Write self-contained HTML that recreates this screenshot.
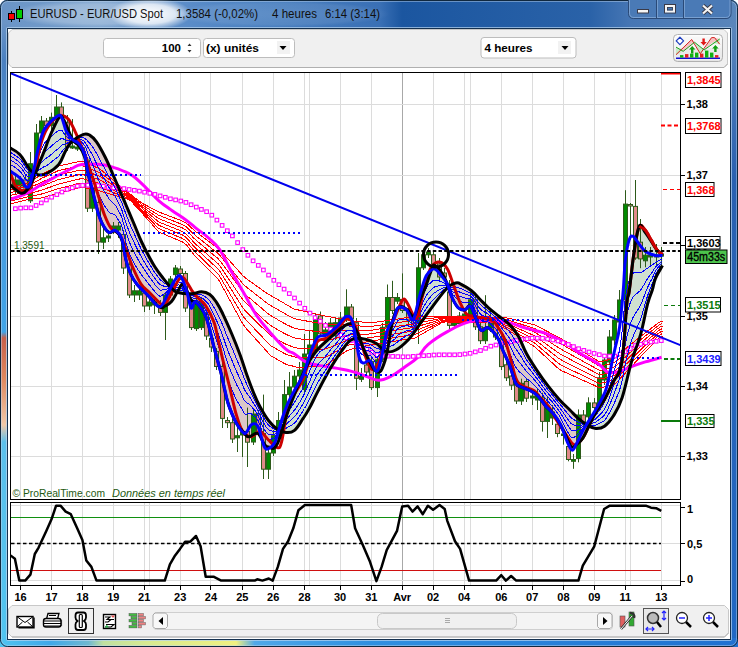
<!DOCTYPE html>
<html><head><meta charset="utf-8">
<style>
html,body{margin:0;padding:0;width:738px;height:647px;overflow:hidden;background:#fff;}
svg{display:block;font-family:"Liberation Sans",sans-serif;}
</style></head><body>
<svg width="738" height="647" viewBox="0 0 738 647">
<defs>
<linearGradient id="tb" x1="0" y1="0" x2="1" y2="0"><stop offset="0.0000" stop-color="#6a94c6"/><stop offset="0.1355" stop-color="#78a0cc"/><stop offset="0.2575" stop-color="#5a8cc8"/><stop offset="0.3523" stop-color="#4a80c0"/><stop offset="0.5149" stop-color="#3a70b5"/><stop offset="0.5447" stop-color="#1b56a0"/><stop offset="0.7995" stop-color="#2a62a8"/><stop offset="0.8537" stop-color="#4676b4"/><stop offset="1.0000" stop-color="#5a86bb"/></linearGradient>
<linearGradient id="lf" x1="0" y1="0" x2="0" y2="1">
<stop offset="0.0000" stop-color="#6a94c6"/><stop offset="0.0578" stop-color="#4a80c0"/><stop offset="0.2825" stop-color="#4a9ade"/><stop offset="0.4944" stop-color="#40a4e8"/><stop offset="0.5040" stop-color="#c8604a"/><stop offset="0.5714" stop-color="#e08a60"/><stop offset="0.6437" stop-color="#f0c8a8"/><stop offset="0.6709" stop-color="#5cc0ec"/><stop offset="1.0000" stop-color="#50c4f0"/>
</linearGradient>
<linearGradient id="rf" x1="0" y1="0" x2="0" y2="1">
<stop offset="0" stop-color="#5a86bb"/><stop offset="0.25" stop-color="#2a60b0"/><stop offset="1" stop-color="#2068c4"/>
</linearGradient>
<linearGradient id="bf" x1="0" y1="0" x2="1" y2="0">
<stop offset="0" stop-color="#50c4f0"/><stop offset="0.068" stop-color="#40a8e8"/><stop offset="0.12" stop-color="#70b8d0"/><stop offset="0.14" stop-color="#c0e0a0"/><stop offset="0.2" stop-color="#d8ea90"/><stop offset="0.32" stop-color="#f0f080"/><stop offset="0.345" stop-color="#50a8e8"/><stop offset="0.5" stop-color="#3090e0"/><stop offset="1" stop-color="#2070d0"/>
</linearGradient>
<radialGradient id="glow" cx="0.5" cy="0.5" r="0.5">
<stop offset="0" stop-color="#ffffff" stop-opacity="0.95"/><stop offset="0.6" stop-color="#ffffff" stop-opacity="0.75"/><stop offset="1" stop-color="#ffffff" stop-opacity="0"/>
</radialGradient>
<radialGradient id="glow2" cx="0.5" cy="0.5" r="0.5">
<stop offset="0" stop-color="#ffffff" stop-opacity="0.35"/><stop offset="0.7" stop-color="#ffffff" stop-opacity="0.25"/><stop offset="1" stop-color="#ffffff" stop-opacity="0"/>
</radialGradient>
<radialGradient id="glow3" cx="0.5" cy="0.5" r="0.5">
<stop offset="0" stop-color="#ffffff" stop-opacity="0.12"/><stop offset="0.8" stop-color="#ffffff" stop-opacity="0.08"/><stop offset="1" stop-color="#ffffff" stop-opacity="0"/>
</radialGradient>
<linearGradient id="btnbg" x1="0" y1="0" x2="0" y2="1">
<stop offset="0" stop-color="#ffffff"/><stop offset="1" stop-color="#e4e4e4"/>
</linearGradient>
<linearGradient id="capbtn" x1="0" y1="0" x2="0" y2="1">
<stop offset="0" stop-color="#5f8ccc"/><stop offset="0.5" stop-color="#3a6db0"/><stop offset="1" stop-color="#2a5fa5"/>
</linearGradient>
<clipPath id="cc"><rect x="11" y="73" width="669" height="426"/></clipPath>
<clipPath id="ci"><rect x="11" y="503" width="669" height="82"/></clipPath>
</defs>
<rect x="0" y="0" width="738" height="647" rx="7" fill="#2c64aa"/>
<rect x="0" y="0" width="738" height="29" rx="7" fill="url(#tb)"/>
<rect x="0" y="24" width="8" height="623" fill="url(#lf)"/>
<rect x="730" y="24" width="8" height="623" fill="url(#rf)"/>
<rect x="0" y="638" width="738" height="9" fill="url(#bf)"/>
<path d="M0,636 V640 Q0,647 7,647 H731 Q738,647 738,640 V636 Z" fill="none"/>
<rect x="0.5" y="0.5" width="737" height="646" rx="7" fill="none" stroke="#10283f"/>
<rect x="1.5" y="1.5" width="735" height="644" rx="6" fill="none" stroke="#c0d8f0" stroke-opacity="0.45"/>
<ellipse cx="100" cy="14" rx="90" ry="14" fill="url(#glow2)"/>
<ellipse cx="150" cy="14" rx="42" ry="16" fill="url(#glow)"/>
<ellipse cx="280" cy="14" rx="110" ry="13" fill="url(#glow3)"/>
<rect x="8.5" y="13.5" width="6" height="6" fill="#f00" stroke="#000"/>
<line x1="11.5" y1="11" x2="11.5" y2="13" stroke="#000"/><line x1="11.5" y1="20" x2="11.5" y2="22" stroke="#000"/>
<rect x="16.5" y="9.5" width="6" height="9" fill="#0c0" stroke="#000"/>
<line x1="19.5" y1="6" x2="19.5" y2="9" stroke="#000"/><line x1="19.5" y1="19" x2="19.5" y2="22" stroke="#000"/>
<text x="30" y="18" font-size="12" fill="#101010" textLength="133" lengthAdjust="spacingAndGlyphs">EURUSD - EUR/USD Spot</text>
<text x="176" y="18" font-size="12" fill="#101010" textLength="82" lengthAdjust="spacingAndGlyphs">1,3584 (-0,02%)</text>
<text x="272" y="18" font-size="12" fill="#101010" textLength="45" lengthAdjust="spacingAndGlyphs">4 heures</text>
<text x="325" y="18" font-size="12" fill="#101010" textLength="55" lengthAdjust="spacingAndGlyphs">6:14 (3:14)</text>
<path d="M628.5,0 V13.5 Q628.5,18.5 633.5,18.5 H726 Q731,18.5 731,13.5 V0" fill="#4a7ab6" stroke="#2a4a78"/>
<path d="M629.5,0 V13 Q629.5,17.5 634,17.5 H725.5 Q730,17.5 730,13 V0" fill="none" stroke="#a0c0e6" stroke-opacity="0.55"/>
<line x1="656.5" y1="0" x2="656.5" y2="18" stroke="#2a4a78"/><line x1="683.5" y1="0" x2="683.5" y2="18" stroke="#2a4a78"/>
<line x1="657.5" y1="0" x2="657.5" y2="17" stroke="#a0c0e6" stroke-opacity="0.5"/><line x1="684.5" y1="0" x2="684.5" y2="17" stroke="#a0c0e6" stroke-opacity="0.5"/>
<rect x="637.5" y="9.5" width="11" height="3.5" fill="#f4f4f4" stroke="#3a3a48" stroke-width="1"/>
<rect x="664.5" y="4.5" width="11" height="8.5" fill="none" stroke="#3a3a48" stroke-width="1"/><rect x="666" y="6" width="8" height="5.5" fill="none" stroke="#f4f4f4" stroke-width="2"/><rect x="667.5" y="7.5" width="5" height="2.5" fill="#4a7ab6" stroke="#3a3a48" stroke-width="0.8"/>
<path d="M703,5.5 L712,13.5 M712,5.5 L703,13.5" stroke="#3a3a48" stroke-width="4"/>
<path d="M703,5.5 L712,13.5 M712,5.5 L703,13.5" stroke="#f4f4f4" stroke-width="2.2"/>
<rect x="6.5" y="27.5" width="725" height="613" rx="1" fill="none" stroke="#b8d4f0" stroke-opacity="0.7"/>
<rect x="7.5" y="28.5" width="723" height="611" fill="#fff" stroke="#14304e"/>
<path d="M8.5,33 L12,29.5 H724 L727.5,33 V64 L724,67.5 H12 L8.5,64 Z" fill="#f0f0f0" stroke="#c8c8c8"/>
<path d="M12,67.5 H724 L727.5,64" fill="none" stroke="#b0b0b0"/>
<rect x="103.5" y="38.5" width="97" height="19" rx="3" fill="#fff" stroke="#bdbdbd"/>
<text x="181" y="52" font-size="11.5" font-weight="bold" text-anchor="end" fill="#000">100</text>
<path d="M187.5,46 L189.5,43.5 L191.5,46 Z M187.5,50 L189.5,52.5 L191.5,50 Z" fill="#333"/>
<rect x="203.5" y="38.5" width="91" height="19" rx="3" fill="#fff" stroke="#bdbdbd"/>
<text x="206" y="52" font-size="11.5" font-weight="bold" fill="#000" textLength="53" lengthAdjust="spacingAndGlyphs">(x) unités</text>
<rect x="277" y="41" width="13" height="13" fill="#f2f2f2"/>
<path d="M279.5,46 L286.5,46 L283,50 Z" fill="#000"/>
<rect x="481" y="37.5" width="95" height="20.5" rx="3" fill="#fff" stroke="#bdbdbd"/>
<text x="484.5" y="52" font-size="11.5" font-weight="bold" fill="#000" textLength="48" lengthAdjust="spacingAndGlyphs">4 heures</text>
<rect x="558" y="41" width="13" height="13" fill="#f2f2f2"/>
<path d="M561.5,46 L568.5,46 L565,50 Z" fill="#000"/>
<rect x="673.5" y="34.5" width="49" height="27" rx="4" fill="url(#btnbg)" stroke="#b0b0b0"/>
<rect x="675.5" y="36.5" width="45" height="23" fill="#f7f7f7"/>
<rect x="675.5" y="48" width="45" height="11" fill="#e4e4e4" opacity="0.7"/>
<path d="M676,54.7 L691.7,39.5 L694.6,42.3 L683.2,51.3 Z" fill="#f5c4c4"/>
<path d="M676,47.1 L683.2,51.3 L676,54.7 Z" fill="#c8ecc8"/>
<path d="M694.6,42.3 L700.3,53.7 L704.1,49.9 Z" fill="#c8ecc8"/>
<path d="M704.1,49.9 L711.6,37.6 L714.5,37.6 L719.7,39 L712,43 Z" fill="#f5c4c4"/>
<path d="M712,43 L719.7,39 L719.7,44.2 Z" fill="#c8ecc8"/>
<path d="M676,54.7 L691.7,39.5 L700.3,53.7 L711.6,37.6 L714.5,37.6 L719.7,44.2" fill="none" stroke="#d42020" stroke-width="1"/>
<path d="M676,47.1 L683.2,51.3 L694.6,42.3 L704.1,49.9 L719.7,39" fill="none" stroke="#20a020" stroke-width="1"/>
<path d="M676,58.3 H720" stroke="#1010d0" stroke-width="1.4"/>
<rect x="680" y="55.1" width="3.4" height="2.5" fill="#10b010"/>
<rect x="685" y="54.1" width="3.4" height="3.5" fill="#e02020"/>
<rect x="690" y="53.6" width="3.4" height="4" fill="#10b010"/>
<rect x="695" y="52.6" width="3.4" height="5" fill="#10b010"/>
<rect x="700" y="53.6" width="3.4" height="4" fill="#e02020"/>
<rect x="705" y="50.6" width="3.4" height="7" fill="#10b010"/>
<rect x="710" y="52.6" width="3.4" height="5" fill="#10b010"/>
<rect x="715" y="55.1" width="3.4" height="2.5" fill="#e02020"/>
<path d="M691,53.5 V49.5 H689 L692.2,46 L695.4,49.5 H693.4 V53.5 Z" fill="#10a010"/>
<path d="M714.2,52 V48.5 H712.2 L715.4,45 L718.6,48.5 H716.6 V52 Z" fill="#10a010"/>
<path d="M702.4,38.5 V42 H700.4 L703.6,45.5 L706.8,42 H704.8 V38.5 Z" fill="#e01818"/>
<path d="M679.9,37.2 L683.6,40.9 L679.9,44.6 L676.2,40.9 Z" fill="#fff" stroke="#2040c0" stroke-width="1.3" stroke-linejoin="round"/>
<path d="M679.9,39 V42.8 M678,40.9 H681.8" stroke="#fff" stroke-width="1.2"/>
<rect x="10.5" y="72.5" width="670" height="427" fill="#fff" stroke="#000"/>
<rect x="10.5" y="502.5" width="670" height="83" fill="#fff" stroke="#000"/>
<line x1="20.5" y1="73" x2="20.5" y2="499" stroke="#dcdcdc"/><line x1="20.5" y1="503" x2="20.5" y2="585" stroke="#dcdcdc"/><line x1="51.5" y1="73" x2="51.5" y2="499" stroke="#dcdcdc"/><line x1="51.5" y1="503" x2="51.5" y2="585" stroke="#dcdcdc"/><line x1="82.5" y1="73" x2="82.5" y2="499" stroke="#dcdcdc"/><line x1="82.5" y1="503" x2="82.5" y2="585" stroke="#dcdcdc"/><line x1="113.5" y1="73" x2="113.5" y2="499" stroke="#dcdcdc"/><line x1="113.5" y1="503" x2="113.5" y2="585" stroke="#dcdcdc"/><line x1="144.5" y1="73" x2="144.5" y2="499" stroke="#dcdcdc"/><line x1="144.5" y1="503" x2="144.5" y2="585" stroke="#dcdcdc"/><line x1="149.5" y1="73" x2="149.5" y2="499" stroke="#dcdcdc"/><line x1="149.5" y1="503" x2="149.5" y2="585" stroke="#dcdcdc"/><line x1="180.5" y1="73" x2="180.5" y2="499" stroke="#dcdcdc"/><line x1="180.5" y1="503" x2="180.5" y2="585" stroke="#dcdcdc"/><line x1="210.5" y1="73" x2="210.5" y2="499" stroke="#dcdcdc"/><line x1="210.5" y1="503" x2="210.5" y2="585" stroke="#dcdcdc"/><line x1="242.5" y1="73" x2="242.5" y2="499" stroke="#dcdcdc"/><line x1="242.5" y1="503" x2="242.5" y2="585" stroke="#dcdcdc"/><line x1="273.5" y1="73" x2="273.5" y2="499" stroke="#dcdcdc"/><line x1="273.5" y1="503" x2="273.5" y2="585" stroke="#dcdcdc"/><line x1="304.5" y1="73" x2="304.5" y2="499" stroke="#dcdcdc"/><line x1="304.5" y1="503" x2="304.5" y2="585" stroke="#dcdcdc"/><line x1="309.5" y1="73" x2="309.5" y2="499" stroke="#dcdcdc"/><line x1="309.5" y1="503" x2="309.5" y2="585" stroke="#dcdcdc"/><line x1="340.5" y1="73" x2="340.5" y2="499" stroke="#dcdcdc"/><line x1="340.5" y1="503" x2="340.5" y2="585" stroke="#dcdcdc"/><line x1="371.5" y1="73" x2="371.5" y2="499" stroke="#dcdcdc"/><line x1="371.5" y1="503" x2="371.5" y2="585" stroke="#dcdcdc"/><line x1="402.5" y1="73" x2="402.5" y2="499" stroke="#a8a8a8"/><line x1="402.5" y1="503" x2="402.5" y2="585" stroke="#a8a8a8"/><line x1="433.5" y1="73" x2="433.5" y2="499" stroke="#dcdcdc"/><line x1="433.5" y1="503" x2="433.5" y2="585" stroke="#dcdcdc"/><line x1="464.5" y1="73" x2="464.5" y2="499" stroke="#dcdcdc"/><line x1="464.5" y1="503" x2="464.5" y2="585" stroke="#dcdcdc"/><line x1="470.5" y1="73" x2="470.5" y2="499" stroke="#dcdcdc"/><line x1="470.5" y1="503" x2="470.5" y2="585" stroke="#dcdcdc"/><line x1="501.5" y1="73" x2="501.5" y2="499" stroke="#dcdcdc"/><line x1="501.5" y1="503" x2="501.5" y2="585" stroke="#dcdcdc"/><line x1="532.5" y1="73" x2="532.5" y2="499" stroke="#dcdcdc"/><line x1="532.5" y1="503" x2="532.5" y2="585" stroke="#dcdcdc"/><line x1="563.5" y1="73" x2="563.5" y2="499" stroke="#dcdcdc"/><line x1="563.5" y1="503" x2="563.5" y2="585" stroke="#dcdcdc"/><line x1="594.5" y1="73" x2="594.5" y2="499" stroke="#dcdcdc"/><line x1="594.5" y1="503" x2="594.5" y2="585" stroke="#dcdcdc"/><line x1="625.5" y1="73" x2="625.5" y2="499" stroke="#dcdcdc"/><line x1="625.5" y1="503" x2="625.5" y2="585" stroke="#dcdcdc"/><line x1="630.5" y1="73" x2="630.5" y2="499" stroke="#dcdcdc"/><line x1="630.5" y1="503" x2="630.5" y2="585" stroke="#dcdcdc"/><line x1="661.5" y1="73" x2="661.5" y2="499" stroke="#dcdcdc"/><line x1="661.5" y1="503" x2="661.5" y2="585" stroke="#dcdcdc"/><line x1="11" y1="104.5" x2="680" y2="104.5" stroke="#dcdcdc"/><line x1="11" y1="175.5" x2="680" y2="175.5" stroke="#dcdcdc"/><line x1="11" y1="245.5" x2="680" y2="245.5" stroke="#dcdcdc"/><line x1="11" y1="316.5" x2="680" y2="316.5" stroke="#dcdcdc"/><line x1="11" y1="386.5" x2="680" y2="386.5" stroke="#dcdcdc"/><line x1="11" y1="456.5" x2="680" y2="456.5" stroke="#dcdcdc"/><line x1="11" y1="505.5" x2="680" y2="505.5" stroke="#dcdcdc"/><line x1="11" y1="543.5" x2="680" y2="543.5" stroke="#dcdcdc"/><line x1="11" y1="580.5" x2="680" y2="580.5" stroke="#dcdcdc"/>
<g clip-path="url(#cc)">
<clipPath id="aboveK2"><path d="M10.0,148.0 C12.0,149.3 15.6,150.0 19.8,154.6 C24.0,159.2 27.2,166.9 31.1,171.0 C35.0,175.1 36.0,174.5 39.3,175.0 C42.6,175.5 43.5,175.4 47.4,173.3 C51.3,171.2 55.2,168.8 58.8,164.4 C62.4,160.0 62.7,156.0 65.3,151.4 C67.9,146.8 68.2,145.0 71.8,141.6 C75.4,138.2 79.9,135.5 83.5,134.3 C87.1,133.1 87.4,133.9 90.0,135.4 C92.6,136.9 93.5,137.6 96.5,141.9 C99.5,146.2 101.6,150.1 105.1,157.0 C108.6,163.9 110.8,169.7 113.8,176.5 C116.8,183.3 117.6,185.3 120.0,191.0 C122.4,196.7 123.1,198.1 126.0,205.0 C128.9,211.9 131.6,218.1 134.7,225.5 C137.8,232.9 138.7,235.8 141.6,242.0 C144.5,248.2 146.3,251.5 149.0,256.5 C151.7,261.5 152.2,262.7 155.0,267.0 C157.8,271.3 159.5,273.6 162.8,277.8 C166.1,282.0 168.5,285.1 171.5,288.0 C174.5,290.9 174.0,291.3 178.0,292.5 C182.0,293.7 187.0,294.0 191.7,293.8 C196.4,293.6 197.9,291.6 201.5,291.7 C205.1,291.8 206.7,292.3 209.8,294.5 C212.9,296.7 214.1,298.8 216.8,302.8 C219.5,306.8 220.1,308.4 223.1,314.6 C226.1,320.8 228.3,325.8 231.8,334.0 C235.3,342.2 237.4,347.5 240.4,355.7 C243.4,363.9 244.3,367.8 246.9,375.1 C249.5,382.4 250.8,386.1 253.4,392.4 C256.0,398.7 256.9,400.9 259.9,406.5 C262.9,412.1 265.0,416.0 268.5,420.5 C272.0,425.0 273.7,426.8 277.2,429.2 C280.7,431.6 282.3,432.2 285.8,432.4 C289.3,432.6 291.0,433.1 294.5,430.3 C298.0,427.5 300.1,422.8 303.1,418.4 C306.1,414.0 306.3,413.9 309.3,408.4 C312.3,402.9 313.7,399.3 318.0,391.1 C322.3,382.9 325.8,376.0 331.0,367.3 C336.2,358.6 339.6,353.4 343.9,347.8 C348.2,342.2 348.3,340.9 352.6,339.2 C356.9,337.5 360.7,338.3 365.5,339.2 C370.3,340.1 372.5,341.1 376.4,343.5 C380.3,345.9 381.1,349.7 385.0,351.0 C388.9,352.3 391.0,352.4 395.8,350.0 C400.6,347.6 404.2,344.0 408.8,339.2 C413.4,334.4 414.4,331.7 418.7,325.8 C423.0,319.9 424.7,317.0 430.3,309.6 C435.9,302.2 441.4,294.0 446.5,288.7 C451.6,283.4 452.6,283.7 455.8,283.0 C459.0,282.3 459.5,283.6 462.6,285.1 C465.7,286.6 467.7,287.7 471.2,290.5 C474.7,293.3 476.4,295.7 479.9,299.2 C483.4,302.7 484.6,304.3 488.5,307.8 C492.4,311.3 495.0,313.0 499.3,316.5 C503.6,320.0 506.3,321.2 510.1,325.1 C513.9,329.0 515.1,330.5 518.4,336.2 C521.7,341.9 522.8,346.8 526.6,353.8 C530.4,360.8 533.1,364.6 537.4,371.1 C541.7,377.6 543.9,380.6 548.2,386.2 C552.5,391.8 554.7,394.4 559.0,399.2 C563.3,404.0 566.0,406.1 569.9,410.0 C573.8,413.9 575.0,415.6 578.5,418.6 C582.0,421.6 583.7,423.1 587.2,425.1 C590.7,427.1 592.3,428.2 595.8,428.4 C599.3,428.6 601.1,428.6 604.5,426.2 C607.9,423.8 609.5,422.1 613.0,416.5 C616.5,410.9 618.3,408.9 622.0,398.0 C625.7,387.1 627.7,374.8 631.4,362.0 C635.1,349.2 637.5,345.7 640.7,334.1 C643.9,322.5 645.3,312.7 647.6,303.9 C649.9,295.1 650.7,295.1 652.3,290.0 C653.9,284.9 653.4,283.5 655.4,278.6 C657.4,273.7 661.1,268.1 662.5,265.5 L662.5,60 L10,60 Z"/></clipPath>
<clipPath id="aboveK1"><path d="M10.0,185.0 C12.2,186.6 17.6,192.3 21.1,193.2 C24.6,194.1 25.1,192.0 27.3,189.5 C29.5,187.0 30.6,184.3 32.3,180.8 C34.0,177.3 34.5,175.9 36.0,172.2 C37.5,168.5 38.0,166.8 39.7,162.3 C41.4,157.8 43.0,154.4 44.7,149.9 C46.4,145.4 46.7,144.2 48.4,140.0 C50.1,135.8 50.9,133.5 53.2,128.9 C55.5,124.3 57.5,118.7 59.7,117.0 C61.9,115.3 61.4,115.8 64.0,120.3 C66.6,124.8 69.7,134.6 72.7,139.7 C75.7,144.8 76.8,142.5 79.2,146.0 C81.6,149.5 82.9,151.8 84.6,157.0 C86.3,162.2 86.3,165.7 87.8,172.2 C89.3,178.7 90.5,182.6 92.2,189.5 C93.9,196.4 94.5,199.9 96.5,206.8 C98.5,213.7 99.8,218.7 102.3,223.8 C104.8,228.9 106.2,231.0 108.8,232.4 C111.4,233.8 112.7,229.5 115.3,231.0 C117.9,232.5 119.6,234.1 121.8,240.0 C124.0,245.9 124.4,253.8 126.1,260.5 C127.8,267.2 128.2,268.7 130.4,273.5 C132.6,278.3 133.4,280.0 136.9,284.3 C140.4,288.6 143.2,290.6 147.7,295.1 C152.2,299.6 156.1,304.8 159.6,307.0 C163.1,309.2 162.6,307.1 165.0,306.0 C167.4,304.9 168.9,304.6 171.5,301.6 C174.1,298.6 175.8,294.3 178.0,290.8 C180.2,287.3 180.6,284.5 182.3,284.3 C184.0,284.1 184.9,286.9 186.6,290.0 C188.3,293.1 189.4,297.6 191.0,300.0 C192.6,302.4 193.0,301.0 194.5,302.0 C196.0,303.0 196.8,302.9 198.7,305.0 C200.6,307.1 202.1,309.0 204.0,312.6 C205.9,316.2 205.9,315.9 208.0,323.2 C210.1,330.5 211.9,339.2 214.5,349.2 C217.1,359.2 218.4,362.6 221.0,373.0 C223.6,383.4 224.4,391.1 227.4,401.0 C230.4,410.9 232.6,416.2 236.1,422.7 C239.6,429.2 242.1,430.7 244.7,433.5 C247.3,436.3 246.4,436.8 249.0,436.8 C251.6,436.8 254.7,432.1 257.7,433.5 C260.7,434.9 262.0,441.3 264.2,444.0 C266.4,446.7 265.9,447.0 268.5,447.0 C271.1,447.0 272.9,452.2 277.2,444.0 C281.5,435.8 283.4,422.8 290.0,406.0 C296.6,389.2 302.0,373.6 310.0,360.0 C318.0,346.4 322.4,345.2 330.0,338.0 C337.6,330.8 343.0,325.6 348.2,324.0 C353.4,322.4 352.6,324.4 356.0,330.0 C359.4,335.6 360.9,343.7 365.0,352.0 C369.1,360.3 372.4,369.8 376.4,371.6 C380.4,373.4 381.6,371.3 385.0,360.8 C388.4,350.3 390.2,329.7 393.2,318.9 C396.2,308.1 397.2,308.9 400.0,307.0 C402.8,305.1 404.2,307.8 407.0,309.6 C409.8,311.4 411.4,317.9 414.0,316.0 C416.6,314.1 417.7,305.9 420.0,300.0 C422.3,294.1 423.4,292.4 425.7,286.4 C428.0,280.4 429.6,274.2 431.5,270.0 C433.4,265.8 432.5,264.1 435.0,265.5 C437.5,266.9 440.8,270.7 444.2,277.0 C447.6,283.3 449.0,290.8 451.8,297.0 C454.6,303.2 455.6,305.2 458.2,307.8 C460.8,310.4 462.1,310.2 464.7,310.0 C467.3,309.8 468.1,303.1 471.2,307.0 C474.3,310.9 477.1,325.4 480.4,329.5 C483.7,333.6 484.5,326.2 487.8,327.7 C491.1,329.2 494.1,332.5 497.1,337.0 C500.1,341.5 500.1,344.1 502.7,350.0 C505.3,355.9 507.5,359.9 510.1,366.6 C512.7,373.3 513.5,379.2 515.7,383.3 C517.9,387.4 518.2,385.5 521.2,387.0 C524.2,388.5 527.2,389.0 530.5,390.8 C533.8,392.6 534.9,393.0 537.9,396.0 C540.9,399.0 542.4,402.3 545.4,405.7 C548.4,409.1 549.8,409.4 552.8,413.1 C555.8,416.8 557.3,418.8 560.3,424.2 C563.3,429.6 565.4,435.4 567.7,440.0 C570.0,444.6 570.3,446.1 572.0,447.0 C573.7,447.9 574.2,446.4 576.4,444.6 C578.6,442.8 580.2,442.0 582.8,438.1 C585.4,434.2 586.7,430.3 589.3,425.1 C591.9,419.9 592.8,417.4 595.8,412.2 C598.8,407.0 601.0,405.3 604.5,399.2 C608.0,393.1 609.6,389.3 613.1,381.9 C616.6,374.5 619.1,378.0 621.8,362.4 C624.5,346.8 625.3,318.2 626.8,303.9 C628.3,289.6 627.8,301.4 629.3,290.7 C630.8,280.0 632.3,263.3 634.3,250.4 C636.3,237.5 637.2,230.0 639.3,226.3 C641.4,222.6 642.7,229.1 645.0,232.0 C647.3,234.9 648.6,237.4 651.0,241.0 C653.4,244.6 654.7,247.3 657.0,250.0 C659.3,252.7 661.4,253.6 662.5,254.5 L662.5,60 L10,60 Z"/></clipPath>
<path d="M10.0,185.0 C12.2,186.6 17.6,192.3 21.1,193.2 C24.6,194.1 25.1,192.0 27.3,189.5 C29.5,187.0 30.6,184.3 32.3,180.8 C34.0,177.3 34.5,175.9 36.0,172.2 C37.5,168.5 38.0,166.8 39.7,162.3 C41.4,157.8 43.0,154.4 44.7,149.9 C46.4,145.4 46.7,144.2 48.4,140.0 C50.1,135.8 50.9,133.5 53.2,128.9 C55.5,124.3 57.5,118.7 59.7,117.0 C61.9,115.3 61.4,115.8 64.0,120.3 C66.6,124.8 69.7,134.6 72.7,139.7 C75.7,144.8 76.8,142.5 79.2,146.0 C81.6,149.5 82.9,151.8 84.6,157.0 C86.3,162.2 86.3,165.7 87.8,172.2 C89.3,178.7 90.5,182.6 92.2,189.5 C93.9,196.4 94.5,199.9 96.5,206.8 C98.5,213.7 99.8,218.7 102.3,223.8 C104.8,228.9 106.2,231.0 108.8,232.4 C111.4,233.8 112.7,229.5 115.3,231.0 C117.9,232.5 119.6,234.1 121.8,240.0 C124.0,245.9 124.4,253.8 126.1,260.5 C127.8,267.2 128.2,268.7 130.4,273.5 C132.6,278.3 133.4,280.0 136.9,284.3 C140.4,288.6 143.2,290.6 147.7,295.1 C152.2,299.6 156.1,304.8 159.6,307.0 C163.1,309.2 162.6,307.1 165.0,306.0 C167.4,304.9 168.9,304.6 171.5,301.6 C174.1,298.6 175.8,294.3 178.0,290.8 C180.2,287.3 180.6,284.5 182.3,284.3 C184.0,284.1 184.9,286.9 186.6,290.0 C188.3,293.1 189.4,297.6 191.0,300.0 C192.6,302.4 193.0,301.0 194.5,302.0 C196.0,303.0 196.8,302.9 198.7,305.0 C200.6,307.1 202.1,309.0 204.0,312.6 C205.9,316.2 205.9,315.9 208.0,323.2 C210.1,330.5 211.9,339.2 214.5,349.2 C217.1,359.2 218.4,362.6 221.0,373.0 C223.6,383.4 224.4,391.1 227.4,401.0 C230.4,410.9 232.6,416.2 236.1,422.7 C239.6,429.2 242.1,430.7 244.7,433.5 C247.3,436.3 246.4,436.8 249.0,436.8 C251.6,436.8 254.7,432.1 257.7,433.5 C260.7,434.9 262.0,441.3 264.2,444.0 C266.4,446.7 265.9,447.0 268.5,447.0 C271.1,447.0 272.9,452.2 277.2,444.0 C281.5,435.8 283.4,422.8 290.0,406.0 C296.6,389.2 302.0,373.6 310.0,360.0 C318.0,346.4 322.4,345.2 330.0,338.0 C337.6,330.8 343.0,325.6 348.2,324.0 C353.4,322.4 352.6,324.4 356.0,330.0 C359.4,335.6 360.9,343.7 365.0,352.0 C369.1,360.3 372.4,369.8 376.4,371.6 C380.4,373.4 381.6,371.3 385.0,360.8 C388.4,350.3 390.2,329.7 393.2,318.9 C396.2,308.1 397.2,308.9 400.0,307.0 C402.8,305.1 404.2,307.8 407.0,309.6 C409.8,311.4 411.4,317.9 414.0,316.0 C416.6,314.1 417.7,305.9 420.0,300.0 C422.3,294.1 423.4,292.4 425.7,286.4 C428.0,280.4 429.6,274.2 431.5,270.0 C433.4,265.8 432.5,264.1 435.0,265.5 C437.5,266.9 440.8,270.7 444.2,277.0 C447.6,283.3 449.0,290.8 451.8,297.0 C454.6,303.2 455.6,305.2 458.2,307.8 C460.8,310.4 462.1,310.2 464.7,310.0 C467.3,309.8 468.1,303.1 471.2,307.0 C474.3,310.9 477.1,325.4 480.4,329.5 C483.7,333.6 484.5,326.2 487.8,327.7 C491.1,329.2 494.1,332.5 497.1,337.0 C500.1,341.5 500.1,344.1 502.7,350.0 C505.3,355.9 507.5,359.9 510.1,366.6 C512.7,373.3 513.5,379.2 515.7,383.3 C517.9,387.4 518.2,385.5 521.2,387.0 C524.2,388.5 527.2,389.0 530.5,390.8 C533.8,392.6 534.9,393.0 537.9,396.0 C540.9,399.0 542.4,402.3 545.4,405.7 C548.4,409.1 549.8,409.4 552.8,413.1 C555.8,416.8 557.3,418.8 560.3,424.2 C563.3,429.6 565.4,435.4 567.7,440.0 C570.0,444.6 570.3,446.1 572.0,447.0 C573.7,447.9 574.2,446.4 576.4,444.6 C578.6,442.8 580.2,442.0 582.8,438.1 C585.4,434.2 586.7,430.3 589.3,425.1 C591.9,419.9 592.8,417.4 595.8,412.2 C598.8,407.0 601.0,405.3 604.5,399.2 C608.0,393.1 609.6,389.3 613.1,381.9 C616.6,374.5 619.1,378.0 621.8,362.4 C624.5,346.8 625.3,318.2 626.8,303.9 C628.3,289.6 627.8,301.4 629.3,290.7 C630.8,280.0 632.3,263.3 634.3,250.4 C636.3,237.5 637.2,230.0 639.3,226.3 C641.4,222.6 642.7,229.1 645.0,232.0 C647.3,234.9 648.6,237.4 651.0,241.0 C653.4,244.6 654.7,247.3 657.0,250.0 C659.3,252.7 661.4,253.6 662.5,254.5 L662.5,520 L10,520 Z" fill="#d0e0d0" clip-path="url(#aboveK2)"/>
<path d="M10.0,148.0 C12.0,149.3 15.6,150.0 19.8,154.6 C24.0,159.2 27.2,166.9 31.1,171.0 C35.0,175.1 36.0,174.5 39.3,175.0 C42.6,175.5 43.5,175.4 47.4,173.3 C51.3,171.2 55.2,168.8 58.8,164.4 C62.4,160.0 62.7,156.0 65.3,151.4 C67.9,146.8 68.2,145.0 71.8,141.6 C75.4,138.2 79.9,135.5 83.5,134.3 C87.1,133.1 87.4,133.9 90.0,135.4 C92.6,136.9 93.5,137.6 96.5,141.9 C99.5,146.2 101.6,150.1 105.1,157.0 C108.6,163.9 110.8,169.7 113.8,176.5 C116.8,183.3 117.6,185.3 120.0,191.0 C122.4,196.7 123.1,198.1 126.0,205.0 C128.9,211.9 131.6,218.1 134.7,225.5 C137.8,232.9 138.7,235.8 141.6,242.0 C144.5,248.2 146.3,251.5 149.0,256.5 C151.7,261.5 152.2,262.7 155.0,267.0 C157.8,271.3 159.5,273.6 162.8,277.8 C166.1,282.0 168.5,285.1 171.5,288.0 C174.5,290.9 174.0,291.3 178.0,292.5 C182.0,293.7 187.0,294.0 191.7,293.8 C196.4,293.6 197.9,291.6 201.5,291.7 C205.1,291.8 206.7,292.3 209.8,294.5 C212.9,296.7 214.1,298.8 216.8,302.8 C219.5,306.8 220.1,308.4 223.1,314.6 C226.1,320.8 228.3,325.8 231.8,334.0 C235.3,342.2 237.4,347.5 240.4,355.7 C243.4,363.9 244.3,367.8 246.9,375.1 C249.5,382.4 250.8,386.1 253.4,392.4 C256.0,398.7 256.9,400.9 259.9,406.5 C262.9,412.1 265.0,416.0 268.5,420.5 C272.0,425.0 273.7,426.8 277.2,429.2 C280.7,431.6 282.3,432.2 285.8,432.4 C289.3,432.6 291.0,433.1 294.5,430.3 C298.0,427.5 300.1,422.8 303.1,418.4 C306.1,414.0 306.3,413.9 309.3,408.4 C312.3,402.9 313.7,399.3 318.0,391.1 C322.3,382.9 325.8,376.0 331.0,367.3 C336.2,358.6 339.6,353.4 343.9,347.8 C348.2,342.2 348.3,340.9 352.6,339.2 C356.9,337.5 360.7,338.3 365.5,339.2 C370.3,340.1 372.5,341.1 376.4,343.5 C380.3,345.9 381.1,349.7 385.0,351.0 C388.9,352.3 391.0,352.4 395.8,350.0 C400.6,347.6 404.2,344.0 408.8,339.2 C413.4,334.4 414.4,331.7 418.7,325.8 C423.0,319.9 424.7,317.0 430.3,309.6 C435.9,302.2 441.4,294.0 446.5,288.7 C451.6,283.4 452.6,283.7 455.8,283.0 C459.0,282.3 459.5,283.6 462.6,285.1 C465.7,286.6 467.7,287.7 471.2,290.5 C474.7,293.3 476.4,295.7 479.9,299.2 C483.4,302.7 484.6,304.3 488.5,307.8 C492.4,311.3 495.0,313.0 499.3,316.5 C503.6,320.0 506.3,321.2 510.1,325.1 C513.9,329.0 515.1,330.5 518.4,336.2 C521.7,341.9 522.8,346.8 526.6,353.8 C530.4,360.8 533.1,364.6 537.4,371.1 C541.7,377.6 543.9,380.6 548.2,386.2 C552.5,391.8 554.7,394.4 559.0,399.2 C563.3,404.0 566.0,406.1 569.9,410.0 C573.8,413.9 575.0,415.6 578.5,418.6 C582.0,421.6 583.7,423.1 587.2,425.1 C590.7,427.1 592.3,428.2 595.8,428.4 C599.3,428.6 601.1,428.6 604.5,426.2 C607.9,423.8 609.5,422.1 613.0,416.5 C616.5,410.9 618.3,408.9 622.0,398.0 C625.7,387.1 627.7,374.8 631.4,362.0 C635.1,349.2 637.5,345.7 640.7,334.1 C643.9,322.5 645.3,312.7 647.6,303.9 C649.9,295.1 650.7,295.1 652.3,290.0 C653.9,284.9 653.4,283.5 655.4,278.6 C657.4,273.7 661.1,268.1 662.5,265.5 L662.5,520 L10,520 Z" fill="#dcc8c8" clip-path="url(#aboveK1)"/>
<line x1="10.5" y1="172.0" x2="10.5" y2="190.0" stroke="#2d5a1a"/><rect x="8.5" y="176.0" width="4" height="10.0" fill="#e08a8a" stroke="#2d5a1a" stroke-width="1"/><line x1="15.5" y1="176.0" x2="15.5" y2="194.0" stroke="#2d5a1a"/><rect x="13.5" y="180.0" width="4" height="10.0" fill="#008a00" stroke="#2d5a1a" stroke-width="1"/><line x1="20.5" y1="176.0" x2="20.5" y2="190.0" stroke="#2d5a1a"/><rect x="18.5" y="180.0" width="4" height="6.0" fill="#008a00" stroke="#2d5a1a" stroke-width="1"/><line x1="25.5" y1="176.0" x2="25.5" y2="192.0" stroke="#2d5a1a"/><rect x="23.5" y="180.0" width="4" height="8.0" fill="#e08a8a" stroke="#2d5a1a" stroke-width="1"/><line x1="30.5" y1="152.0" x2="30.5" y2="203.0" stroke="#2d5a1a"/><rect x="28.5" y="163.7" width="4" height="37.1" fill="#008a00" stroke="#2d5a1a" stroke-width="1"/><line x1="36.5" y1="124.0" x2="36.5" y2="167.0" stroke="#2d5a1a"/><rect x="34.5" y="133.0" width="4" height="30.7" fill="#008a00" stroke="#2d5a1a" stroke-width="1"/><line x1="41.5" y1="116.0" x2="41.5" y2="135.0" stroke="#2d5a1a"/><rect x="39.5" y="121.0" width="4" height="12.0" fill="#008a00" stroke="#2d5a1a" stroke-width="1"/><line x1="46.5" y1="118.0" x2="46.5" y2="127.0" stroke="#2d5a1a"/><rect x="44.5" y="121.0" width="4" height="4.6" fill="#e08a8a" stroke="#2d5a1a" stroke-width="1"/><line x1="51.5" y1="112.6" x2="51.5" y2="132.0" stroke="#2d5a1a"/><rect x="49.5" y="117.3" width="4" height="8.3" fill="#008a00" stroke="#2d5a1a" stroke-width="1"/><line x1="56.5" y1="95.0" x2="56.5" y2="118.0" stroke="#2d5a1a"/><rect x="54.5" y="107.0" width="4" height="9.3" fill="#008a00" stroke="#2d5a1a" stroke-width="1"/><line x1="61.5" y1="102.4" x2="61.5" y2="119.0" stroke="#2d5a1a"/><rect x="59.5" y="107.0" width="4" height="8.4" fill="#e08a8a" stroke="#2d5a1a" stroke-width="1"/><line x1="67.5" y1="115.0" x2="67.5" y2="151.0" stroke="#2d5a1a"/><rect x="65.5" y="122.8" width="4" height="24.2" fill="#e08a8a" stroke="#2d5a1a" stroke-width="1"/><line x1="72.5" y1="119.0" x2="72.5" y2="149.0" stroke="#2d5a1a"/><rect x="70.5" y="146.0" width="4" height="2.0" fill="#008a00" stroke="#2d5a1a" stroke-width="1"/><line x1="77.5" y1="144.0" x2="77.5" y2="151.0" stroke="#2d5a1a"/><rect x="75.5" y="147.0" width="4" height="2.0" fill="#008a00" stroke="#2d5a1a" stroke-width="1"/><line x1="82.5" y1="145.0" x2="82.5" y2="153.0" stroke="#2d5a1a"/><rect x="80.5" y="148.0" width="4" height="2.0" fill="#008a00" stroke="#2d5a1a" stroke-width="1"/><line x1="87.5" y1="158.0" x2="87.5" y2="212.0" stroke="#2d5a1a"/><rect x="85.5" y="160.0" width="4" height="48.2" fill="#e08a8a" stroke="#2d5a1a" stroke-width="1"/><line x1="92.5" y1="185.0" x2="92.5" y2="212.0" stroke="#2d5a1a"/><rect x="90.5" y="187.8" width="4" height="20.4" fill="#008a00" stroke="#2d5a1a" stroke-width="1"/><line x1="98.5" y1="200.0" x2="98.5" y2="254.0" stroke="#2d5a1a"/><rect x="96.5" y="202.6" width="4" height="39.4" fill="#e08a8a" stroke="#2d5a1a" stroke-width="1"/><line x1="103.5" y1="226.0" x2="103.5" y2="249.0" stroke="#2d5a1a"/><rect x="101.5" y="237.8" width="4" height="4.4" fill="#008a00" stroke="#2d5a1a" stroke-width="1"/><line x1="108.5" y1="230.0" x2="108.5" y2="242.0" stroke="#2d5a1a"/><rect x="106.5" y="236.0" width="4" height="2.0" fill="#008a00" stroke="#2d5a1a" stroke-width="1"/><line x1="113.5" y1="222.0" x2="113.5" y2="234.0" stroke="#2d5a1a"/><rect x="111.5" y="226.0" width="4" height="4.0" fill="#008a00" stroke="#2d5a1a" stroke-width="1"/><line x1="118.5" y1="222.0" x2="118.5" y2="238.0" stroke="#2d5a1a"/><rect x="116.5" y="226.0" width="4" height="4.0" fill="#008a00" stroke="#2d5a1a" stroke-width="1"/><line x1="123.5" y1="230.0" x2="123.5" y2="274.0" stroke="#2d5a1a"/><rect x="121.5" y="234.6" width="4" height="33.4" fill="#e08a8a" stroke="#2d5a1a" stroke-width="1"/><line x1="129.5" y1="262.0" x2="129.5" y2="298.0" stroke="#2d5a1a"/><rect x="127.5" y="264.9" width="4" height="30.1" fill="#e08a8a" stroke="#2d5a1a" stroke-width="1"/><line x1="134.5" y1="285.0" x2="134.5" y2="302.0" stroke="#2d5a1a"/><rect x="132.5" y="290.8" width="4" height="4.2" fill="#008a00" stroke="#2d5a1a" stroke-width="1"/><line x1="139.5" y1="286.0" x2="139.5" y2="300.0" stroke="#2d5a1a"/><rect x="137.5" y="290.8" width="4" height="4.2" fill="#008a00" stroke="#2d5a1a" stroke-width="1"/><line x1="144.5" y1="290.0" x2="144.5" y2="312.0" stroke="#2d5a1a"/><rect x="142.5" y="293.0" width="4" height="13.0" fill="#e08a8a" stroke="#2d5a1a" stroke-width="1"/><line x1="149.5" y1="296.0" x2="149.5" y2="310.0" stroke="#2d5a1a"/><rect x="147.5" y="302.0" width="4" height="4.0" fill="#008a00" stroke="#2d5a1a" stroke-width="1"/><line x1="154.5" y1="298.0" x2="154.5" y2="314.0" stroke="#2d5a1a"/><rect x="152.5" y="302.0" width="4" height="3.0" fill="#008a00" stroke="#2d5a1a" stroke-width="1"/><line x1="160.5" y1="300.0" x2="160.5" y2="316.0" stroke="#2d5a1a"/><rect x="158.5" y="306.0" width="4" height="6.4" fill="#e08a8a" stroke="#2d5a1a" stroke-width="1"/><line x1="165.5" y1="292.0" x2="165.5" y2="340.0" stroke="#2d5a1a"/><rect x="163.5" y="295.0" width="4" height="17.4" fill="#008a00" stroke="#2d5a1a" stroke-width="1"/><line x1="170.5" y1="276.0" x2="170.5" y2="298.0" stroke="#2d5a1a"/><rect x="168.5" y="279.0" width="4" height="16.0" fill="#008a00" stroke="#2d5a1a" stroke-width="1"/><line x1="175.5" y1="265.0" x2="175.5" y2="280.0" stroke="#2d5a1a"/><rect x="173.5" y="268.0" width="4" height="6.6" fill="#008a00" stroke="#2d5a1a" stroke-width="1"/><line x1="180.5" y1="266.0" x2="180.5" y2="280.0" stroke="#2d5a1a"/><rect x="178.5" y="269.0" width="4" height="4.5" fill="#e08a8a" stroke="#2d5a1a" stroke-width="1"/><line x1="185.5" y1="271.0" x2="185.5" y2="312.0" stroke="#2d5a1a"/><rect x="183.5" y="273.5" width="4" height="34.5" fill="#e08a8a" stroke="#2d5a1a" stroke-width="1"/><line x1="191.5" y1="300.0" x2="191.5" y2="330.0" stroke="#2d5a1a"/><rect x="189.5" y="306.0" width="4" height="21.6" fill="#e08a8a" stroke="#2d5a1a" stroke-width="1"/><line x1="196.5" y1="292.0" x2="196.5" y2="331.0" stroke="#2d5a1a"/><rect x="194.5" y="301.6" width="4" height="27.0" fill="#008a00" stroke="#2d5a1a" stroke-width="1"/><line x1="201.5" y1="297.0" x2="201.5" y2="330.0" stroke="#2d5a1a"/><rect x="199.5" y="301.6" width="4" height="26.0" fill="#008a00" stroke="#2d5a1a" stroke-width="1"/><line x1="206.5" y1="310.0" x2="206.5" y2="340.0" stroke="#2d5a1a"/><rect x="204.5" y="314.6" width="4" height="21.4" fill="#e08a8a" stroke="#2d5a1a" stroke-width="1"/><line x1="211.5" y1="335.0" x2="211.5" y2="352.0" stroke="#2d5a1a"/><rect x="209.5" y="338.4" width="4" height="8.6" fill="#e08a8a" stroke="#2d5a1a" stroke-width="1"/><line x1="216.5" y1="348.0" x2="216.5" y2="370.0" stroke="#2d5a1a"/><rect x="214.5" y="351.4" width="4" height="15.1" fill="#e08a8a" stroke="#2d5a1a" stroke-width="1"/><line x1="222.5" y1="360.0" x2="222.5" y2="428.0" stroke="#2d5a1a"/><rect x="220.5" y="366.5" width="4" height="51.9" fill="#e08a8a" stroke="#2d5a1a" stroke-width="1"/><line x1="227.5" y1="417.0" x2="227.5" y2="428.0" stroke="#2d5a1a"/><rect x="225.5" y="420.5" width="4" height="2.2" fill="#e08a8a" stroke="#2d5a1a" stroke-width="1"/><line x1="232.5" y1="419.0" x2="232.5" y2="443.0" stroke="#2d5a1a"/><rect x="230.5" y="422.7" width="4" height="16.3" fill="#e08a8a" stroke="#2d5a1a" stroke-width="1"/><line x1="237.5" y1="425.0" x2="237.5" y2="452.0" stroke="#2d5a1a"/><rect x="235.5" y="435.7" width="4" height="2.1" fill="#008a00" stroke="#2d5a1a" stroke-width="1"/><line x1="242.5" y1="428.0" x2="242.5" y2="457.0" stroke="#2d5a1a"/><rect x="240.5" y="432.0" width="4" height="3.0" fill="#008a00" stroke="#2d5a1a" stroke-width="1"/><line x1="247.5" y1="407.6" x2="247.5" y2="467.0" stroke="#2d5a1a"/><rect x="245.5" y="431.4" width="4" height="10.8" fill="#e08a8a" stroke="#2d5a1a" stroke-width="1"/><line x1="253.5" y1="410.0" x2="253.5" y2="445.0" stroke="#2d5a1a"/><rect x="251.5" y="414.0" width="4" height="28.0" fill="#008a00" stroke="#2d5a1a" stroke-width="1"/><line x1="258.5" y1="410.0" x2="258.5" y2="436.0" stroke="#2d5a1a"/><rect x="256.5" y="414.0" width="4" height="17.4" fill="#e08a8a" stroke="#2d5a1a" stroke-width="1"/><line x1="263.5" y1="394.6" x2="263.5" y2="479.0" stroke="#2d5a1a"/><rect x="261.5" y="433.5" width="4" height="35.7" fill="#e08a8a" stroke="#2d5a1a" stroke-width="1"/><line x1="268.5" y1="449.0" x2="268.5" y2="479.0" stroke="#2d5a1a"/><rect x="266.5" y="453.0" width="4" height="16.2" fill="#008a00" stroke="#2d5a1a" stroke-width="1"/><line x1="273.5" y1="430.0" x2="273.5" y2="456.0" stroke="#2d5a1a"/><rect x="271.5" y="435.7" width="4" height="17.3" fill="#008a00" stroke="#2d5a1a" stroke-width="1"/><line x1="278.5" y1="412.0" x2="278.5" y2="440.0" stroke="#2d5a1a"/><rect x="276.5" y="420.5" width="4" height="15.2" fill="#008a00" stroke="#2d5a1a" stroke-width="1"/><line x1="284.5" y1="380.0" x2="284.5" y2="424.0" stroke="#2d5a1a"/><rect x="282.5" y="394.6" width="4" height="25.9" fill="#008a00" stroke="#2d5a1a" stroke-width="1"/><line x1="289.5" y1="372.0" x2="289.5" y2="398.0" stroke="#2d5a1a"/><rect x="287.5" y="387.0" width="4" height="7.6" fill="#008a00" stroke="#2d5a1a" stroke-width="1"/><line x1="294.5" y1="370.0" x2="294.5" y2="390.0" stroke="#2d5a1a"/><rect x="292.5" y="376.2" width="4" height="10.8" fill="#008a00" stroke="#2d5a1a" stroke-width="1"/><line x1="299.5" y1="362.0" x2="299.5" y2="380.0" stroke="#2d5a1a"/><rect x="297.5" y="370.0" width="4" height="6.0" fill="#008a00" stroke="#2d5a1a" stroke-width="1"/><line x1="304.5" y1="334.0" x2="304.5" y2="393.0" stroke="#2d5a1a"/><rect x="302.5" y="354.0" width="4" height="35.5" fill="#008a00" stroke="#2d5a1a" stroke-width="1"/><line x1="309.5" y1="330.0" x2="309.5" y2="358.0" stroke="#2d5a1a"/><rect x="307.5" y="345.0" width="4" height="9.0" fill="#008a00" stroke="#2d5a1a" stroke-width="1"/><line x1="315.5" y1="314.0" x2="315.5" y2="354.0" stroke="#2d5a1a"/><rect x="313.5" y="318.0" width="4" height="32.5" fill="#008a00" stroke="#2d5a1a" stroke-width="1"/><line x1="320.5" y1="311.5" x2="320.5" y2="336.0" stroke="#2d5a1a"/><rect x="318.5" y="316.0" width="4" height="17.8" fill="#e08a8a" stroke="#2d5a1a" stroke-width="1"/><line x1="325.5" y1="322.0" x2="325.5" y2="340.0" stroke="#2d5a1a"/><rect x="323.5" y="330.0" width="4" height="5.0" fill="#008a00" stroke="#2d5a1a" stroke-width="1"/><line x1="330.5" y1="318.0" x2="330.5" y2="336.0" stroke="#2d5a1a"/><rect x="328.5" y="323.0" width="4" height="9.0" fill="#008a00" stroke="#2d5a1a" stroke-width="1"/><line x1="335.5" y1="318.0" x2="335.5" y2="340.0" stroke="#2d5a1a"/><rect x="333.5" y="322.7" width="4" height="13.0" fill="#008a00" stroke="#2d5a1a" stroke-width="1"/><line x1="340.5" y1="312.0" x2="340.5" y2="330.0" stroke="#2d5a1a"/><rect x="338.5" y="318.0" width="4" height="5.0" fill="#008a00" stroke="#2d5a1a" stroke-width="1"/><line x1="346.5" y1="289.3" x2="346.5" y2="322.0" stroke="#2d5a1a"/><rect x="344.5" y="307.0" width="4" height="13.0" fill="#008a00" stroke="#2d5a1a" stroke-width="1"/><line x1="351.5" y1="304.0" x2="351.5" y2="322.0" stroke="#2d5a1a"/><rect x="349.5" y="307.0" width="4" height="12.0" fill="#e08a8a" stroke="#2d5a1a" stroke-width="1"/><line x1="356.5" y1="318.0" x2="356.5" y2="390.0" stroke="#2d5a1a"/><rect x="354.5" y="322.7" width="4" height="55.6" fill="#e08a8a" stroke="#2d5a1a" stroke-width="1"/><line x1="361.5" y1="368.0" x2="361.5" y2="382.0" stroke="#2d5a1a"/><rect x="359.5" y="376.5" width="4" height="2.8" fill="#008a00" stroke="#2d5a1a" stroke-width="1"/><line x1="366.5" y1="360.0" x2="366.5" y2="376.0" stroke="#2d5a1a"/><rect x="364.5" y="365.0" width="4" height="7.0" fill="#e08a8a" stroke="#2d5a1a" stroke-width="1"/><line x1="371.5" y1="357.0" x2="371.5" y2="390.0" stroke="#2d5a1a"/><rect x="369.5" y="361.6" width="4" height="26.0" fill="#e08a8a" stroke="#2d5a1a" stroke-width="1"/><line x1="377.5" y1="355.0" x2="377.5" y2="397.0" stroke="#2d5a1a"/><rect x="375.5" y="359.8" width="4" height="27.8" fill="#008a00" stroke="#2d5a1a" stroke-width="1"/><line x1="382.5" y1="323.0" x2="382.5" y2="362.0" stroke="#2d5a1a"/><rect x="380.5" y="327.3" width="4" height="32.5" fill="#008a00" stroke="#2d5a1a" stroke-width="1"/><line x1="387.5" y1="284.5" x2="387.5" y2="330.0" stroke="#2d5a1a"/><rect x="385.5" y="297.5" width="4" height="29.7" fill="#008a00" stroke="#2d5a1a" stroke-width="1"/><line x1="392.5" y1="280.8" x2="392.5" y2="314.0" stroke="#2d5a1a"/><rect x="390.5" y="297.5" width="4" height="13.0" fill="#e08a8a" stroke="#2d5a1a" stroke-width="1"/><line x1="397.5" y1="293.0" x2="397.5" y2="304.0" stroke="#2d5a1a"/><rect x="395.5" y="297.5" width="4" height="3.7" fill="#008a00" stroke="#2d5a1a" stroke-width="1"/><line x1="402.5" y1="273.4" x2="402.5" y2="313.0" stroke="#2d5a1a"/><rect x="400.5" y="299.4" width="4" height="11.1" fill="#e08a8a" stroke="#2d5a1a" stroke-width="1"/><line x1="408.5" y1="305.0" x2="408.5" y2="324.0" stroke="#2d5a1a"/><rect x="406.5" y="310.0" width="4" height="10.0" fill="#e08a8a" stroke="#2d5a1a" stroke-width="1"/><line x1="413.5" y1="314.0" x2="413.5" y2="330.0" stroke="#2d5a1a"/><rect x="411.5" y="319.8" width="4" height="7.4" fill="#e08a8a" stroke="#2d5a1a" stroke-width="1"/><line x1="418.5" y1="253.0" x2="418.5" y2="344.0" stroke="#2d5a1a"/><rect x="416.5" y="267.8" width="4" height="55.7" fill="#008a00" stroke="#2d5a1a" stroke-width="1"/><line x1="423.5" y1="250.0" x2="423.5" y2="270.0" stroke="#2d5a1a"/><rect x="421.5" y="254.8" width="4" height="13.0" fill="#008a00" stroke="#2d5a1a" stroke-width="1"/><line x1="428.5" y1="248.0" x2="428.5" y2="258.0" stroke="#2d5a1a"/><rect x="426.5" y="252.0" width="4" height="2.8" fill="#008a00" stroke="#2d5a1a" stroke-width="1"/><line x1="433.5" y1="250.0" x2="433.5" y2="266.0" stroke="#2d5a1a"/><rect x="431.5" y="254.8" width="4" height="9.3" fill="#e08a8a" stroke="#2d5a1a" stroke-width="1"/><line x1="439.5" y1="258.0" x2="439.5" y2="281.0" stroke="#2d5a1a"/><rect x="437.5" y="264.0" width="4" height="13.0" fill="#e08a8a" stroke="#2d5a1a" stroke-width="1"/><line x1="444.5" y1="268.0" x2="444.5" y2="281.0" stroke="#2d5a1a"/><rect x="442.5" y="273.0" width="4" height="4.0" fill="#e08a8a" stroke="#2d5a1a" stroke-width="1"/><line x1="449.5" y1="280.0" x2="449.5" y2="330.0" stroke="#2d5a1a"/><rect x="447.5" y="292.0" width="4" height="33.4" fill="#e08a8a" stroke="#2d5a1a" stroke-width="1"/><line x1="454.5" y1="316.0" x2="454.5" y2="328.0" stroke="#2d5a1a"/><rect x="452.5" y="321.6" width="4" height="3.8" fill="#008a00" stroke="#2d5a1a" stroke-width="1"/><line x1="459.5" y1="312.0" x2="459.5" y2="326.0" stroke="#2d5a1a"/><rect x="457.5" y="316.0" width="4" height="7.5" fill="#008a00" stroke="#2d5a1a" stroke-width="1"/><line x1="464.5" y1="308.0" x2="464.5" y2="322.0" stroke="#2d5a1a"/><rect x="462.5" y="314.0" width="4" height="4.0" fill="#008a00" stroke="#2d5a1a" stroke-width="1"/><line x1="470.5" y1="292.0" x2="470.5" y2="318.0" stroke="#2d5a1a"/><rect x="468.5" y="299.8" width="4" height="14.9" fill="#008a00" stroke="#2d5a1a" stroke-width="1"/><line x1="475.5" y1="296.0" x2="475.5" y2="330.0" stroke="#2d5a1a"/><rect x="473.5" y="299.8" width="4" height="27.0" fill="#e08a8a" stroke="#2d5a1a" stroke-width="1"/><line x1="480.5" y1="322.0" x2="480.5" y2="344.0" stroke="#2d5a1a"/><rect x="478.5" y="326.8" width="4" height="13.9" fill="#e08a8a" stroke="#2d5a1a" stroke-width="1"/><line x1="485.5" y1="295.2" x2="485.5" y2="344.0" stroke="#2d5a1a"/><rect x="483.5" y="327.7" width="4" height="13.0" fill="#008a00" stroke="#2d5a1a" stroke-width="1"/><line x1="490.5" y1="310.0" x2="490.5" y2="332.0" stroke="#2d5a1a"/><rect x="488.5" y="320.0" width="4" height="8.0" fill="#008a00" stroke="#2d5a1a" stroke-width="1"/><line x1="495.5" y1="318.0" x2="495.5" y2="340.0" stroke="#2d5a1a"/><rect x="493.5" y="322.0" width="4" height="15.0" fill="#e08a8a" stroke="#2d5a1a" stroke-width="1"/><line x1="501.5" y1="334.0" x2="501.5" y2="370.0" stroke="#2d5a1a"/><rect x="499.5" y="338.8" width="4" height="27.8" fill="#e08a8a" stroke="#2d5a1a" stroke-width="1"/><line x1="506.5" y1="360.0" x2="506.5" y2="381.0" stroke="#2d5a1a"/><rect x="504.5" y="364.8" width="4" height="13.0" fill="#e08a8a" stroke="#2d5a1a" stroke-width="1"/><line x1="511.5" y1="372.0" x2="511.5" y2="390.0" stroke="#2d5a1a"/><rect x="509.5" y="376.0" width="4" height="9.2" fill="#e08a8a" stroke="#2d5a1a" stroke-width="1"/><line x1="516.5" y1="378.0" x2="516.5" y2="404.0" stroke="#2d5a1a"/><rect x="514.5" y="383.3" width="4" height="17.7" fill="#e08a8a" stroke="#2d5a1a" stroke-width="1"/><line x1="521.5" y1="378.7" x2="521.5" y2="405.0" stroke="#2d5a1a"/><rect x="519.5" y="383.3" width="4" height="17.7" fill="#008a00" stroke="#2d5a1a" stroke-width="1"/><line x1="526.5" y1="378.0" x2="526.5" y2="402.0" stroke="#2d5a1a"/><rect x="524.5" y="381.5" width="4" height="16.7" fill="#e08a8a" stroke="#2d5a1a" stroke-width="1"/><line x1="532.5" y1="390.0" x2="532.5" y2="405.0" stroke="#2d5a1a"/><rect x="530.5" y="396.0" width="4" height="2.0" fill="#008a00" stroke="#2d5a1a" stroke-width="1"/><line x1="537.5" y1="388.0" x2="537.5" y2="410.0" stroke="#2d5a1a"/><rect x="535.5" y="395.0" width="4" height="5.0" fill="#008a00" stroke="#2d5a1a" stroke-width="1"/><line x1="542.5" y1="392.7" x2="542.5" y2="431.6" stroke="#2d5a1a"/><rect x="540.5" y="397.3" width="4" height="24.1" fill="#e08a8a" stroke="#2d5a1a" stroke-width="1"/><line x1="547.5" y1="396.4" x2="547.5" y2="438.0" stroke="#2d5a1a"/><rect x="545.5" y="407.5" width="4" height="13.9" fill="#008a00" stroke="#2d5a1a" stroke-width="1"/><line x1="552.5" y1="405.0" x2="552.5" y2="425.0" stroke="#2d5a1a"/><rect x="550.5" y="412.0" width="4" height="6.0" fill="#008a00" stroke="#2d5a1a" stroke-width="1"/><line x1="557.5" y1="420.0" x2="557.5" y2="437.2" stroke="#2d5a1a"/><rect x="555.5" y="424.2" width="4" height="9.3" fill="#e08a8a" stroke="#2d5a1a" stroke-width="1"/><line x1="563.5" y1="430.0" x2="563.5" y2="444.6" stroke="#2d5a1a"/><rect x="561.5" y="434.0" width="4" height="1.5" fill="#008a00" stroke="#2d5a1a" stroke-width="1"/><line x1="568.5" y1="440.0" x2="568.5" y2="461.3" stroke="#2d5a1a"/><rect x="566.5" y="446.5" width="4" height="13.0" fill="#e08a8a" stroke="#2d5a1a" stroke-width="1"/><line x1="573.5" y1="454.0" x2="573.5" y2="468.8" stroke="#2d5a1a"/><rect x="571.5" y="459.5" width="4" height="1.8" fill="#008a00" stroke="#2d5a1a" stroke-width="1"/><line x1="578.5" y1="409.4" x2="578.5" y2="462.3" stroke="#2d5a1a"/><rect x="576.5" y="415.0" width="4" height="43.6" fill="#008a00" stroke="#2d5a1a" stroke-width="1"/><line x1="583.5" y1="410.0" x2="583.5" y2="428.0" stroke="#2d5a1a"/><rect x="581.5" y="415.0" width="4" height="7.0" fill="#e08a8a" stroke="#2d5a1a" stroke-width="1"/><line x1="588.5" y1="397.3" x2="588.5" y2="420.0" stroke="#2d5a1a"/><rect x="586.5" y="402.9" width="4" height="13.9" fill="#008a00" stroke="#2d5a1a" stroke-width="1"/><line x1="594.5" y1="398.0" x2="594.5" y2="412.0" stroke="#2d5a1a"/><rect x="592.5" y="402.9" width="4" height="4.6" fill="#e08a8a" stroke="#2d5a1a" stroke-width="1"/><line x1="599.5" y1="372.0" x2="599.5" y2="408.0" stroke="#2d5a1a"/><rect x="597.5" y="377.8" width="4" height="27.9" fill="#008a00" stroke="#2d5a1a" stroke-width="1"/><line x1="604.5" y1="355.0" x2="604.5" y2="385.0" stroke="#2d5a1a"/><rect x="602.5" y="360.0" width="4" height="20.0" fill="#008a00" stroke="#2d5a1a" stroke-width="1"/><line x1="609.5" y1="330.0" x2="609.5" y2="365.0" stroke="#2d5a1a"/><rect x="607.5" y="337.0" width="4" height="25.0" fill="#008a00" stroke="#2d5a1a" stroke-width="1"/><line x1="614.5" y1="315.0" x2="614.5" y2="345.0" stroke="#2d5a1a"/><rect x="612.5" y="320.0" width="4" height="20.0" fill="#008a00" stroke="#2d5a1a" stroke-width="1"/><line x1="619.5" y1="290.0" x2="619.5" y2="325.0" stroke="#2d5a1a"/><rect x="617.5" y="300.0" width="4" height="22.0" fill="#008a00" stroke="#2d5a1a" stroke-width="1"/><line x1="625.5" y1="190.2" x2="625.5" y2="305.0" stroke="#2d5a1a"/><rect x="623.5" y="204.1" width="4" height="95.9" fill="#008a00" stroke="#2d5a1a" stroke-width="1"/><line x1="630.5" y1="203.0" x2="630.5" y2="240.0" stroke="#2d5a1a"/><rect x="628.5" y="204.5" width="4" height="1.5" fill="#e08a8a" stroke="#2d5a1a" stroke-width="1"/><line x1="635.5" y1="180.0" x2="635.5" y2="259.8" stroke="#2d5a1a"/><rect x="633.5" y="206.4" width="4" height="51.6" fill="#e08a8a" stroke="#2d5a1a" stroke-width="1"/><line x1="640.5" y1="219.0" x2="640.5" y2="268.2" stroke="#2d5a1a"/><rect x="638.5" y="242.2" width="4" height="16.7" fill="#e08a8a" stroke="#2d5a1a" stroke-width="1"/><line x1="645.5" y1="247.0" x2="645.5" y2="267.3" stroke="#2d5a1a"/><rect x="643.5" y="255.2" width="4" height="5.6" fill="#008a00" stroke="#2d5a1a" stroke-width="1"/><line x1="650.5" y1="247.0" x2="650.5" y2="265.0" stroke="#2d5a1a"/><rect x="648.5" y="255.0" width="4" height="2.0" fill="#008a00" stroke="#2d5a1a" stroke-width="1"/><line x1="656.5" y1="244.0" x2="656.5" y2="265.0" stroke="#2d5a1a"/><rect x="654.5" y="255.0" width="4" height="2.0" fill="#008a00" stroke="#2d5a1a" stroke-width="1"/><line x1="661.5" y1="247.0" x2="661.5" y2="266.0" stroke="#2d5a1a"/><rect x="659.5" y="254.3" width="4" height="1.8" fill="#008a00" stroke="#2d5a1a" stroke-width="1"/>
<path d="M10.5,186.9 C11.2,186.8 13.2,186.4 14.5,186.2 C15.8,185.9 17.2,185.7 18.5,185.4 C19.8,185.2 21.2,184.9 22.5,184.7 C23.8,184.4 25.2,184.3 26.5,183.7 C27.8,183.1 29.2,182.1 30.5,181.3 C31.8,180.5 33.2,179.7 34.5,178.8 C35.8,178.0 37.2,177.2 38.5,176.4 C39.8,175.6 41.2,174.7 42.5,174.0 C43.8,173.3 45.2,172.7 46.5,172.0 C47.8,171.4 49.2,170.7 50.5,170.1 C51.8,169.4 53.2,168.8 54.5,168.1 C55.8,167.5 57.2,166.6 58.5,166.1 C59.8,165.7 61.2,165.5 62.5,165.2 C63.8,164.9 65.2,164.6 66.5,164.3 C67.8,164.0 69.2,163.7 70.5,163.4 C71.8,163.1 73.2,162.8 74.5,162.5 C75.8,162.2 77.2,161.8 78.5,161.7 C79.8,161.5 81.2,161.2 82.5,161.4 C83.8,161.7 85.2,162.6 86.5,163.2 C87.8,163.7 89.2,164.3 90.5,164.9 C91.8,165.5 93.2,166.0 94.5,166.6 C95.8,167.2 97.2,167.6 98.5,168.4 C99.8,169.1 101.2,170.1 102.5,171.1 C103.8,172.2 105.2,173.4 106.5,174.5 C107.8,175.7 109.2,176.8 110.5,177.9 C111.8,179.1 113.2,180.2 114.5,181.3 C115.8,182.5 117.2,183.6 118.5,184.7 C119.8,185.8 121.2,186.9 122.5,188.0 C123.8,189.0 125.2,190.1 126.5,191.1 C127.8,192.2 129.2,193.2 130.5,194.3 C131.8,195.3 133.2,196.4 134.5,197.4 C135.8,198.5 137.2,199.6 138.5,200.6 C139.8,201.6 141.2,202.6 142.5,203.5 C143.8,204.3 145.2,204.9 146.5,205.5 C147.8,206.2 149.2,206.9 150.5,207.6 C151.8,208.3 153.2,209.0 154.5,209.7 C155.8,210.4 157.2,211.2 158.5,211.8 C159.8,212.4 161.2,212.9 162.5,213.4 C163.8,213.9 165.2,214.4 166.5,214.9 C167.8,215.4 169.2,215.9 170.5,216.5 C171.8,217.0 173.2,217.5 174.5,218.0 C175.8,218.5 177.2,219.0 178.5,219.5 C179.8,220.1 181.2,220.4 182.5,221.1 C183.8,221.7 185.2,222.4 186.5,223.4 C187.8,224.4 189.2,225.8 190.5,227.0 C191.8,228.2 193.2,229.4 194.5,230.6 C195.8,231.7 197.2,232.6 198.5,233.6 C199.8,234.7 201.2,235.7 202.5,236.7 C203.8,237.7 205.2,238.7 206.5,239.7 C207.8,240.7 209.2,241.7 210.5,242.7 C211.8,243.7 213.2,244.7 214.5,245.7 C215.8,246.7 217.2,247.6 218.5,248.7 C219.8,249.9 221.2,251.4 222.5,252.9 C223.8,254.3 225.2,255.9 226.5,257.4 C227.8,258.9 229.2,260.4 230.5,261.8 C231.8,263.3 233.2,264.8 234.5,266.3 C235.8,267.8 237.2,269.3 238.5,270.8 C239.8,272.3 241.2,274.0 242.5,275.3 C243.8,276.6 245.2,277.7 246.5,278.8 C247.8,279.8 249.2,280.7 250.5,281.6 C251.8,282.6 253.2,283.5 254.5,284.5 C255.8,285.5 257.2,286.4 258.5,287.4 C259.8,288.3 261.2,289.3 262.5,290.2 C263.8,291.2 265.2,292.2 266.5,293.1 C267.8,293.9 269.2,294.6 270.5,295.4 C271.8,296.1 273.2,296.9 274.5,297.7 C275.8,298.5 277.2,299.2 278.5,300.0 C279.8,300.8 281.2,301.6 282.5,302.3 C283.8,303.1 285.2,303.9 286.5,304.7 C287.8,305.4 289.2,306.2 290.5,307.0 C291.8,307.7 293.2,308.6 294.5,309.1 C295.8,309.6 297.2,309.7 298.5,310.0 C299.8,310.3 301.2,310.6 302.5,310.9 C303.8,311.2 305.2,311.5 306.5,311.8 C307.8,312.1 309.2,312.4 310.5,312.7 C311.8,313.0 313.2,313.3 314.5,313.6 C315.8,313.9 317.2,314.2 318.5,314.5 C319.8,314.8 321.2,315.1 322.5,315.4 C323.8,315.7 325.2,316.0 326.5,316.3 C327.8,316.5 329.2,316.7 330.5,317.0 C331.8,317.2 333.2,317.5 334.5,317.7 C335.8,317.9 337.2,318.2 338.5,318.4 C339.8,318.6 341.2,318.9 342.5,319.1 C343.8,319.3 345.2,319.6 346.5,319.8 C347.8,320.1 349.2,320.3 350.5,320.5 C351.8,320.7 353.2,320.9 354.5,321.1 C355.8,321.3 357.2,321.4 358.5,321.6 C359.8,321.8 361.2,321.9 362.5,322.1 C363.8,322.2 365.2,322.4 366.5,322.6 C367.8,322.7 369.2,323.0 370.5,322.9 C371.8,322.9 373.2,322.5 374.5,322.4 C375.8,322.2 377.2,322.0 378.5,321.8 C379.8,321.6 381.2,321.4 382.5,321.2 C383.8,321.0 385.2,320.8 386.5,320.6 C387.8,320.4 389.2,320.2 390.5,320.0 C391.8,319.8 393.2,319.7 394.5,319.5 C395.8,319.3 397.2,319.1 398.5,318.9 C399.8,318.7 401.2,318.5 402.5,318.3 C403.8,318.1 405.2,317.9 406.5,317.7 C407.8,317.5 409.2,317.3 410.5,317.1 C411.8,317.0 413.2,316.7 414.5,316.6 C415.8,316.5 417.2,316.5 418.5,316.4 C419.8,316.4 421.2,316.4 422.5,316.4 C423.8,316.3 425.2,316.3 426.5,316.3 C427.8,316.3 429.2,316.2 430.5,316.2 C431.8,316.2 433.2,316.2 434.5,316.2 C435.8,316.1 437.2,316.1 438.5,316.1 C439.8,316.1 441.2,316.0 442.5,316.0 C443.8,316.0 445.2,316.0 446.5,316.1 C447.8,316.1 449.2,316.1 450.5,316.2 C451.8,316.2 453.2,316.2 454.5,316.2 C455.8,316.3 457.2,316.3 458.5,316.3 C459.8,316.3 461.2,316.4 462.5,316.4 C463.8,316.4 465.2,316.5 466.5,316.5 C467.8,316.5 469.2,316.5 470.5,316.6 C471.8,316.6 473.2,316.6 474.5,316.6 C475.8,316.7 477.2,316.7 478.5,316.7 C479.8,316.8 481.2,316.8 482.5,316.8 C483.8,316.8 485.2,316.9 486.5,316.9 C487.8,316.9 489.2,316.9 490.5,317.0 C491.8,317.0 493.2,317.1 494.5,317.2 C495.8,317.2 497.2,317.3 498.5,317.4 C499.8,317.5 501.2,317.6 502.5,317.7 C503.8,317.7 505.2,317.7 506.5,317.9 C507.8,318.1 509.2,318.4 510.5,318.6 C511.8,318.9 513.2,319.3 514.5,319.7 C515.8,320.0 517.2,320.4 518.5,320.7 C519.8,321.1 521.2,321.4 522.5,321.8 C523.8,322.1 525.2,322.5 526.5,322.8 C527.8,323.1 529.2,323.5 530.5,323.8 C531.8,324.2 533.2,324.4 534.5,324.9 C535.8,325.4 537.2,326.1 538.5,326.8 C539.8,327.5 541.2,328.2 542.5,328.9 C543.8,329.6 545.2,330.3 546.5,331.0 C547.8,331.7 549.2,332.4 550.5,333.1 C551.8,333.8 553.2,334.4 554.5,335.1 C555.8,335.8 557.2,336.5 558.5,337.2 C559.8,337.9 561.2,338.7 562.5,339.5 C563.8,340.3 565.2,341.1 566.5,341.9 C567.8,342.7 569.2,343.5 570.5,344.3 C571.8,345.1 573.2,345.9 574.5,346.7 C575.8,347.5 577.2,348.3 578.5,349.1 C579.8,349.9 581.2,350.7 582.5,351.5 C583.8,352.3 585.2,353.1 586.5,353.9 C587.8,354.7 589.2,355.5 590.5,356.3 C591.8,357.1 593.2,357.9 594.5,358.7 C595.8,359.5 597.2,360.7 598.5,361.1 C599.8,361.5 601.2,361.5 602.5,361.3 C603.8,361.2 605.2,360.6 606.5,360.3 C607.8,359.9 609.2,359.6 610.5,359.2 C611.8,358.8 613.2,358.8 614.5,358.1 C615.8,357.4 617.2,356.1 618.5,355.0 C619.8,353.9 621.2,352.7 622.5,351.5 C623.8,350.3 625.2,349.2 626.5,348.0 C627.8,346.9 629.2,345.7 630.5,344.6 C631.8,343.5 633.2,342.5 634.5,341.4 C635.8,340.3 637.2,339.3 638.5,338.2 C639.8,337.1 641.2,336.1 642.5,335.0 C643.8,333.9 645.2,332.9 646.5,331.9 C647.8,330.9 649.2,329.9 650.5,328.9 C651.8,327.9 653.2,326.9 654.5,325.9 C655.8,324.9 657.2,323.7 658.5,322.9 C659.8,322.1 661.8,321.3 662.5,321.0" fill="none" stroke="#ff0000" stroke-width="1" shape-rendering="crispEdges"/><path d="M10.5,189.7 C11.2,189.6 13.2,189.2 14.5,188.9 C15.8,188.7 17.2,188.4 18.5,188.2 C19.8,187.9 21.2,187.7 22.5,187.4 C23.8,187.1 25.2,186.9 26.5,186.4 C27.8,185.9 29.2,185.0 30.5,184.3 C31.8,183.6 33.2,182.9 34.5,182.2 C35.8,181.5 37.2,180.8 38.5,180.1 C39.8,179.4 41.2,178.6 42.5,177.9 C43.8,177.3 45.2,176.7 46.5,176.1 C47.8,175.5 49.2,174.9 50.5,174.3 C51.8,173.7 53.2,173.1 54.5,172.5 C55.8,171.9 57.2,171.1 58.5,170.6 C59.8,170.2 61.2,170.0 62.5,169.7 C63.8,169.4 65.2,169.1 66.5,168.8 C67.8,168.5 69.2,168.2 70.5,167.9 C71.8,167.6 73.2,167.3 74.5,166.9 C75.8,166.6 77.2,166.2 78.5,166.0 C79.8,165.8 81.2,165.5 82.5,165.8 C83.8,166.0 85.2,166.8 86.5,167.3 C87.8,167.9 89.2,168.4 90.5,168.9 C91.8,169.4 93.2,170.0 94.5,170.5 C95.8,171.0 97.2,171.4 98.5,172.1 C99.8,172.8 101.2,173.6 102.5,174.6 C103.8,175.5 105.2,176.6 106.5,177.6 C107.8,178.6 109.2,179.6 110.5,180.6 C111.8,181.6 113.2,182.7 114.5,183.7 C115.8,184.7 117.2,185.7 118.5,186.7 C119.8,187.7 121.2,188.6 122.5,189.6 C123.8,190.6 125.2,191.5 126.5,192.4 C127.8,193.4 129.2,194.3 130.5,195.3 C131.8,196.4 133.2,197.5 134.5,198.7 C135.8,199.8 137.2,200.9 138.5,202.0 C139.8,203.1 141.2,204.2 142.5,205.2 C143.8,206.1 145.2,206.8 146.5,207.7 C147.8,208.5 149.2,209.3 150.5,210.1 C151.8,211.0 153.2,211.8 154.5,212.6 C155.8,213.4 157.2,214.4 158.5,215.1 C159.8,215.8 161.2,216.2 162.5,216.7 C163.8,217.3 165.2,217.8 166.5,218.3 C167.8,218.8 169.2,219.3 170.5,219.9 C171.8,220.4 173.2,220.9 174.5,221.4 C175.8,222.0 177.2,222.5 178.5,223.0 C179.8,223.5 181.2,223.9 182.5,224.6 C183.8,225.2 185.2,226.0 186.5,227.0 C187.8,228.1 189.2,229.6 190.5,230.9 C191.8,232.1 193.2,233.5 194.5,234.7 C195.8,235.9 197.2,236.9 198.5,238.0 C199.8,239.0 201.2,240.1 202.5,241.1 C203.8,242.2 205.2,243.3 206.5,244.3 C207.8,245.4 209.2,246.5 210.5,247.5 C211.8,248.6 213.2,249.7 214.5,250.7 C215.8,251.8 217.2,252.6 218.5,253.9 C219.8,255.2 221.2,256.9 222.5,258.5 C223.8,260.1 225.2,261.8 226.5,263.5 C227.8,265.1 229.2,266.8 230.5,268.4 C231.8,270.1 233.2,271.7 234.5,273.4 C235.8,275.0 237.2,276.7 238.5,278.3 C239.8,280.0 241.2,281.8 242.5,283.3 C243.8,284.8 245.2,286.0 246.5,287.1 C247.8,288.3 249.2,289.2 250.5,290.2 C251.8,291.3 253.2,292.3 254.5,293.4 C255.8,294.4 257.2,295.4 258.5,296.5 C259.8,297.5 261.2,298.6 262.5,299.6 C263.8,300.6 265.2,301.8 266.5,302.7 C267.8,303.7 269.2,304.6 270.5,305.4 C271.8,306.2 273.2,307.0 274.5,307.7 C275.8,308.5 277.2,309.3 278.5,310.0 C279.8,310.8 281.2,311.6 282.5,312.3 C283.8,313.1 285.2,313.9 286.5,314.6 C287.8,315.4 289.2,316.0 290.5,316.7 C291.8,317.4 293.2,318.2 294.5,318.7 C295.8,319.2 297.2,319.3 298.5,319.6 C299.8,319.9 301.2,320.1 302.5,320.3 C303.8,320.6 305.2,320.8 306.5,321.0 C307.8,321.3 309.2,321.5 310.5,321.7 C311.8,322.0 313.2,322.2 314.5,322.4 C315.8,322.7 317.2,322.9 318.5,323.2 C319.8,323.4 321.2,323.7 322.5,323.9 C323.8,324.1 325.2,324.3 326.5,324.4 C327.8,324.5 329.2,324.5 330.5,324.5 C331.8,324.6 333.2,324.6 334.5,324.6 C335.8,324.7 337.2,324.7 338.5,324.8 C339.8,324.8 341.2,324.9 342.5,324.9 C343.8,324.9 345.2,325.0 346.5,325.0 C347.8,325.1 349.2,325.2 350.5,325.3 C351.8,325.5 353.2,325.6 354.5,325.7 C355.8,325.8 357.2,325.8 358.5,325.9 C359.8,326.0 361.2,326.1 362.5,326.2 C363.8,326.3 365.2,326.4 366.5,326.4 C367.8,326.5 369.2,326.7 370.5,326.6 C371.8,326.5 373.2,326.2 374.5,326.0 C375.8,325.8 377.2,325.6 378.5,325.4 C379.8,325.2 381.2,325.0 382.5,324.8 C383.8,324.6 385.2,324.4 386.5,324.3 C387.8,324.1 389.2,323.9 390.5,323.7 C391.8,323.5 393.2,323.3 394.5,323.1 C395.8,322.9 397.2,322.7 398.5,322.5 C399.8,322.3 401.2,322.1 402.5,321.9 C403.8,321.7 405.2,321.5 406.5,321.3 C407.8,321.1 409.2,320.9 410.5,320.7 C411.8,320.5 413.2,320.3 414.5,320.2 C415.8,320.0 417.2,319.8 418.5,319.7 C419.8,319.5 421.2,319.4 422.5,319.3 C423.8,319.1 425.2,319.0 426.5,318.8 C427.8,318.7 429.2,318.5 430.5,318.4 C431.8,318.2 433.2,318.1 434.5,317.9 C435.8,317.8 437.2,317.6 438.5,317.5 C439.8,317.3 441.2,317.1 442.5,317.1 C443.8,317.0 445.2,317.0 446.5,317.1 C447.8,317.1 449.2,317.1 450.5,317.1 C451.8,317.2 453.2,317.2 454.5,317.2 C455.8,317.2 457.2,317.2 458.5,317.3 C459.8,317.3 461.2,317.3 462.5,317.3 C463.8,317.4 465.2,317.4 466.5,317.4 C467.8,317.4 469.2,317.4 470.5,317.5 C471.8,317.5 473.2,317.5 474.5,317.5 C475.8,317.6 477.2,317.6 478.5,317.6 C479.8,317.6 481.2,317.6 482.5,317.7 C483.8,317.7 485.2,317.7 486.5,317.7 C487.8,317.8 489.2,317.7 490.5,317.8 C491.8,317.9 493.2,318.0 494.5,318.2 C495.8,318.3 497.2,318.5 498.5,318.7 C499.8,318.9 501.2,319.1 502.5,319.3 C503.8,319.4 505.2,319.5 506.5,319.8 C507.8,320.1 509.2,320.4 510.5,320.8 C511.8,321.2 513.2,321.7 514.5,322.1 C515.8,322.5 517.2,322.9 518.5,323.4 C519.8,323.8 521.2,324.2 522.5,324.7 C523.8,325.1 525.2,325.5 526.5,325.9 C527.8,326.4 529.2,326.8 530.5,327.2 C531.8,327.7 533.2,327.9 534.5,328.5 C535.8,329.1 537.2,330.0 538.5,330.7 C539.8,331.5 541.2,332.3 542.5,333.1 C543.8,333.8 545.2,334.6 546.5,335.4 C547.8,336.2 549.2,337.0 550.5,337.8 C551.8,338.5 553.2,339.3 554.5,340.1 C555.8,340.9 557.2,341.7 558.5,342.5 C559.8,343.2 561.2,344.0 562.5,344.8 C563.8,345.5 565.2,346.3 566.5,347.1 C567.8,347.8 569.2,348.6 570.5,349.4 C571.8,350.1 573.2,350.9 574.5,351.7 C575.8,352.4 577.2,353.2 578.5,354.0 C579.8,354.7 581.2,355.5 582.5,356.3 C583.8,357.0 585.2,357.8 586.5,358.6 C587.8,359.3 589.2,360.1 590.5,360.9 C591.8,361.6 593.2,362.4 594.5,363.2 C595.8,363.9 597.2,365.1 598.5,365.5 C599.8,365.9 601.2,365.8 602.5,365.7 C603.8,365.5 605.2,365.0 606.5,364.6 C607.8,364.2 609.2,363.9 610.5,363.5 C611.8,363.2 613.2,363.2 614.5,362.5 C615.8,361.7 617.2,360.3 618.5,359.2 C619.8,358.0 621.2,356.8 622.5,355.6 C623.8,354.4 625.2,353.2 626.5,352.0 C627.8,350.8 629.2,349.6 630.5,348.4 C631.8,347.3 633.2,346.2 634.5,345.0 C635.8,343.9 637.2,342.8 638.5,341.7 C639.8,340.5 641.2,339.4 642.5,338.3 C643.8,337.2 645.2,336.1 646.5,335.0 C647.8,333.9 649.2,332.9 650.5,331.8 C651.8,330.8 653.2,329.7 654.5,328.6 C655.8,327.6 657.2,326.3 658.5,325.5 C659.8,324.6 661.8,323.8 662.5,323.5" fill="none" stroke="#ff0000" stroke-width="1" shape-rendering="crispEdges"/><path d="M10.5,192.6 C11.2,192.4 13.2,192.0 14.5,191.7 C15.8,191.5 17.2,191.2 18.5,190.9 C19.8,190.6 21.2,190.4 22.5,190.1 C23.8,189.8 25.2,189.6 26.5,189.1 C27.8,188.6 29.2,187.9 30.5,187.3 C31.8,186.7 33.2,186.1 34.5,185.5 C35.8,184.9 37.2,184.3 38.5,183.7 C39.8,183.1 41.2,182.5 42.5,181.9 C43.8,181.3 45.2,180.8 46.5,180.2 C47.8,179.6 49.2,179.1 50.5,178.5 C51.8,177.9 53.2,177.4 54.5,176.8 C55.8,176.3 57.2,175.6 58.5,175.1 C59.8,174.7 61.2,174.5 62.5,174.1 C63.8,173.8 65.2,173.5 66.5,173.2 C67.8,172.9 69.2,172.6 70.5,172.3 C71.8,172.0 73.2,171.7 74.5,171.4 C75.8,171.0 77.2,170.6 78.5,170.4 C79.8,170.2 81.2,169.9 82.5,170.1 C83.8,170.3 85.2,171.0 86.5,171.5 C87.8,172.0 89.2,172.5 90.5,172.9 C91.8,173.4 93.2,173.9 94.5,174.4 C95.8,174.8 97.2,175.2 98.5,175.8 C99.8,176.4 101.2,177.2 102.5,178.0 C103.8,178.8 105.2,179.8 106.5,180.7 C107.8,181.6 109.2,182.4 110.5,183.3 C111.8,184.2 113.2,185.1 114.5,186.0 C115.8,186.9 117.2,187.8 118.5,188.7 C119.8,189.5 121.2,190.4 122.5,191.2 C123.8,192.1 125.2,192.9 126.5,193.7 C127.8,194.6 129.2,195.3 130.5,196.4 C131.8,197.4 133.2,198.7 134.5,199.9 C135.8,201.1 137.2,202.3 138.5,203.5 C139.8,204.6 141.2,205.8 142.5,206.9 C143.8,207.9 145.2,208.8 146.5,209.8 C147.8,210.7 149.2,211.7 150.5,212.6 C151.8,213.6 153.2,214.5 154.5,215.5 C155.8,216.5 157.2,217.6 158.5,218.4 C159.8,219.1 161.2,219.5 162.5,220.1 C163.8,220.6 165.2,221.2 166.5,221.7 C167.8,222.2 169.2,222.7 170.5,223.3 C171.8,223.8 173.2,224.3 174.5,224.9 C175.8,225.4 177.2,225.9 178.5,226.5 C179.8,227.0 181.2,227.3 182.5,228.0 C183.8,228.7 185.2,229.5 186.5,230.6 C187.8,231.8 189.2,233.4 190.5,234.7 C191.8,236.1 193.2,237.6 194.5,238.8 C195.8,240.1 197.2,241.1 198.5,242.3 C199.8,243.4 201.2,244.5 202.5,245.6 C203.8,246.7 205.2,247.9 206.5,249.0 C207.8,250.1 209.2,251.2 210.5,252.3 C211.8,253.5 213.2,254.6 214.5,255.7 C215.8,256.8 217.2,257.7 218.5,259.1 C219.8,260.5 221.2,262.4 222.5,264.2 C223.8,265.9 225.2,267.8 226.5,269.6 C227.8,271.4 229.2,273.2 230.5,275.0 C231.8,276.8 233.2,278.6 234.5,280.4 C235.8,282.3 237.2,284.1 238.5,285.9 C239.8,287.7 241.2,289.7 242.5,291.3 C243.8,292.9 245.2,294.2 246.5,295.5 C247.8,296.7 249.2,297.7 250.5,298.8 C251.8,300.0 253.2,301.1 254.5,302.2 C255.8,303.4 257.2,304.5 258.5,305.6 C259.8,306.7 261.2,307.9 262.5,309.0 C263.8,310.1 265.2,311.3 266.5,312.4 C267.8,313.4 269.2,314.5 270.5,315.4 C271.8,316.3 273.2,317.0 274.5,317.8 C275.8,318.5 277.2,319.3 278.5,320.1 C279.8,320.8 281.2,321.6 282.5,322.4 C283.8,323.1 285.2,323.9 286.5,324.6 C287.8,325.3 289.2,325.9 290.5,326.5 C291.8,327.1 293.2,327.8 294.5,328.2 C295.8,328.7 297.2,328.9 298.5,329.2 C299.8,329.4 301.2,329.6 302.5,329.7 C303.8,329.9 305.2,330.1 306.5,330.2 C307.8,330.4 309.2,330.6 310.5,330.8 C311.8,330.9 313.2,331.1 314.5,331.3 C315.8,331.4 317.2,331.6 318.5,331.8 C319.8,332.0 321.2,332.2 322.5,332.3 C323.8,332.4 325.2,332.5 326.5,332.5 C327.8,332.4 329.2,332.2 330.5,332.0 C331.8,331.9 333.2,331.7 334.5,331.6 C335.8,331.4 337.2,331.3 338.5,331.1 C339.8,331.0 341.2,330.8 342.5,330.7 C343.8,330.5 345.2,330.3 346.5,330.2 C347.8,330.1 349.2,330.2 350.5,330.2 C351.8,330.2 353.2,330.2 354.5,330.2 C355.8,330.3 357.2,330.3 358.5,330.3 C359.8,330.3 361.2,330.3 362.5,330.3 C363.8,330.3 365.2,330.3 366.5,330.3 C367.8,330.3 369.2,330.4 370.5,330.3 C371.8,330.2 373.2,329.9 374.5,329.7 C375.8,329.5 377.2,329.3 378.5,329.1 C379.8,328.9 381.2,328.7 382.5,328.5 C383.8,328.3 385.2,328.1 386.5,327.9 C387.8,327.7 389.2,327.5 390.5,327.3 C391.8,327.1 393.2,326.9 394.5,326.7 C395.8,326.5 397.2,326.3 398.5,326.1 C399.8,325.9 401.2,325.7 402.5,325.5 C403.8,325.3 405.2,325.1 406.5,324.9 C407.8,324.7 409.2,324.5 410.5,324.3 C411.8,324.1 413.2,324.0 414.5,323.7 C415.8,323.5 417.2,323.2 418.5,323.0 C419.8,322.7 421.2,322.4 422.5,322.1 C423.8,321.9 425.2,321.6 426.5,321.3 C427.8,321.1 429.2,320.8 430.5,320.5 C431.8,320.3 433.2,320.0 434.5,319.7 C435.8,319.5 437.2,319.2 438.5,318.9 C439.8,318.6 441.2,318.2 442.5,318.1 C443.8,318.0 445.2,318.0 446.5,318.0 C447.8,318.0 449.2,318.1 450.5,318.1 C451.8,318.1 453.2,318.1 454.5,318.2 C455.8,318.2 457.2,318.2 458.5,318.2 C459.8,318.2 461.2,318.2 462.5,318.3 C463.8,318.3 465.2,318.3 466.5,318.3 C467.8,318.3 469.2,318.4 470.5,318.4 C471.8,318.4 473.2,318.4 474.5,318.4 C475.8,318.4 477.2,318.5 478.5,318.5 C479.8,318.5 481.2,318.5 482.5,318.5 C483.8,318.6 485.2,318.6 486.5,318.6 C487.8,318.6 489.2,318.5 490.5,318.6 C491.8,318.7 493.2,319.0 494.5,319.2 C495.8,319.4 497.2,319.7 498.5,320.0 C499.8,320.3 501.2,320.6 502.5,320.9 C503.8,321.1 505.2,321.3 506.5,321.7 C507.8,322.0 509.2,322.5 510.5,323.0 C511.8,323.4 513.2,324.0 514.5,324.5 C515.8,325.0 517.2,325.5 518.5,326.0 C519.8,326.5 521.2,327.0 522.5,327.5 C523.8,328.1 525.2,328.6 526.5,329.1 C527.8,329.6 529.2,330.1 530.5,330.6 C531.8,331.1 533.2,331.5 534.5,332.1 C535.8,332.8 537.2,333.8 538.5,334.6 C539.8,335.5 541.2,336.4 542.5,337.2 C543.8,338.1 545.2,339.0 546.5,339.8 C547.8,340.7 549.2,341.6 550.5,342.5 C551.8,343.3 553.2,344.2 554.5,345.1 C555.8,345.9 557.2,346.9 558.5,347.7 C559.8,348.5 561.2,349.3 562.5,350.0 C563.8,350.8 565.2,351.5 566.5,352.2 C567.8,353.0 569.2,353.7 570.5,354.4 C571.8,355.2 573.2,355.9 574.5,356.6 C575.8,357.4 577.2,358.1 578.5,358.8 C579.8,359.6 581.2,360.3 582.5,361.0 C583.8,361.8 585.2,362.5 586.5,363.2 C587.8,364.0 589.2,364.7 590.5,365.4 C591.8,366.2 593.2,366.9 594.5,367.6 C595.8,368.4 597.2,369.4 598.5,369.8 C599.8,370.2 601.2,370.2 602.5,370.0 C603.8,369.8 605.2,369.3 606.5,368.9 C607.8,368.6 609.2,368.2 610.5,367.9 C611.8,367.5 613.2,367.5 614.5,366.8 C615.8,366.1 617.2,364.6 618.5,363.4 C619.8,362.2 621.2,360.9 622.5,359.7 C623.8,358.4 625.2,357.2 626.5,355.9 C627.8,354.7 629.2,353.4 630.5,352.2 C631.8,351.0 633.2,349.9 634.5,348.7 C635.8,347.5 637.2,346.3 638.5,345.1 C639.8,343.9 641.2,342.7 642.5,341.6 C643.8,340.4 645.2,339.2 646.5,338.1 C647.8,336.9 649.2,335.9 650.5,334.8 C651.8,333.6 653.2,332.5 654.5,331.4 C655.8,330.3 657.2,329.0 658.5,328.1 C659.8,327.2 661.8,326.3 662.5,326.0" fill="none" stroke="#ff0000" stroke-width="1" shape-rendering="crispEdges"/><path d="M10.5,195.4 C11.2,195.2 13.2,194.8 14.5,194.5 C15.8,194.2 17.2,193.9 18.5,193.6 C19.8,193.3 21.2,193.1 22.5,192.8 C23.8,192.5 25.2,192.2 26.5,191.8 C27.8,191.4 29.2,190.8 30.5,190.3 C31.8,189.8 33.2,189.3 34.5,188.8 C35.8,188.3 37.2,187.8 38.5,187.3 C39.8,186.8 41.2,186.4 42.5,185.8 C43.8,185.3 45.2,184.8 46.5,184.3 C47.8,183.8 49.2,183.3 50.5,182.7 C51.8,182.2 53.2,181.7 54.5,181.2 C55.8,180.7 57.2,180.0 58.5,179.6 C59.8,179.2 61.2,178.9 62.5,178.6 C63.8,178.3 65.2,178.0 66.5,177.7 C67.8,177.4 69.2,177.0 70.5,176.7 C71.8,176.4 73.2,176.1 74.5,175.8 C75.8,175.4 77.2,175.0 78.5,174.8 C79.8,174.6 81.2,174.3 82.5,174.4 C83.8,174.6 85.2,175.3 86.5,175.7 C87.8,176.1 89.2,176.5 90.5,177.0 C91.8,177.4 93.2,177.8 94.5,178.2 C95.8,178.7 97.2,179.0 98.5,179.5 C99.8,180.1 101.2,180.7 102.5,181.4 C103.8,182.1 105.2,183.0 106.5,183.7 C107.8,184.5 109.2,185.3 110.5,186.0 C111.8,186.8 113.2,187.6 114.5,188.3 C115.8,189.1 117.2,189.9 118.5,190.6 C119.8,191.4 121.2,192.1 122.5,192.9 C123.8,193.6 125.2,194.3 126.5,195.0 C127.8,195.8 129.2,196.4 130.5,197.4 C131.8,198.4 133.2,199.9 134.5,201.2 C135.8,202.4 137.2,203.7 138.5,204.9 C139.8,206.2 141.2,207.4 142.5,208.6 C143.8,209.7 145.2,210.8 146.5,211.9 C147.8,212.9 149.2,214.0 150.5,215.1 C151.8,216.2 153.2,217.3 154.5,218.4 C155.8,219.5 157.2,220.8 158.5,221.7 C159.8,222.5 161.2,222.9 162.5,223.5 C163.8,224.0 165.2,224.5 166.5,225.1 C167.8,225.6 169.2,226.1 170.5,226.7 C171.8,227.2 173.2,227.8 174.5,228.3 C175.8,228.8 177.2,229.4 178.5,229.9 C179.8,230.5 181.2,230.8 182.5,231.5 C183.8,232.3 185.2,233.1 186.5,234.2 C187.8,235.4 189.2,237.1 190.5,238.6 C191.8,240.1 193.2,241.6 194.5,243.0 C195.8,244.3 197.2,245.4 198.5,246.6 C199.8,247.8 201.2,248.9 202.5,250.1 C203.8,251.3 205.2,252.5 206.5,253.6 C207.8,254.8 209.2,256.0 210.5,257.2 C211.8,258.3 213.2,259.5 214.5,260.7 C215.8,261.9 217.2,262.7 218.5,264.2 C219.8,265.7 221.2,267.9 222.5,269.8 C223.8,271.7 225.2,273.7 226.5,275.7 C227.8,277.7 229.2,279.6 230.5,281.6 C231.8,283.6 233.2,285.5 234.5,287.5 C235.8,289.5 237.2,291.4 238.5,293.4 C239.8,295.4 241.2,297.6 242.5,299.3 C243.8,301.0 245.2,302.4 246.5,303.8 C247.8,305.1 249.2,306.2 250.5,307.4 C251.8,308.7 253.2,309.9 254.5,311.1 C255.8,312.3 257.2,313.5 258.5,314.7 C259.8,316.0 261.2,317.2 262.5,318.4 C263.8,319.6 265.2,320.9 266.5,322.0 C267.8,323.2 269.2,324.5 270.5,325.4 C271.8,326.4 273.2,327.0 274.5,327.8 C275.8,328.6 277.2,329.3 278.5,330.1 C279.8,330.8 281.2,331.6 282.5,332.4 C283.8,333.1 285.2,333.9 286.5,334.6 C287.8,335.2 289.2,335.7 290.5,336.2 C291.8,336.8 293.2,337.4 294.5,337.8 C295.8,338.2 297.2,338.5 298.5,338.8 C299.8,339.0 301.2,339.0 302.5,339.1 C303.8,339.2 305.2,339.3 306.5,339.4 C307.8,339.6 309.2,339.7 310.5,339.8 C311.8,339.9 313.2,340.0 314.5,340.1 C315.8,340.2 317.2,340.3 318.5,340.4 C319.8,340.5 321.2,340.7 322.5,340.8 C323.8,340.8 325.2,340.8 326.5,340.6 C327.8,340.4 329.2,339.9 330.5,339.6 C331.8,339.2 333.2,338.9 334.5,338.5 C335.8,338.2 337.2,337.8 338.5,337.5 C339.8,337.2 341.2,336.8 342.5,336.5 C343.8,336.1 345.2,335.7 346.5,335.4 C347.8,335.2 349.2,335.1 350.5,335.0 C351.8,334.9 353.2,334.9 354.5,334.8 C355.8,334.8 357.2,334.7 358.5,334.6 C359.8,334.5 361.2,334.5 362.5,334.4 C363.8,334.3 365.2,334.3 366.5,334.2 C367.8,334.1 369.2,334.1 370.5,333.9 C371.8,333.8 373.2,333.5 374.5,333.3 C375.8,333.1 377.2,332.9 378.5,332.7 C379.8,332.5 381.2,332.3 382.5,332.1 C383.8,331.9 385.2,331.7 386.5,331.5 C387.8,331.3 389.2,331.1 390.5,330.9 C391.8,330.7 393.2,330.5 394.5,330.3 C395.8,330.1 397.2,329.9 398.5,329.7 C399.8,329.5 401.2,329.3 402.5,329.1 C403.8,328.9 405.2,328.7 406.5,328.5 C407.8,328.3 409.2,328.1 410.5,327.9 C411.8,327.7 413.2,327.6 414.5,327.3 C415.8,327.0 417.2,326.6 418.5,326.2 C419.8,325.8 421.2,325.4 422.5,325.0 C423.8,324.6 425.2,324.3 426.5,323.9 C427.8,323.5 429.2,323.1 430.5,322.7 C431.8,322.3 433.2,321.9 434.5,321.5 C435.8,321.1 437.2,320.7 438.5,320.3 C439.8,319.9 441.2,319.4 442.5,319.1 C443.8,318.9 445.2,319.0 446.5,319.0 C447.8,319.0 449.2,319.1 450.5,319.1 C451.8,319.1 453.2,319.1 454.5,319.1 C455.8,319.1 457.2,319.1 458.5,319.2 C459.8,319.2 461.2,319.2 462.5,319.2 C463.8,319.2 465.2,319.2 466.5,319.2 C467.8,319.3 469.2,319.3 470.5,319.3 C471.8,319.3 473.2,319.3 474.5,319.3 C475.8,319.3 477.2,319.3 478.5,319.4 C479.8,319.4 481.2,319.4 482.5,319.4 C483.8,319.4 485.2,319.4 486.5,319.4 C487.8,319.5 489.2,319.4 490.5,319.5 C491.8,319.6 493.2,319.9 494.5,320.2 C495.8,320.5 497.2,321.0 498.5,321.3 C499.8,321.7 501.2,322.1 502.5,322.5 C503.8,322.8 505.2,323.1 506.5,323.6 C507.8,324.0 509.2,324.6 510.5,325.1 C511.8,325.7 513.2,326.3 514.5,326.9 C515.8,327.5 517.2,328.1 518.5,328.7 C519.8,329.3 521.2,329.9 522.5,330.4 C523.8,331.0 525.2,331.6 526.5,332.2 C527.8,332.8 529.2,333.4 530.5,334.0 C531.8,334.6 533.2,335.0 534.5,335.8 C535.8,336.5 537.2,337.6 538.5,338.5 C539.8,339.5 541.2,340.4 542.5,341.4 C543.8,342.4 545.2,343.3 546.5,344.3 C547.8,345.2 549.2,346.2 550.5,347.2 C551.8,348.1 553.2,349.1 554.5,350.0 C555.8,351.0 557.2,352.0 558.5,352.9 C559.8,353.8 561.2,354.6 562.5,355.3 C563.8,356.1 565.2,356.7 566.5,357.4 C567.8,358.1 569.2,358.8 570.5,359.5 C571.8,360.2 573.2,360.9 574.5,361.6 C575.8,362.3 577.2,363.0 578.5,363.7 C579.8,364.4 581.2,365.1 582.5,365.8 C583.8,366.5 585.2,367.2 586.5,367.9 C587.8,368.6 589.2,369.3 590.5,370.0 C591.8,370.7 593.2,371.4 594.5,372.1 C595.8,372.8 597.2,373.8 598.5,374.2 C599.8,374.6 601.2,374.5 602.5,374.3 C603.8,374.2 605.2,373.6 606.5,373.3 C607.8,372.9 609.2,372.6 610.5,372.2 C611.8,371.8 613.2,371.9 614.5,371.1 C615.8,370.4 617.2,368.8 618.5,367.6 C619.8,366.4 621.2,365.0 622.5,363.8 C623.8,362.5 625.2,361.2 626.5,359.9 C627.8,358.6 629.2,357.3 630.5,356.0 C631.8,354.8 633.2,353.5 634.5,352.3 C635.8,351.1 637.2,349.8 638.5,348.6 C639.8,347.3 641.2,346.1 642.5,344.8 C643.8,343.6 645.2,342.4 646.5,341.2 C647.8,340.0 649.2,338.9 650.5,337.7 C651.8,336.5 653.2,335.4 654.5,334.2 C655.8,333.0 657.2,331.6 658.5,330.7 C659.8,329.7 661.8,328.9 662.5,328.5" fill="none" stroke="#ff0000" stroke-width="1" shape-rendering="crispEdges"/><path d="M10.5,198.2 C11.2,198.1 13.2,197.6 14.5,197.3 C15.8,197.0 17.2,196.7 18.5,196.4 C19.8,196.1 21.2,195.8 22.5,195.5 C23.8,195.2 25.2,194.9 26.5,194.5 C27.8,194.2 29.2,193.7 30.5,193.3 C31.8,192.9 33.2,192.6 34.5,192.2 C35.8,191.8 37.2,191.4 38.5,191.0 C39.8,190.6 41.2,190.2 42.5,189.8 C43.8,189.4 45.2,188.9 46.5,188.4 C47.8,187.9 49.2,187.4 50.5,187.0 C51.8,186.5 53.2,186.0 54.5,185.5 C55.8,185.1 57.2,184.5 58.5,184.1 C59.8,183.7 61.2,183.4 62.5,183.1 C63.8,182.8 65.2,182.4 66.5,182.1 C67.8,181.8 69.2,181.5 70.5,181.1 C71.8,180.8 73.2,180.5 74.5,180.2 C75.8,179.8 77.2,179.4 78.5,179.2 C79.8,179.0 81.2,178.6 82.5,178.7 C83.8,178.9 85.2,179.5 86.5,179.9 C87.8,180.2 89.2,180.6 90.5,181.0 C91.8,181.4 93.2,181.7 94.5,182.1 C95.8,182.5 97.2,182.8 98.5,183.2 C99.8,183.7 101.2,184.3 102.5,184.9 C103.8,185.5 105.2,186.2 106.5,186.8 C107.8,187.5 109.2,188.1 110.5,188.7 C111.8,189.4 113.2,190.0 114.5,190.7 C115.8,191.3 117.2,192.0 118.5,192.6 C119.8,193.2 121.2,193.9 122.5,194.5 C123.8,195.1 125.2,195.7 126.5,196.3 C127.8,197.0 129.2,197.4 130.5,198.5 C131.8,199.5 133.2,201.1 134.5,202.4 C135.8,203.7 137.2,205.1 138.5,206.4 C139.8,207.7 141.2,209.0 142.5,210.3 C143.8,211.6 145.2,212.7 146.5,214.0 C147.8,215.2 149.2,216.4 150.5,217.6 C151.8,218.9 153.2,220.1 154.5,221.3 C155.8,222.5 157.2,224.0 158.5,225.0 C159.8,225.9 161.2,226.2 162.5,226.8 C163.8,227.4 165.2,227.9 166.5,228.5 C167.8,229.0 169.2,229.5 170.5,230.1 C171.8,230.6 173.2,231.2 174.5,231.7 C175.8,232.3 177.2,232.8 178.5,233.4 C179.8,233.9 181.2,234.3 182.5,235.0 C183.8,235.8 185.2,236.6 186.5,237.8 C187.8,239.1 189.2,240.9 190.5,242.5 C191.8,244.0 193.2,245.7 194.5,247.1 C195.8,248.5 197.2,249.6 198.5,250.9 C199.8,252.2 201.2,253.4 202.5,254.6 C203.8,255.8 205.2,257.1 206.5,258.3 C207.8,259.5 209.2,260.8 210.5,262.0 C211.8,263.2 213.2,264.5 214.5,265.7 C215.8,266.9 217.2,267.8 218.5,269.4 C219.8,271.0 221.2,273.4 222.5,275.5 C223.8,277.5 225.2,279.7 226.5,281.8 C227.8,283.9 229.2,286.1 230.5,288.2 C231.8,290.3 233.2,292.4 234.5,294.6 C235.8,296.7 237.2,298.8 238.5,300.9 C239.8,303.0 241.2,305.4 242.5,307.3 C243.8,309.1 245.2,310.7 246.5,312.1 C247.8,313.6 249.2,314.7 250.5,316.0 C251.8,317.3 253.2,318.6 254.5,320.0 C255.8,321.3 257.2,322.6 258.5,323.9 C259.8,325.2 261.2,326.5 262.5,327.8 C263.8,329.1 265.2,330.4 266.5,331.7 C267.8,333.0 269.2,334.4 270.5,335.4 C271.8,336.5 273.2,337.0 274.5,337.8 C275.8,338.6 277.2,339.3 278.5,340.1 C279.8,340.9 281.2,341.7 282.5,342.4 C283.8,343.1 285.2,343.9 286.5,344.5 C287.8,345.1 289.2,345.5 290.5,346.0 C291.8,346.5 293.2,347.0 294.5,347.4 C295.8,347.8 297.2,348.2 298.5,348.4 C299.8,348.5 301.2,348.5 302.5,348.5 C303.8,348.6 305.2,348.6 306.5,348.7 C307.8,348.7 309.2,348.7 310.5,348.8 C311.8,348.8 313.2,348.9 314.5,348.9 C315.8,348.9 317.2,349.0 318.5,349.1 C319.8,349.1 321.2,349.3 322.5,349.2 C323.8,349.2 325.2,349.1 326.5,348.7 C327.8,348.4 329.2,347.6 330.5,347.1 C331.8,346.6 333.2,346.0 334.5,345.5 C335.8,345.0 337.2,344.4 338.5,343.9 C339.8,343.3 341.2,342.8 342.5,342.3 C343.8,341.7 345.2,341.0 346.5,340.6 C347.8,340.2 349.2,340.0 350.5,339.8 C351.8,339.6 353.2,339.5 354.5,339.4 C355.8,339.2 357.2,339.1 358.5,338.9 C359.8,338.8 361.2,338.6 362.5,338.5 C363.8,338.3 365.2,338.2 366.5,338.1 C367.8,337.9 369.2,337.8 370.5,337.6 C371.8,337.4 373.2,337.2 374.5,337.0 C375.8,336.8 377.2,336.6 378.5,336.4 C379.8,336.2 381.2,336.0 382.5,335.8 C383.8,335.6 385.2,335.4 386.5,335.2 C387.8,335.0 389.2,334.8 390.5,334.6 C391.8,334.4 393.2,334.1 394.5,333.9 C395.8,333.7 397.2,333.5 398.5,333.3 C399.8,333.1 401.2,332.9 402.5,332.7 C403.8,332.5 405.2,332.3 406.5,332.1 C407.8,331.9 409.2,331.7 410.5,331.5 C411.8,331.3 413.2,331.2 414.5,330.9 C415.8,330.6 417.2,330.0 418.5,329.5 C419.8,329.0 421.2,328.4 422.5,327.9 C423.8,327.4 425.2,326.9 426.5,326.4 C427.8,325.9 429.2,325.4 430.5,324.8 C431.8,324.3 433.2,323.8 434.5,323.3 C435.8,322.8 437.2,322.3 438.5,321.7 C439.8,321.2 441.2,320.5 442.5,320.2 C443.8,319.9 445.2,320.0 446.5,320.0 C447.8,320.0 449.2,320.0 450.5,320.1 C451.8,320.1 453.2,320.1 454.5,320.1 C455.8,320.1 457.2,320.1 458.5,320.1 C459.8,320.1 461.2,320.1 462.5,320.1 C463.8,320.1 465.2,320.2 466.5,320.2 C467.8,320.2 469.2,320.2 470.5,320.2 C471.8,320.2 473.2,320.2 474.5,320.2 C475.8,320.2 477.2,320.2 478.5,320.2 C479.8,320.3 481.2,320.3 482.5,320.3 C483.8,320.3 485.2,320.3 486.5,320.3 C487.8,320.3 489.2,320.2 490.5,320.3 C491.8,320.5 493.2,320.8 494.5,321.2 C495.8,321.6 497.2,322.2 498.5,322.6 C499.8,323.1 501.2,323.6 502.5,324.1 C503.8,324.5 505.2,324.9 506.5,325.5 C507.8,326.0 509.2,326.6 510.5,327.3 C511.8,327.9 513.2,328.6 514.5,329.3 C515.8,330.0 517.2,330.6 518.5,331.3 C519.8,332.0 521.2,332.7 522.5,333.3 C523.8,334.0 525.2,334.7 526.5,335.4 C527.8,336.0 529.2,336.7 530.5,337.4 C531.8,338.1 533.2,338.6 534.5,339.4 C535.8,340.3 537.2,341.4 538.5,342.4 C539.8,343.4 541.2,344.5 542.5,345.6 C543.8,346.6 545.2,347.7 546.5,348.7 C547.8,349.8 549.2,350.8 550.5,351.9 C551.8,352.9 553.2,354.0 554.5,355.0 C555.8,356.1 557.2,357.2 558.5,358.2 C559.8,359.1 561.2,359.8 562.5,360.6 C563.8,361.3 565.2,361.9 566.5,362.6 C567.8,363.2 569.2,363.9 570.5,364.6 C571.8,365.3 573.2,365.9 574.5,366.6 C575.8,367.2 577.2,367.9 578.5,368.6 C579.8,369.2 581.2,369.9 582.5,370.6 C583.8,371.2 585.2,371.9 586.5,372.6 C587.8,373.2 589.2,373.9 590.5,374.6 C591.8,375.3 593.2,375.9 594.5,376.6 C595.8,377.2 597.2,378.2 598.5,378.6 C599.8,378.9 601.2,378.8 602.5,378.7 C603.8,378.5 605.2,378.0 606.5,377.6 C607.8,377.2 609.2,376.9 610.5,376.5 C611.8,376.2 613.2,376.2 614.5,375.5 C615.8,374.7 617.2,373.1 618.5,371.8 C619.8,370.6 621.2,369.2 622.5,367.8 C623.8,366.5 625.2,365.2 626.5,363.8 C627.8,362.5 629.2,361.2 630.5,359.8 C631.8,358.5 633.2,357.2 634.5,355.9 C635.8,354.6 637.2,353.3 638.5,352.0 C639.8,350.7 641.2,349.4 642.5,348.1 C643.8,346.8 645.2,345.5 646.5,344.3 C647.8,343.0 649.2,341.8 650.5,340.6 C651.8,339.4 653.2,338.2 654.5,337.0 C655.8,335.7 657.2,334.3 658.5,333.3 C659.8,332.3 661.8,331.4 662.5,331.0" fill="none" stroke="#ff0000" stroke-width="1" shape-rendering="crispEdges"/><path d="M10.5,201.0 C11.2,200.9 13.2,200.4 14.5,200.1 C15.8,199.8 17.2,199.4 18.5,199.1 C19.8,198.8 21.2,198.5 22.5,198.2 C23.8,197.9 25.2,197.5 26.5,197.2 C27.8,196.9 29.2,196.6 30.5,196.4 C31.8,196.1 33.2,195.8 34.5,195.5 C35.8,195.2 37.2,194.9 38.5,194.6 C39.8,194.3 41.2,194.1 42.5,193.8 C43.8,193.4 45.2,192.9 46.5,192.5 C47.8,192.0 49.2,191.6 50.5,191.2 C51.8,190.7 53.2,190.3 54.5,189.9 C55.8,189.5 57.2,189.0 58.5,188.6 C59.8,188.2 61.2,187.9 62.5,187.6 C63.8,187.2 65.2,186.9 66.5,186.6 C67.8,186.2 69.2,185.9 70.5,185.6 C71.8,185.2 73.2,184.9 74.5,184.6 C75.8,184.2 77.2,183.8 78.5,183.6 C79.8,183.3 81.2,183.0 82.5,183.1 C83.8,183.2 85.2,183.7 86.5,184.0 C87.8,184.4 89.2,184.7 90.5,185.0 C91.8,185.3 93.2,185.7 94.5,186.0 C95.8,186.3 97.2,186.6 98.5,187.0 C99.8,187.4 101.2,187.8 102.5,188.3 C103.8,188.8 105.2,189.4 106.5,189.9 C107.8,190.4 109.2,190.9 110.5,191.4 C111.8,192.0 113.2,192.5 114.5,193.0 C115.8,193.5 117.2,194.1 118.5,194.6 C119.8,195.1 121.2,195.6 122.5,196.1 C123.8,196.6 125.2,197.1 126.5,197.6 C127.8,198.2 129.2,198.5 130.5,199.5 C131.8,200.5 133.2,202.3 134.5,203.7 C135.8,205.1 137.2,206.5 138.5,207.8 C139.8,209.2 141.2,210.6 142.5,212.0 C143.8,213.4 145.2,214.7 146.5,216.1 C147.8,217.4 149.2,218.8 150.5,220.1 C151.8,221.5 153.2,222.8 154.5,224.2 C155.8,225.5 157.2,227.3 158.5,228.3 C159.8,229.3 161.2,229.6 162.5,230.2 C163.8,230.8 165.2,231.3 166.5,231.8 C167.8,232.4 169.2,232.9 170.5,233.5 C171.8,234.1 173.2,234.6 174.5,235.2 C175.8,235.7 177.2,236.3 178.5,236.8 C179.8,237.4 181.2,237.7 182.5,238.5 C183.8,239.3 185.2,240.1 186.5,241.5 C187.8,242.8 189.2,244.7 190.5,246.3 C191.8,248.0 193.2,249.7 194.5,251.2 C195.8,252.7 197.2,253.9 198.5,255.2 C199.8,256.5 201.2,257.8 202.5,259.1 C203.8,260.4 205.2,261.7 206.5,262.9 C207.8,264.2 209.2,265.5 210.5,266.8 C211.8,268.1 213.2,269.4 214.5,270.7 C215.8,272.0 217.2,272.8 218.5,274.5 C219.8,276.3 221.2,278.9 222.5,281.1 C223.8,283.3 225.2,285.7 226.5,287.9 C227.8,290.2 229.2,292.5 230.5,294.8 C231.8,297.0 233.2,299.3 234.5,301.6 C235.8,303.9 237.2,306.2 238.5,308.4 C239.8,310.7 241.2,313.3 242.5,315.3 C243.8,317.3 245.2,318.9 246.5,320.4 C247.8,322.0 249.2,323.2 250.5,324.6 C251.8,326.0 253.2,327.4 254.5,328.8 C255.8,330.2 257.2,331.6 258.5,333.0 C259.8,334.4 261.2,335.8 262.5,337.2 C263.8,338.6 265.2,340.0 266.5,341.4 C267.8,342.7 269.2,344.4 270.5,345.5 C271.8,346.5 273.2,347.1 274.5,347.8 C275.8,348.6 277.2,349.4 278.5,350.1 C279.8,350.9 281.2,351.7 282.5,352.4 C283.8,353.1 285.2,354.0 286.5,354.5 C287.8,355.1 289.2,355.3 290.5,355.7 C291.8,356.1 293.2,356.6 294.5,356.9 C295.8,357.3 297.2,357.8 298.5,357.9 C299.8,358.1 301.2,358.0 302.5,357.9 C303.8,357.9 305.2,357.9 306.5,357.9 C307.8,357.8 309.2,357.8 310.5,357.8 C311.8,357.8 313.2,357.7 314.5,357.7 C315.8,357.7 317.2,357.7 318.5,357.7 C319.8,357.7 321.2,357.8 322.5,357.7 C323.8,357.5 325.2,357.3 326.5,356.8 C327.8,356.3 329.2,355.4 330.5,354.6 C331.8,353.9 333.2,353.2 334.5,352.4 C335.8,351.7 337.2,351.0 338.5,350.2 C339.8,349.5 341.2,348.8 342.5,348.0 C343.8,347.3 345.2,346.4 346.5,345.8 C347.8,345.3 349.2,344.9 350.5,344.6 C351.8,344.3 353.2,344.2 354.5,344.0 C355.8,343.7 357.2,343.5 358.5,343.3 C359.8,343.1 361.2,342.8 362.5,342.6 C363.8,342.4 365.2,342.1 366.5,341.9 C367.8,341.7 369.2,341.5 370.5,341.3 C371.8,341.0 373.2,340.8 374.5,340.6 C375.8,340.4 377.2,340.2 378.5,340.0 C379.8,339.8 381.2,339.6 382.5,339.4 C383.8,339.2 385.2,339.0 386.5,338.8 C387.8,338.6 389.2,338.4 390.5,338.2 C391.8,338.0 393.2,337.8 394.5,337.6 C395.8,337.4 397.2,337.2 398.5,337.0 C399.8,336.7 401.2,336.5 402.5,336.3 C403.8,336.1 405.2,335.9 406.5,335.7 C407.8,335.5 409.2,335.3 410.5,335.1 C411.8,334.9 413.2,334.9 414.5,334.5 C415.8,334.1 417.2,333.4 418.5,332.7 C419.8,332.1 421.2,331.5 422.5,330.8 C423.8,330.2 425.2,329.5 426.5,328.9 C427.8,328.3 429.2,327.6 430.5,327.0 C431.8,326.4 433.2,325.7 434.5,325.1 C435.8,324.4 437.2,323.8 438.5,323.2 C439.8,322.5 441.2,321.6 442.5,321.2 C443.8,320.9 445.2,321.0 446.5,321.0 C447.8,321.0 449.2,321.0 450.5,321.0 C451.8,321.0 453.2,321.0 454.5,321.0 C455.8,321.0 457.2,321.0 458.5,321.1 C459.8,321.1 461.2,321.1 462.5,321.1 C463.8,321.1 465.2,321.1 466.5,321.1 C467.8,321.1 469.2,321.1 470.5,321.1 C471.8,321.1 473.2,321.1 474.5,321.1 C475.8,321.1 477.2,321.1 478.5,321.1 C479.8,321.1 481.2,321.1 482.5,321.1 C483.8,321.1 485.2,321.1 486.5,321.1 C487.8,321.2 489.2,321.0 490.5,321.2 C491.8,321.3 493.2,321.8 494.5,322.2 C495.8,322.7 497.2,323.4 498.5,323.9 C499.8,324.5 501.2,325.1 502.5,325.7 C503.8,326.2 505.2,326.7 506.5,327.4 C507.8,328.0 509.2,328.7 510.5,329.4 C511.8,330.1 513.2,330.9 514.5,331.7 C515.8,332.4 517.2,333.2 518.5,334.0 C519.8,334.7 521.2,335.5 522.5,336.2 C523.8,337.0 525.2,337.7 526.5,338.5 C527.8,339.3 529.2,340.0 530.5,340.8 C531.8,341.5 533.2,342.1 534.5,343.0 C535.8,344.0 537.2,345.2 538.5,346.3 C539.8,347.4 541.2,348.6 542.5,349.7 C543.8,350.9 545.2,352.0 546.5,353.1 C547.8,354.3 549.2,355.4 550.5,356.6 C551.8,357.7 553.2,358.8 554.5,360.0 C555.8,361.1 557.2,362.4 558.5,363.4 C559.8,364.4 561.2,365.1 562.5,365.9 C563.8,366.6 565.2,367.1 566.5,367.8 C567.8,368.4 569.2,369.0 570.5,369.7 C571.8,370.3 573.2,370.9 574.5,371.6 C575.8,372.2 577.2,372.8 578.5,373.5 C579.8,374.1 581.2,374.7 582.5,375.4 C583.8,376.0 585.2,376.6 586.5,377.3 C587.8,377.9 589.2,378.5 590.5,379.2 C591.8,379.8 593.2,380.4 594.5,381.1 C595.8,381.7 597.2,382.6 598.5,383.0 C599.8,383.3 601.2,383.2 602.5,383.0 C603.8,382.8 605.2,382.3 606.5,381.9 C607.8,381.6 609.2,381.2 610.5,380.9 C611.8,380.5 613.2,380.6 614.5,379.8 C615.8,379.0 617.2,377.4 618.5,376.0 C619.8,374.7 621.2,373.3 622.5,371.9 C623.8,370.5 625.2,369.2 626.5,367.8 C627.8,366.4 629.2,365.0 630.5,363.7 C631.8,362.3 633.2,360.9 634.5,359.6 C635.8,358.2 637.2,356.8 638.5,355.5 C639.8,354.1 641.2,352.7 642.5,351.4 C643.8,350.0 645.2,348.7 646.5,347.4 C647.8,346.1 649.2,344.8 650.5,343.6 C651.8,342.3 653.2,341.0 654.5,339.7 C655.8,338.5 657.2,336.9 658.5,335.9 C659.8,334.9 661.8,333.9 662.5,333.5" fill="none" stroke="#ff0000" stroke-width="1" shape-rendering="crispEdges"/><path d="M10.5,203.9 C11.2,203.7 13.2,203.2 14.5,202.9 C15.8,202.5 17.2,202.2 18.5,201.9 C19.8,201.5 21.2,201.2 22.5,200.9 C23.8,200.6 25.2,200.2 26.5,199.9 C27.8,199.7 29.2,199.6 30.5,199.4 C31.8,199.2 33.2,199.0 34.5,198.8 C35.8,198.6 37.2,198.4 38.5,198.3 C39.8,198.1 41.2,198.0 42.5,197.7 C43.8,197.4 45.2,196.9 46.5,196.5 C47.8,196.2 49.2,195.8 50.5,195.4 C51.8,195.0 53.2,194.6 54.5,194.2 C55.8,193.9 57.2,193.5 58.5,193.1 C59.8,192.7 61.2,192.4 62.5,192.1 C63.8,191.7 65.2,191.4 66.5,191.0 C67.8,190.7 69.2,190.4 70.5,190.0 C71.8,189.7 73.2,189.3 74.5,189.0 C75.8,188.6 77.2,188.2 78.5,188.0 C79.8,187.7 81.2,187.4 82.5,187.4 C83.8,187.4 85.2,188.0 86.5,188.2 C87.8,188.5 89.2,188.8 90.5,189.0 C91.8,189.3 93.2,189.6 94.5,189.9 C95.8,190.1 97.2,190.4 98.5,190.7 C99.8,191.0 101.2,191.4 102.5,191.8 C103.8,192.1 105.2,192.5 106.5,192.9 C107.8,193.3 109.2,193.8 110.5,194.2 C111.8,194.6 113.2,194.9 114.5,195.3 C115.8,195.8 117.2,196.2 118.5,196.6 C119.8,197.0 121.2,197.3 122.5,197.8 C123.8,198.2 125.2,198.5 126.5,198.9 C127.8,199.4 129.2,199.6 130.5,200.5 C131.8,201.5 133.2,203.5 134.5,204.9 C135.8,206.4 137.2,207.8 138.5,209.3 C139.8,210.8 141.2,212.2 142.5,213.7 C143.8,215.2 145.2,216.7 146.5,218.2 C147.8,219.7 149.2,221.1 150.5,222.6 C151.8,224.1 153.2,225.6 154.5,227.1 C155.8,228.6 157.2,230.5 158.5,231.6 C159.8,232.6 161.2,232.9 162.5,233.5 C163.8,234.1 165.2,234.7 166.5,235.2 C167.8,235.8 169.2,236.3 170.5,236.9 C171.8,237.5 173.2,238.0 174.5,238.6 C175.8,239.2 177.2,239.7 178.5,240.3 C179.8,240.9 181.2,241.2 182.5,242.0 C183.8,242.8 185.2,243.7 186.5,245.1 C187.8,246.4 189.2,248.5 190.5,250.2 C191.8,251.9 193.2,253.8 194.5,255.4 C195.8,256.9 197.2,258.2 198.5,259.5 C199.8,260.9 201.2,262.2 202.5,263.6 C203.8,264.9 205.2,266.3 206.5,267.6 C207.8,268.9 209.2,270.3 210.5,271.6 C211.8,273.0 213.2,274.3 214.5,275.7 C215.8,277.0 217.2,277.8 218.5,279.7 C219.8,281.5 221.2,284.4 222.5,286.8 C223.8,289.1 225.2,291.6 226.5,294.1 C227.8,296.5 229.2,298.9 230.5,301.4 C231.8,303.8 233.2,306.2 234.5,308.7 C235.8,311.1 237.2,313.5 238.5,316.0 C239.8,318.4 241.2,321.1 242.5,323.3 C243.8,325.4 245.2,327.1 246.5,328.8 C247.8,330.4 249.2,331.7 250.5,333.2 C251.8,334.7 253.2,336.2 254.5,337.7 C255.8,339.2 257.2,340.6 258.5,342.1 C259.8,343.6 261.2,345.1 262.5,346.6 C263.8,348.1 265.2,349.5 266.5,351.0 C267.8,352.5 269.2,354.3 270.5,355.5 C271.8,356.6 273.2,357.1 274.5,357.9 C275.8,358.6 277.2,359.4 278.5,360.1 C279.8,360.9 281.2,361.7 282.5,362.4 C283.8,363.1 285.2,364.0 286.5,364.5 C287.8,365.0 289.2,365.2 290.5,365.5 C291.8,365.8 293.2,366.2 294.5,366.5 C295.8,366.8 297.2,367.4 298.5,367.5 C299.8,367.7 301.2,367.4 302.5,367.3 C303.8,367.3 305.2,367.2 306.5,367.1 C307.8,367.0 309.2,366.9 310.5,366.8 C311.8,366.7 313.2,366.6 314.5,366.5 C315.8,366.5 317.2,366.4 318.5,366.3 C319.8,366.3 321.2,366.4 322.5,366.1 C323.8,365.9 325.2,365.6 326.5,365.0 C327.8,364.3 329.2,363.1 330.5,362.2 C331.8,361.2 333.2,360.3 334.5,359.4 C335.8,358.5 337.2,357.5 338.5,356.6 C339.8,355.7 341.2,354.8 342.5,353.8 C343.8,352.9 345.2,351.8 346.5,351.0 C347.8,350.3 349.2,349.9 350.5,349.4 C351.8,349.0 353.2,348.8 354.5,348.5 C355.8,348.2 357.2,347.9 358.5,347.6 C359.8,347.3 361.2,347.0 362.5,346.7 C363.8,346.4 365.2,346.1 366.5,345.8 C367.8,345.5 369.2,345.2 370.5,344.9 C371.8,344.7 373.2,344.5 374.5,344.3 C375.8,344.1 377.2,343.9 378.5,343.7 C379.8,343.5 381.2,343.3 382.5,343.1 C383.8,342.8 385.2,342.6 386.5,342.4 C387.8,342.2 389.2,342.0 390.5,341.8 C391.8,341.6 393.2,341.4 394.5,341.2 C395.8,341.0 397.2,340.8 398.5,340.6 C399.8,340.4 401.2,340.2 402.5,339.9 C403.8,339.7 405.2,339.5 406.5,339.3 C407.8,339.1 409.2,338.9 410.5,338.7 C411.8,338.5 413.2,338.5 414.5,338.1 C415.8,337.6 417.2,336.7 418.5,336.0 C419.8,335.3 421.2,334.5 422.5,333.7 C423.8,333.0 425.2,332.2 426.5,331.4 C427.8,330.7 429.2,329.9 430.5,329.1 C431.8,328.4 433.2,327.6 434.5,326.9 C435.8,326.1 437.2,325.3 438.5,324.6 C439.8,323.8 441.2,322.7 442.5,322.3 C443.8,321.9 445.2,322.0 446.5,322.0 C447.8,322.0 449.2,322.0 450.5,322.0 C451.8,322.0 453.2,322.0 454.5,322.0 C455.8,322.0 457.2,322.0 458.5,322.0 C459.8,322.0 461.2,322.0 462.5,322.0 C463.8,322.0 465.2,322.0 466.5,322.0 C467.8,322.0 469.2,322.0 470.5,322.0 C471.8,322.0 473.2,322.0 474.5,322.0 C475.8,322.0 477.2,322.0 478.5,322.0 C479.8,322.0 481.2,322.0 482.5,322.0 C483.8,322.0 485.2,322.0 486.5,322.0 C487.8,322.0 489.2,321.8 490.5,322.0 C491.8,322.2 493.2,322.7 494.5,323.2 C495.8,323.8 497.2,324.6 498.5,325.2 C499.8,325.9 501.2,326.6 502.5,327.2 C503.8,327.9 505.2,328.5 506.5,329.2 C507.8,330.0 509.2,330.8 510.5,331.6 C511.8,332.4 513.2,333.3 514.5,334.1 C515.8,334.9 517.2,335.8 518.5,336.6 C519.8,337.5 521.2,338.3 522.5,339.1 C523.8,340.0 525.2,340.8 526.5,341.6 C527.8,342.5 529.2,343.3 530.5,344.2 C531.8,345.0 533.2,345.7 534.5,346.7 C535.8,347.7 537.2,349.0 538.5,350.2 C539.8,351.4 541.2,352.7 542.5,353.9 C543.8,355.1 545.2,356.4 546.5,357.6 C547.8,358.8 549.2,360.0 550.5,361.3 C551.8,362.5 553.2,363.7 554.5,364.9 C555.8,366.2 557.2,367.6 558.5,368.6 C559.8,369.7 561.2,370.4 562.5,371.1 C563.8,371.8 565.2,372.3 566.5,372.9 C567.8,373.5 569.2,374.1 570.5,374.7 C571.8,375.3 573.2,375.9 574.5,376.5 C575.8,377.1 577.2,377.7 578.5,378.3 C579.8,378.9 581.2,379.5 582.5,380.1 C583.8,380.7 585.2,381.3 586.5,381.9 C587.8,382.5 589.2,383.1 590.5,383.7 C591.8,384.3 593.2,384.9 594.5,385.5 C595.8,386.1 597.2,387.0 598.5,387.3 C599.8,387.6 601.2,387.5 602.5,387.3 C603.8,387.2 605.2,386.6 606.5,386.3 C607.8,385.9 609.2,385.6 610.5,385.2 C611.8,384.8 613.2,385.0 614.5,384.1 C615.8,383.3 617.2,381.6 618.5,380.3 C619.8,378.9 621.2,377.4 622.5,376.0 C623.8,374.6 625.2,373.2 626.5,371.7 C627.8,370.3 629.2,368.9 630.5,367.5 C631.8,366.0 633.2,364.6 634.5,363.2 C635.8,361.8 637.2,360.4 638.5,358.9 C639.8,357.5 641.2,356.1 642.5,354.7 C643.8,353.3 645.2,351.9 646.5,350.5 C647.8,349.1 649.2,347.8 650.5,346.5 C651.8,345.2 653.2,343.8 654.5,342.5 C655.8,341.2 657.2,339.6 658.5,338.5 C659.8,337.4 661.8,336.4 662.5,336.0" fill="none" stroke="#ff0000" stroke-width="1" shape-rendering="crispEdges"/>
<path d="M10.0,199.5 C13.2,198.3 19.5,196.8 26.0,193.7 C32.5,190.6 35.9,187.7 42.5,184.0 C49.1,180.3 52.9,178.1 58.8,175.0 C64.7,171.9 67.3,170.6 71.8,168.5 C76.3,166.4 75.7,165.4 81.5,164.6 C87.3,163.8 94.5,163.8 101.0,164.4 C107.5,165.0 109.8,166.4 114.0,167.6 C118.2,168.8 118.2,168.8 122.0,170.5 C125.8,172.2 128.2,172.5 133.0,176.0 C137.8,179.5 140.8,182.8 146.0,187.8 C151.2,192.8 153.7,196.3 158.9,200.8 C164.1,205.3 166.7,206.8 171.9,210.5 C177.1,214.2 180.3,215.8 184.9,219.2 C189.5,222.6 190.3,223.6 195.0,227.4 C199.7,231.2 203.7,233.5 208.6,238.0 C213.5,242.5 215.4,243.4 219.7,249.7 C224.0,256.0 225.4,260.6 230.3,269.5 C235.2,278.4 239.3,285.1 244.4,294.1 C249.5,303.1 251.1,307.2 256.0,314.6 C260.9,322.0 263.1,324.3 269.1,331.2 C275.1,338.1 280.8,344.7 285.8,349.2 C290.8,353.7 289.8,350.9 293.9,353.5 C298.0,356.1 301.4,359.8 306.2,362.1 C311.0,364.4 311.8,363.8 318.0,365.1 C324.2,366.4 330.5,367.1 337.4,368.4 C344.3,369.7 347.0,370.1 352.6,371.6 C358.2,373.1 360.3,374.3 365.5,376.0 C370.7,377.7 373.3,380.3 378.5,380.3 C383.7,380.3 386.3,378.6 391.5,376.0 C396.7,373.4 399.3,371.0 404.5,367.3 C409.7,363.6 412.7,362.1 417.4,357.6 C422.1,353.1 422.0,349.8 428.0,344.6 C434.0,339.4 439.2,336.1 447.4,331.6 C455.6,327.1 460.3,324.1 469.0,321.9 C477.7,319.7 482.9,320.7 490.7,320.8 C498.5,320.9 501.5,321.2 508.0,322.5 C514.5,323.8 517.7,325.7 523.1,327.3 C528.5,328.9 530.0,329.1 535.0,330.5 C540.0,331.9 542.1,331.8 548.2,334.3 C554.3,336.8 559.0,339.1 565.5,343.0 C572.0,346.9 574.0,349.6 580.7,353.8 C587.4,358.0 593.4,360.5 598.9,364.2 C604.4,367.9 604.0,371.0 608.2,372.4 C612.4,373.8 615.2,372.4 619.8,371.2 C624.4,370.0 626.3,368.5 631.4,366.6 C636.5,364.7 639.3,363.8 645.3,361.9 C651.3,360.0 658.3,358.2 661.6,357.3" fill="none" stroke="#ff00ff" stroke-width="3"/>
<rect x="13.6" y="206.9" width="3.6" height="3.6" fill="#fff" stroke="#ff00ff" stroke-width="1.1"/><rect x="18.8" y="206.3" width="3.6" height="3.6" fill="#fff" stroke="#ff00ff" stroke-width="1.1"/><rect x="24.0" y="206.0" width="3.6" height="3.6" fill="#fff" stroke="#ff00ff" stroke-width="1.1"/><rect x="29.1" y="206.0" width="3.6" height="3.6" fill="#fff" stroke="#ff00ff" stroke-width="1.1"/><rect x="34.3" y="203.7" width="3.6" height="3.6" fill="#fff" stroke="#ff00ff" stroke-width="1.1"/><rect x="39.5" y="201.1" width="3.6" height="3.6" fill="#fff" stroke="#ff00ff" stroke-width="1.1"/><rect x="44.6" y="198.2" width="3.6" height="3.6" fill="#fff" stroke="#ff00ff" stroke-width="1.1"/><rect x="49.8" y="195.4" width="3.6" height="3.6" fill="#fff" stroke="#ff00ff" stroke-width="1.1"/><rect x="55.0" y="192.8" width="3.6" height="3.6" fill="#fff" stroke="#ff00ff" stroke-width="1.1"/><rect x="60.1" y="190.2" width="3.6" height="3.6" fill="#fff" stroke="#ff00ff" stroke-width="1.1"/><rect x="65.3" y="187.6" width="3.6" height="3.6" fill="#fff" stroke="#ff00ff" stroke-width="1.1"/><rect x="70.5" y="186.0" width="3.6" height="3.6" fill="#fff" stroke="#ff00ff" stroke-width="1.1"/><rect x="75.6" y="184.3" width="3.6" height="3.6" fill="#fff" stroke="#ff00ff" stroke-width="1.1"/><rect x="80.8" y="183.6" width="3.6" height="3.6" fill="#fff" stroke="#ff00ff" stroke-width="1.1"/><rect x="86.0" y="183.4" width="3.6" height="3.6" fill="#fff" stroke="#ff00ff" stroke-width="1.1"/><rect x="91.1" y="183.4" width="3.6" height="3.6" fill="#fff" stroke="#ff00ff" stroke-width="1.1"/><rect x="96.3" y="183.8" width="3.6" height="3.6" fill="#fff" stroke="#ff00ff" stroke-width="1.1"/><rect x="101.5" y="184.5" width="3.6" height="3.6" fill="#fff" stroke="#ff00ff" stroke-width="1.1"/><rect x="106.6" y="185.6" width="3.6" height="3.6" fill="#fff" stroke="#ff00ff" stroke-width="1.1"/><rect x="111.8" y="186.0" width="3.6" height="3.6" fill="#fff" stroke="#ff00ff" stroke-width="1.1"/><rect x="117.0" y="186.3" width="3.6" height="3.6" fill="#fff" stroke="#ff00ff" stroke-width="1.1"/><rect x="122.1" y="186.8" width="3.6" height="3.6" fill="#fff" stroke="#ff00ff" stroke-width="1.1"/><rect x="127.3" y="187.7" width="3.6" height="3.6" fill="#fff" stroke="#ff00ff" stroke-width="1.1"/><rect x="132.5" y="188.5" width="3.6" height="3.6" fill="#fff" stroke="#ff00ff" stroke-width="1.1"/><rect x="137.6" y="189.3" width="3.6" height="3.6" fill="#fff" stroke="#ff00ff" stroke-width="1.1"/><rect x="142.8" y="190.4" width="3.6" height="3.6" fill="#fff" stroke="#ff00ff" stroke-width="1.1"/><rect x="148.0" y="191.5" width="3.6" height="3.6" fill="#fff" stroke="#ff00ff" stroke-width="1.1"/><rect x="153.1" y="192.6" width="3.6" height="3.6" fill="#fff" stroke="#ff00ff" stroke-width="1.1"/><rect x="158.3" y="194.1" width="3.6" height="3.6" fill="#fff" stroke="#ff00ff" stroke-width="1.1"/><rect x="163.5" y="195.5" width="3.6" height="3.6" fill="#fff" stroke="#ff00ff" stroke-width="1.1"/><rect x="168.6" y="197.0" width="3.6" height="3.6" fill="#fff" stroke="#ff00ff" stroke-width="1.1"/><rect x="173.8" y="198.1" width="3.6" height="3.6" fill="#fff" stroke="#ff00ff" stroke-width="1.1"/><rect x="179.0" y="199.2" width="3.6" height="3.6" fill="#fff" stroke="#ff00ff" stroke-width="1.1"/><rect x="184.1" y="200.6" width="3.6" height="3.6" fill="#fff" stroke="#ff00ff" stroke-width="1.1"/><rect x="189.3" y="202.9" width="3.6" height="3.6" fill="#fff" stroke="#ff00ff" stroke-width="1.1"/><rect x="194.5" y="205.3" width="3.6" height="3.6" fill="#fff" stroke="#ff00ff" stroke-width="1.1"/><rect x="199.6" y="207.6" width="3.6" height="3.6" fill="#fff" stroke="#ff00ff" stroke-width="1.1"/><rect x="204.8" y="209.9" width="3.6" height="3.6" fill="#fff" stroke="#ff00ff" stroke-width="1.1"/><rect x="210.0" y="213.4" width="3.6" height="3.6" fill="#fff" stroke="#ff00ff" stroke-width="1.1"/><rect x="215.1" y="218.3" width="3.6" height="3.6" fill="#fff" stroke="#ff00ff" stroke-width="1.1"/><rect x="220.3" y="223.6" width="3.6" height="3.6" fill="#fff" stroke="#ff00ff" stroke-width="1.1"/><rect x="225.5" y="228.9" width="3.6" height="3.6" fill="#fff" stroke="#ff00ff" stroke-width="1.1"/><rect x="230.6" y="234.1" width="3.6" height="3.6" fill="#fff" stroke="#ff00ff" stroke-width="1.1"/><rect x="235.8" y="240.8" width="3.6" height="3.6" fill="#fff" stroke="#ff00ff" stroke-width="1.1"/><rect x="241.0" y="247.8" width="3.6" height="3.6" fill="#fff" stroke="#ff00ff" stroke-width="1.1"/><rect x="246.1" y="253.5" width="3.6" height="3.6" fill="#fff" stroke="#ff00ff" stroke-width="1.1"/><rect x="251.3" y="259.0" width="3.6" height="3.6" fill="#fff" stroke="#ff00ff" stroke-width="1.1"/><rect x="256.5" y="263.6" width="3.6" height="3.6" fill="#fff" stroke="#ff00ff" stroke-width="1.1"/><rect x="261.6" y="268.2" width="3.6" height="3.6" fill="#fff" stroke="#ff00ff" stroke-width="1.1"/><rect x="266.8" y="273.3" width="3.6" height="3.6" fill="#fff" stroke="#ff00ff" stroke-width="1.1"/><rect x="272.0" y="278.5" width="3.6" height="3.6" fill="#fff" stroke="#ff00ff" stroke-width="1.1"/><rect x="277.1" y="282.9" width="3.6" height="3.6" fill="#fff" stroke="#ff00ff" stroke-width="1.1"/><rect x="282.3" y="287.3" width="3.6" height="3.6" fill="#fff" stroke="#ff00ff" stroke-width="1.1"/><rect x="287.5" y="291.8" width="3.6" height="3.6" fill="#fff" stroke="#ff00ff" stroke-width="1.1"/><rect x="292.7" y="296.2" width="3.6" height="3.6" fill="#fff" stroke="#ff00ff" stroke-width="1.1"/><rect x="297.8" y="301.3" width="3.6" height="3.6" fill="#fff" stroke="#ff00ff" stroke-width="1.1"/><rect x="303.0" y="306.5" width="3.6" height="3.6" fill="#fff" stroke="#ff00ff" stroke-width="1.1"/><rect x="308.2" y="311.3" width="3.6" height="3.6" fill="#fff" stroke="#ff00ff" stroke-width="1.1"/><rect x="313.3" y="315.9" width="3.6" height="3.6" fill="#fff" stroke="#ff00ff" stroke-width="1.1"/><rect x="318.5" y="319.5" width="3.6" height="3.6" fill="#fff" stroke="#ff00ff" stroke-width="1.1"/><rect x="323.7" y="323.6" width="3.6" height="3.6" fill="#fff" stroke="#ff00ff" stroke-width="1.1"/><rect x="328.8" y="327.3" width="3.6" height="3.6" fill="#fff" stroke="#ff00ff" stroke-width="1.1"/><rect x="334.0" y="330.4" width="3.6" height="3.6" fill="#fff" stroke="#ff00ff" stroke-width="1.1"/><rect x="339.2" y="333.2" width="3.6" height="3.6" fill="#fff" stroke="#ff00ff" stroke-width="1.1"/><rect x="344.3" y="335.9" width="3.6" height="3.6" fill="#fff" stroke="#ff00ff" stroke-width="1.1"/><rect x="349.5" y="338.7" width="3.6" height="3.6" fill="#fff" stroke="#ff00ff" stroke-width="1.1"/><rect x="354.7" y="341.4" width="3.6" height="3.6" fill="#fff" stroke="#ff00ff" stroke-width="1.1"/><rect x="359.8" y="344.4" width="3.6" height="3.6" fill="#fff" stroke="#ff00ff" stroke-width="1.1"/><rect x="365.0" y="347.4" width="3.6" height="3.6" fill="#fff" stroke="#ff00ff" stroke-width="1.1"/><rect x="370.2" y="350.5" width="3.6" height="3.6" fill="#fff" stroke="#ff00ff" stroke-width="1.1"/><rect x="375.3" y="353.0" width="3.6" height="3.6" fill="#fff" stroke="#ff00ff" stroke-width="1.1"/><rect x="380.5" y="354.1" width="3.6" height="3.6" fill="#fff" stroke="#ff00ff" stroke-width="1.1"/><rect x="385.7" y="354.4" width="3.6" height="3.6" fill="#fff" stroke="#ff00ff" stroke-width="1.1"/><rect x="390.8" y="354.6" width="3.6" height="3.6" fill="#fff" stroke="#ff00ff" stroke-width="1.1"/><rect x="396.0" y="354.8" width="3.6" height="3.6" fill="#fff" stroke="#ff00ff" stroke-width="1.1"/><rect x="401.2" y="355.0" width="3.6" height="3.6" fill="#fff" stroke="#ff00ff" stroke-width="1.1"/><rect x="406.3" y="355.0" width="3.6" height="3.6" fill="#fff" stroke="#ff00ff" stroke-width="1.1"/><rect x="411.5" y="354.6" width="3.6" height="3.6" fill="#fff" stroke="#ff00ff" stroke-width="1.1"/><rect x="416.7" y="354.3" width="3.6" height="3.6" fill="#fff" stroke="#ff00ff" stroke-width="1.1"/><rect x="421.8" y="353.9" width="3.6" height="3.6" fill="#fff" stroke="#ff00ff" stroke-width="1.1"/><rect x="427.0" y="353.6" width="3.6" height="3.6" fill="#fff" stroke="#ff00ff" stroke-width="1.1"/><rect x="432.2" y="353.2" width="3.6" height="3.6" fill="#fff" stroke="#ff00ff" stroke-width="1.1"/><rect x="437.3" y="353.0" width="3.6" height="3.6" fill="#fff" stroke="#ff00ff" stroke-width="1.1"/><rect x="442.5" y="353.0" width="3.6" height="3.6" fill="#fff" stroke="#ff00ff" stroke-width="1.1"/><rect x="447.7" y="353.0" width="3.6" height="3.6" fill="#fff" stroke="#ff00ff" stroke-width="1.1"/><rect x="452.8" y="353.0" width="3.6" height="3.6" fill="#fff" stroke="#ff00ff" stroke-width="1.1"/><rect x="458.0" y="352.8" width="3.6" height="3.6" fill="#fff" stroke="#ff00ff" stroke-width="1.1"/><rect x="463.2" y="352.2" width="3.6" height="3.6" fill="#fff" stroke="#ff00ff" stroke-width="1.1"/><rect x="468.3" y="351.5" width="3.6" height="3.6" fill="#fff" stroke="#ff00ff" stroke-width="1.1"/><rect x="473.5" y="350.1" width="3.6" height="3.6" fill="#fff" stroke="#ff00ff" stroke-width="1.1"/><rect x="478.7" y="348.7" width="3.6" height="3.6" fill="#fff" stroke="#ff00ff" stroke-width="1.1"/><rect x="483.8" y="346.5" width="3.6" height="3.6" fill="#fff" stroke="#ff00ff" stroke-width="1.1"/><rect x="489.0" y="344.4" width="3.6" height="3.6" fill="#fff" stroke="#ff00ff" stroke-width="1.1"/><rect x="494.2" y="343.2" width="3.6" height="3.6" fill="#fff" stroke="#ff00ff" stroke-width="1.1"/><rect x="499.3" y="342.1" width="3.6" height="3.6" fill="#fff" stroke="#ff00ff" stroke-width="1.1"/><rect x="504.5" y="341.0" width="3.6" height="3.6" fill="#fff" stroke="#ff00ff" stroke-width="1.1"/><rect x="509.7" y="339.9" width="3.6" height="3.6" fill="#fff" stroke="#ff00ff" stroke-width="1.1"/><rect x="514.8" y="338.8" width="3.6" height="3.6" fill="#fff" stroke="#ff00ff" stroke-width="1.1"/><rect x="520.0" y="337.7" width="3.6" height="3.6" fill="#fff" stroke="#ff00ff" stroke-width="1.1"/><rect x="525.2" y="337.0" width="3.6" height="3.6" fill="#fff" stroke="#ff00ff" stroke-width="1.1"/><rect x="530.3" y="336.3" width="3.6" height="3.6" fill="#fff" stroke="#ff00ff" stroke-width="1.1"/><rect x="535.5" y="336.4" width="3.6" height="3.6" fill="#fff" stroke="#ff00ff" stroke-width="1.1"/><rect x="540.7" y="336.5" width="3.6" height="3.6" fill="#fff" stroke="#ff00ff" stroke-width="1.1"/><rect x="545.8" y="337.2" width="3.6" height="3.6" fill="#fff" stroke="#ff00ff" stroke-width="1.1"/><rect x="551.0" y="338.2" width="3.6" height="3.6" fill="#fff" stroke="#ff00ff" stroke-width="1.1"/><rect x="556.2" y="339.2" width="3.6" height="3.6" fill="#fff" stroke="#ff00ff" stroke-width="1.1"/><rect x="561.3" y="340.9" width="3.6" height="3.6" fill="#fff" stroke="#ff00ff" stroke-width="1.1"/><rect x="566.5" y="342.7" width="3.6" height="3.6" fill="#fff" stroke="#ff00ff" stroke-width="1.1"/><rect x="571.7" y="344.8" width="3.6" height="3.6" fill="#fff" stroke="#ff00ff" stroke-width="1.1"/><rect x="576.8" y="346.9" width="3.6" height="3.6" fill="#fff" stroke="#ff00ff" stroke-width="1.1"/><rect x="582.0" y="348.6" width="3.6" height="3.6" fill="#fff" stroke="#ff00ff" stroke-width="1.1"/><rect x="587.2" y="350.2" width="3.6" height="3.6" fill="#fff" stroke="#ff00ff" stroke-width="1.1"/><rect x="592.3" y="351.6" width="3.6" height="3.6" fill="#fff" stroke="#ff00ff" stroke-width="1.1"/><rect x="597.5" y="352.9" width="3.6" height="3.6" fill="#fff" stroke="#ff00ff" stroke-width="1.1"/><rect x="602.7" y="354.2" width="3.6" height="3.6" fill="#fff" stroke="#ff00ff" stroke-width="1.1"/><rect x="607.8" y="354.3" width="3.6" height="3.6" fill="#fff" stroke="#ff00ff" stroke-width="1.1"/><rect x="613.0" y="354.3" width="3.6" height="3.6" fill="#fff" stroke="#ff00ff" stroke-width="1.1"/><rect x="618.2" y="352.2" width="3.6" height="3.6" fill="#fff" stroke="#ff00ff" stroke-width="1.1"/><rect x="623.3" y="349.9" width="3.6" height="3.6" fill="#fff" stroke="#ff00ff" stroke-width="1.1"/><rect x="628.5" y="346.8" width="3.6" height="3.6" fill="#fff" stroke="#ff00ff" stroke-width="1.1"/><rect x="633.7" y="343.7" width="3.6" height="3.6" fill="#fff" stroke="#ff00ff" stroke-width="1.1"/><rect x="638.8" y="342.4" width="3.6" height="3.6" fill="#fff" stroke="#ff00ff" stroke-width="1.1"/><rect x="644.0" y="341.0" width="3.6" height="3.6" fill="#fff" stroke="#ff00ff" stroke-width="1.1"/><rect x="649.2" y="340.2" width="3.6" height="3.6" fill="#fff" stroke="#ff00ff" stroke-width="1.1"/><rect x="654.3" y="339.5" width="3.6" height="3.6" fill="#fff" stroke="#ff00ff" stroke-width="1.1"/><rect x="659.5" y="338.8" width="3.6" height="3.6" fill="#fff" stroke="#ff00ff" stroke-width="1.1"/>
<path d="M10.5,164.4 C11.0,164.8 12.5,165.8 13.5,166.4 C14.5,167.1 15.5,167.7 16.5,168.4 C17.5,169.2 18.5,169.9 19.5,170.9 C20.5,171.9 21.5,172.9 22.5,174.3 C23.5,175.6 24.5,178.0 25.5,179.1 C26.5,180.2 27.5,181.1 28.5,180.7 C29.5,180.3 30.5,178.8 31.5,176.7 C32.5,174.6 33.5,171.1 34.5,168.1 C35.5,165.1 36.5,161.5 37.5,158.7 C38.5,155.9 39.5,153.7 40.5,151.4 C41.5,149.0 42.5,146.5 43.5,144.8 C44.5,143.1 45.5,142.0 46.5,140.9 C47.5,139.9 48.5,139.2 49.5,138.3 C50.5,137.4 51.5,136.4 52.5,135.5 C53.5,134.6 54.5,133.5 55.5,132.7 C56.5,131.9 57.5,131.3 58.5,130.8 C59.5,130.4 60.5,129.7 61.5,130.2 C62.5,130.8 63.5,132.9 64.5,134.1 C65.5,135.3 66.5,136.6 67.5,137.4 C68.5,138.2 69.5,138.3 70.5,138.8 C71.5,139.3 72.5,139.9 73.5,140.3 C74.5,140.7 75.5,140.9 76.5,141.2 C77.5,141.5 78.5,141.5 79.5,142.3 C80.5,143.1 81.5,144.3 82.5,146.0 C83.5,147.6 84.5,149.4 85.5,152.2 C86.5,155.1 87.5,159.7 88.5,163.0 C89.5,166.3 90.5,168.8 91.5,171.8 C92.5,174.8 93.5,177.9 94.5,181.1 C95.5,184.3 96.5,187.9 97.5,190.8 C98.5,193.6 99.5,196.0 100.5,198.2 C101.5,200.4 102.5,202.3 103.5,204.0 C104.5,205.8 105.5,207.2 106.5,208.6 C107.5,210.0 108.5,211.7 109.5,212.6 C110.5,213.5 111.5,213.4 112.5,213.9 C113.5,214.4 114.5,214.5 115.5,215.5 C116.5,216.6 117.5,218.8 118.5,220.4 C119.5,222.0 120.5,222.5 121.5,225.3 C122.5,228.1 123.5,233.4 124.5,237.2 C125.5,240.9 126.5,244.7 127.5,247.9 C128.5,251.1 129.5,253.9 130.5,256.2 C131.5,258.6 132.5,260.0 133.5,261.9 C134.5,263.7 135.5,265.8 136.5,267.5 C137.5,269.2 138.5,270.5 139.5,271.9 C140.5,273.4 141.5,274.7 142.5,276.1 C143.5,277.4 144.5,278.6 145.5,279.9 C146.5,281.2 147.5,282.5 148.5,283.8 C149.5,285.0 150.5,286.3 151.5,287.5 C152.5,288.7 153.5,290.0 154.5,291.2 C155.5,292.3 156.5,293.7 157.5,294.6 C158.5,295.4 159.5,296.4 160.5,296.3 C161.5,296.2 162.5,294.9 163.5,294.2 C164.5,293.5 165.5,292.8 166.5,292.0 C167.5,291.1 168.5,290.1 169.5,289.0 C170.5,288.0 171.5,286.6 172.5,285.7 C173.5,284.8 174.5,284.1 175.5,283.4 C176.5,282.8 177.5,281.9 178.5,281.9 C179.5,281.8 180.5,282.1 181.5,283.1 C182.5,284.2 183.5,286.3 184.5,288.1 C185.5,289.9 186.5,291.7 187.5,294.0 C188.5,296.4 189.5,301.2 190.5,302.3 C191.5,303.4 192.5,301.0 193.5,300.6 C194.5,300.3 195.5,300.0 196.5,300.2 C197.5,300.5 198.5,301.2 199.5,301.9 C200.5,302.7 201.5,303.7 202.5,304.9 C203.5,306.2 204.5,307.7 205.5,309.5 C206.5,311.3 207.5,313.3 208.5,315.9 C209.5,318.4 210.5,321.9 211.5,325.0 C212.5,328.1 213.5,331.4 214.5,334.5 C215.5,337.5 216.5,340.3 217.5,343.4 C218.5,346.4 219.5,349.4 220.5,352.7 C221.5,356.1 222.5,359.8 223.5,363.4 C224.5,367.0 225.5,371.2 226.5,374.6 C227.5,378.0 228.5,381.1 229.5,383.8 C230.5,386.5 231.5,388.4 232.5,390.8 C233.5,393.1 234.5,395.8 235.5,397.9 C236.5,400.0 237.5,401.5 238.5,403.3 C239.5,405.0 240.5,406.6 241.5,408.3 C242.5,410.1 243.5,412.7 244.5,413.7 C245.5,414.6 246.5,413.9 247.5,413.9 C248.5,413.8 249.5,413.2 250.5,413.5 C251.5,413.8 252.5,414.8 253.5,415.5 C254.5,416.2 255.5,416.4 256.5,417.8 C257.5,419.2 258.5,421.5 259.5,423.9 C260.5,426.2 261.5,429.7 262.5,432.0 C263.5,434.3 264.5,436.3 265.5,437.7 C266.5,439.0 267.5,439.9 268.5,440.2 C269.5,440.4 270.5,439.4 271.5,439.0 C272.5,438.6 273.5,438.9 274.5,437.8 C275.5,436.7 276.5,434.5 277.5,432.5 C278.5,430.5 279.5,427.9 280.5,425.8 C281.5,423.7 282.5,421.9 283.5,420.1 C284.5,418.2 285.5,416.5 286.5,414.7 C287.5,413.0 288.5,411.2 289.5,409.6 C290.5,408.0 291.5,406.7 292.5,405.2 C293.5,403.7 294.5,402.2 295.5,400.6 C296.5,399.1 297.5,397.3 298.5,395.7 C299.5,394.0 300.5,392.6 301.5,390.7 C302.5,388.9 303.5,386.8 304.5,384.5 C305.5,382.2 306.5,379.4 307.5,376.8 C308.5,374.2 309.5,371.3 310.5,368.9 C311.5,366.5 312.5,364.3 313.5,362.2 C314.5,360.1 315.5,357.9 316.5,356.2 C317.5,354.5 318.5,353.2 319.5,352.1 C320.5,351.1 321.5,350.7 322.5,350.0 C323.5,349.3 324.5,348.7 325.5,347.8 C326.5,347.0 327.5,346.0 328.5,344.9 C329.5,343.9 330.5,342.7 331.5,341.6 C332.5,340.6 333.5,339.6 334.5,338.6 C335.5,337.6 336.5,336.6 337.5,335.5 C338.5,334.4 339.5,333.0 340.5,331.8 C341.5,330.6 342.5,329.2 343.5,328.1 C344.5,327.0 345.5,325.7 346.5,325.4 C347.5,325.0 348.5,325.9 349.5,326.2 C350.5,326.5 351.5,325.1 352.5,327.1 C353.5,329.0 354.5,334.3 355.5,338.1 C356.5,341.8 357.5,346.8 358.5,349.4 C359.5,352.1 360.5,352.9 361.5,353.9 C362.5,354.9 363.5,355.4 364.5,355.6 C365.5,355.8 366.5,355.1 367.5,355.1 C368.5,355.1 369.5,354.9 370.5,355.6 C371.5,356.3 372.5,358.2 373.5,359.5 C374.5,360.7 375.5,363.2 376.5,363.0 C377.5,362.9 378.5,360.5 379.5,358.5 C380.5,356.6 381.5,354.1 382.5,351.3 C383.5,348.6 384.5,344.9 385.5,342.2 C386.5,339.5 387.5,336.8 388.5,335.0 C389.5,333.2 390.5,332.7 391.5,331.4 C392.5,330.1 393.5,328.9 394.5,327.1 C395.5,325.4 396.5,322.2 397.5,321.0 C398.5,319.8 399.5,320.0 400.5,319.7 C401.5,319.5 402.5,319.6 403.5,319.5 C404.5,319.5 405.5,319.0 406.5,319.3 C407.5,319.6 408.5,320.8 409.5,321.5 C410.5,322.2 411.5,324.2 412.5,323.4 C413.5,322.6 414.5,319.3 415.5,316.7 C416.5,314.1 417.5,310.6 418.5,307.8 C419.5,304.9 420.5,302.2 421.5,299.4 C422.5,296.7 423.5,293.7 424.5,291.5 C425.5,289.2 426.5,287.4 427.5,285.9 C428.5,284.5 429.5,283.8 430.5,282.9 C431.5,282.0 432.5,280.8 433.5,280.3 C434.5,279.9 435.5,280.0 436.5,280.1 C437.5,280.2 438.5,280.7 439.5,281.0 C440.5,281.4 441.5,281.9 442.5,282.3 C443.5,282.8 444.5,283.2 445.5,284.0 C446.5,284.8 447.5,285.8 448.5,287.3 C449.5,288.8 450.5,291.5 451.5,293.0 C452.5,294.5 453.5,295.1 454.5,296.2 C455.5,297.3 456.5,298.8 457.5,299.7 C458.5,300.5 459.5,300.9 460.5,301.3 C461.5,301.8 462.5,302.2 463.5,302.4 C464.5,302.6 465.5,302.7 466.5,302.7 C467.5,302.7 468.5,301.9 469.5,302.3 C470.5,302.6 471.5,303.3 472.5,304.7 C473.5,306.1 474.5,308.7 475.5,310.7 C476.5,312.7 477.5,315.1 478.5,316.7 C479.5,318.4 480.5,320.0 481.5,320.7 C482.5,321.4 483.5,321.0 484.5,321.1 C485.5,321.2 486.5,321.0 487.5,321.5 C488.5,322.0 489.5,323.2 490.5,324.1 C491.5,325.0 492.5,326.0 493.5,326.9 C494.5,327.9 495.5,328.4 496.5,329.8 C497.5,331.1 498.5,333.0 499.5,334.8 C500.5,336.6 501.5,338.6 502.5,340.4 C503.5,342.2 504.5,344.0 505.5,345.8 C506.5,347.6 507.5,349.3 508.5,351.3 C509.5,353.2 510.5,355.3 511.5,357.6 C512.5,359.9 513.5,363.1 514.5,365.1 C515.5,367.1 516.5,368.4 517.5,369.7 C518.5,370.9 519.5,371.8 520.5,372.8 C521.5,373.8 522.5,374.8 523.5,375.7 C524.5,376.7 525.5,377.6 526.5,378.5 C527.5,379.3 528.5,380.0 529.5,380.8 C530.5,381.6 531.5,382.6 532.5,383.5 C533.5,384.5 534.5,385.4 535.5,386.4 C536.5,387.4 537.5,388.4 538.5,389.5 C539.5,390.7 540.5,392.2 541.5,393.5 C542.5,394.8 543.5,396.2 544.5,397.5 C545.5,398.7 546.5,399.9 547.5,401.0 C548.5,402.2 549.5,403.1 550.5,404.3 C551.5,405.4 552.5,406.4 553.5,407.7 C554.5,408.9 555.5,410.5 556.5,411.9 C557.5,413.3 558.5,414.4 559.5,416.0 C560.5,417.6 561.5,419.7 562.5,421.6 C563.5,423.6 564.5,425.8 565.5,427.8 C566.5,429.8 567.5,431.8 568.5,433.4 C569.5,435.1 570.5,437.1 571.5,437.7 C572.5,438.3 573.5,437.6 574.5,437.1 C575.5,436.6 576.5,435.5 577.5,434.5 C578.5,433.5 579.5,432.3 580.5,431.1 C581.5,429.9 582.5,428.6 583.5,427.6 C584.5,426.5 585.5,425.6 586.5,424.6 C587.5,423.6 588.5,422.7 589.5,421.7 C590.5,420.7 591.5,419.7 592.5,418.7 C593.5,417.6 594.5,416.6 595.5,415.4 C596.5,414.3 597.5,412.9 598.5,411.6 C599.5,410.3 600.5,409.0 601.5,407.5 C602.5,406.0 603.5,404.5 604.5,402.4 C605.5,400.3 606.5,398.2 607.5,395.2 C608.5,392.1 609.5,387.8 610.5,384.2 C611.5,380.6 612.5,377.1 613.5,373.4 C614.5,369.6 615.5,365.8 616.5,361.9 C617.5,358.1 618.5,355.9 619.5,350.2 C620.5,344.4 621.5,336.3 622.5,327.4 C623.5,318.6 624.5,304.5 625.5,297.0 C626.5,289.5 627.5,286.1 628.5,282.5 C629.5,278.8 630.5,276.6 631.5,274.9 C632.5,273.3 633.5,272.8 634.5,272.4 C635.5,272.0 636.5,272.5 637.5,272.5 C638.5,272.5 639.5,272.7 640.5,272.5 C641.5,272.2 642.5,271.6 643.5,271.0 C644.5,270.4 645.5,269.6 646.5,268.9 C647.5,268.2 648.5,267.3 649.5,266.6 C650.5,266.0 651.5,265.5 652.5,264.8 C653.5,264.1 654.5,263.1 655.5,262.4 C656.5,261.7 657.5,261.3 658.5,260.7 C659.5,260.2 661.0,259.3 661.5,259.1" fill="none" stroke="#0000ff" stroke-width="1" shape-rendering="crispEdges"/><path d="M10.5,159.8 C11.0,160.2 12.5,161.2 13.5,161.8 C14.5,162.5 15.5,163.1 16.5,163.8 C17.5,164.6 18.5,165.2 19.5,166.2 C20.5,167.2 21.5,168.4 22.5,169.8 C23.5,171.1 24.5,173.3 25.5,174.5 C26.5,175.6 27.5,176.7 28.5,176.8 C29.5,176.9 30.5,176.3 31.5,175.1 C32.5,173.9 33.5,171.4 34.5,169.4 C35.5,167.4 36.5,165.0 37.5,163.1 C38.5,161.2 39.5,159.7 40.5,158.0 C41.5,156.4 42.5,154.5 43.5,153.2 C44.5,151.9 45.5,151.1 46.5,150.2 C47.5,149.4 48.5,148.7 49.5,147.8 C50.5,147.0 51.5,146.0 52.5,145.2 C53.5,144.3 54.5,143.3 55.5,142.5 C56.5,141.7 57.5,141.2 58.5,140.5 C59.5,139.8 60.5,138.6 61.5,138.4 C62.5,138.3 63.5,139.1 64.5,139.5 C65.5,139.8 66.5,140.3 67.5,140.5 C68.5,140.6 69.5,140.2 70.5,140.2 C71.5,140.2 72.5,140.3 73.5,140.4 C74.5,140.4 75.5,140.4 76.5,140.5 C77.5,140.5 78.5,140.4 79.5,140.7 C80.5,141.1 81.5,141.7 82.5,142.8 C83.5,143.9 84.5,145.2 85.5,147.2 C86.5,149.2 87.5,152.6 88.5,155.0 C89.5,157.5 90.5,159.4 91.5,161.8 C92.5,164.2 93.5,166.7 94.5,169.3 C95.5,171.9 96.5,174.8 97.5,177.3 C98.5,179.8 99.5,182.0 100.5,184.1 C101.5,186.2 102.5,188.0 103.5,189.8 C104.5,191.6 105.5,193.1 106.5,194.7 C107.5,196.4 108.5,198.2 109.5,199.5 C110.5,200.8 111.5,201.4 112.5,202.4 C113.5,203.4 114.5,204.1 115.5,205.5 C116.5,207.0 117.5,209.2 118.5,211.0 C119.5,212.8 120.5,213.8 121.5,216.5 C122.5,219.2 123.5,223.6 124.5,227.0 C125.5,230.3 126.5,233.7 127.5,236.6 C128.5,239.6 129.5,242.3 130.5,244.6 C131.5,247.0 132.5,248.6 133.5,250.7 C134.5,252.7 135.5,254.8 136.5,256.7 C137.5,258.6 138.5,260.3 139.5,261.9 C140.5,263.6 141.5,265.3 142.5,266.8 C143.5,268.4 144.5,269.8 145.5,271.3 C146.5,272.8 147.5,274.3 148.5,275.7 C149.5,277.1 150.5,278.5 151.5,279.9 C152.5,281.3 153.5,282.7 154.5,284.0 C155.5,285.3 156.5,286.7 157.5,287.7 C158.5,288.7 159.5,289.8 160.5,290.1 C161.5,290.4 162.5,289.9 163.5,289.8 C164.5,289.6 165.5,289.4 166.5,289.2 C167.5,288.9 168.5,288.5 169.5,288.1 C170.5,287.6 171.5,287.0 172.5,286.6 C173.5,286.1 174.5,285.8 175.5,285.5 C176.5,285.3 177.5,284.9 178.5,284.9 C179.5,285.0 180.5,285.1 181.5,285.9 C182.5,286.7 183.5,288.2 184.5,289.5 C185.5,290.8 186.5,292.1 187.5,293.9 C188.5,295.6 189.5,299.1 190.5,299.9 C191.5,300.6 192.5,298.9 193.5,298.6 C194.5,298.3 195.5,298.0 196.5,298.1 C197.5,298.2 198.5,298.6 199.5,299.1 C200.5,299.7 201.5,300.3 202.5,301.2 C203.5,302.2 204.5,303.4 205.5,304.8 C206.5,306.2 207.5,307.6 208.5,309.6 C209.5,311.6 210.5,314.4 211.5,316.9 C212.5,319.4 213.5,322.1 214.5,324.6 C215.5,327.2 216.5,329.5 217.5,332.1 C218.5,334.8 219.5,337.5 220.5,340.4 C221.5,343.4 222.5,346.5 223.5,349.7 C224.5,352.9 225.5,356.6 226.5,359.6 C227.5,362.7 228.5,365.5 229.5,368.1 C230.5,370.7 231.5,372.7 232.5,375.1 C233.5,377.4 234.5,380.1 235.5,382.3 C236.5,384.5 237.5,386.3 238.5,388.3 C239.5,390.3 240.5,392.2 241.5,394.2 C242.5,396.3 243.5,399.1 244.5,400.6 C245.5,402.1 246.5,402.5 247.5,403.2 C248.5,404.0 249.5,404.3 250.5,405.3 C251.5,406.2 252.5,407.8 253.5,409.0 C254.5,410.2 255.5,410.8 256.5,412.5 C257.5,414.1 258.5,416.4 259.5,418.7 C260.5,420.9 261.5,423.8 262.5,425.9 C263.5,428.1 264.5,429.9 265.5,431.4 C266.5,432.8 267.5,434.0 268.5,434.6 C269.5,435.1 270.5,434.6 271.5,434.6 C272.5,434.6 273.5,435.1 274.5,434.6 C275.5,434.1 276.5,432.8 277.5,431.6 C278.5,430.3 279.5,428.5 280.5,427.1 C281.5,425.8 282.5,424.6 283.5,423.4 C284.5,422.1 285.5,421.0 286.5,419.7 C287.5,418.5 288.5,417.1 289.5,415.9 C290.5,414.7 291.5,413.7 292.5,412.5 C293.5,411.3 294.5,410.1 295.5,408.7 C296.5,407.3 297.5,405.6 298.5,404.0 C299.5,402.4 300.5,401.0 301.5,399.3 C302.5,397.5 303.5,395.6 304.5,393.5 C305.5,391.4 306.5,389.0 307.5,386.6 C308.5,384.3 309.5,381.8 310.5,379.5 C311.5,377.2 312.5,375.1 313.5,373.0 C314.5,370.9 315.5,368.8 316.5,367.0 C317.5,365.3 318.5,363.8 319.5,362.5 C320.5,361.2 321.5,360.4 322.5,359.4 C323.5,358.3 324.5,357.4 325.5,356.3 C326.5,355.1 327.5,353.9 328.5,352.6 C329.5,351.4 330.5,350.0 331.5,348.7 C332.5,347.5 333.5,346.4 334.5,345.3 C335.5,344.1 336.5,343.0 337.5,341.8 C338.5,340.5 339.5,339.2 340.5,337.8 C341.5,336.5 342.5,335.0 343.5,333.9 C344.5,332.8 345.5,331.5 346.5,331.0 C347.5,330.5 348.5,330.9 349.5,330.8 C350.5,330.7 351.5,329.3 352.5,330.6 C353.5,331.8 354.5,335.7 355.5,338.4 C356.5,341.0 357.5,344.6 358.5,346.5 C359.5,348.4 360.5,349.0 361.5,349.7 C362.5,350.4 363.5,350.7 364.5,350.9 C365.5,351.1 366.5,350.7 367.5,350.8 C368.5,350.9 369.5,350.9 370.5,351.5 C371.5,352.1 372.5,353.6 373.5,354.6 C374.5,355.6 375.5,357.4 376.5,357.5 C377.5,357.5 378.5,356.2 379.5,355.0 C380.5,353.9 381.5,352.3 382.5,350.6 C383.5,348.9 384.5,346.5 385.5,344.7 C386.5,342.8 387.5,340.8 388.5,339.5 C389.5,338.2 390.5,337.8 391.5,336.8 C392.5,335.9 393.5,335.0 394.5,333.7 C395.5,332.4 396.5,329.9 397.5,328.9 C398.5,327.8 399.5,327.7 400.5,327.3 C401.5,326.9 402.5,326.7 403.5,326.4 C404.5,326.1 405.5,325.6 406.5,325.5 C407.5,325.5 408.5,326.1 409.5,326.3 C410.5,326.4 411.5,327.5 412.5,326.5 C413.5,325.5 414.5,322.8 415.5,320.5 C416.5,318.3 417.5,315.4 418.5,313.0 C419.5,310.6 420.5,308.2 421.5,305.9 C422.5,303.5 423.5,301.0 424.5,299.0 C425.5,296.9 426.5,295.2 427.5,293.8 C428.5,292.4 429.5,291.5 430.5,290.4 C431.5,289.4 432.5,288.2 433.5,287.5 C434.5,286.8 435.5,286.5 436.5,286.3 C437.5,286.0 438.5,285.9 439.5,285.8 C440.5,285.7 441.5,285.7 442.5,285.6 C443.5,285.6 444.5,285.4 445.5,285.7 C446.5,286.0 447.5,286.5 448.5,287.4 C449.5,288.2 450.5,290.0 451.5,290.9 C452.5,291.8 453.5,292.0 454.5,292.7 C455.5,293.4 456.5,294.4 457.5,295.1 C458.5,295.7 459.5,296.1 460.5,296.5 C461.5,296.9 462.5,297.3 463.5,297.6 C464.5,297.9 465.5,298.2 466.5,298.4 C467.5,298.5 468.5,298.2 469.5,298.6 C470.5,299.0 471.5,299.7 472.5,301.0 C473.5,302.2 474.5,304.4 475.5,306.2 C476.5,307.9 477.5,309.9 478.5,311.3 C479.5,312.8 480.5,314.2 481.5,315.0 C482.5,315.8 483.5,315.8 484.5,316.2 C485.5,316.5 486.5,316.7 487.5,317.3 C488.5,317.9 489.5,319.0 490.5,319.9 C491.5,320.8 492.5,321.7 493.5,322.6 C494.5,323.5 495.5,324.2 496.5,325.3 C497.5,326.5 498.5,328.1 499.5,329.6 C500.5,331.1 501.5,332.8 502.5,334.3 C503.5,335.8 504.5,337.3 505.5,338.9 C506.5,340.4 507.5,341.7 508.5,343.4 C509.5,345.1 510.5,346.9 511.5,348.9 C512.5,350.9 513.5,353.5 514.5,355.4 C515.5,357.2 516.5,358.4 517.5,359.8 C518.5,361.1 519.5,362.3 520.5,363.6 C521.5,364.9 522.5,366.3 523.5,367.5 C524.5,368.8 525.5,370.2 526.5,371.4 C527.5,372.5 528.5,373.4 529.5,374.4 C530.5,375.5 531.5,376.6 532.5,377.7 C533.5,378.9 534.5,380.0 535.5,381.2 C536.5,382.3 537.5,383.4 538.5,384.7 C539.5,386.0 540.5,387.4 541.5,388.7 C542.5,390.1 543.5,391.5 544.5,392.8 C545.5,394.1 546.5,395.3 547.5,396.5 C548.5,397.7 549.5,398.7 550.5,399.9 C551.5,401.0 552.5,402.1 553.5,403.4 C554.5,404.6 555.5,406.1 556.5,407.4 C557.5,408.7 558.5,409.9 559.5,411.4 C560.5,412.8 561.5,414.5 562.5,416.2 C563.5,417.9 564.5,419.8 565.5,421.5 C566.5,423.1 567.5,424.9 568.5,426.3 C569.5,427.8 570.5,429.5 571.5,430.3 C572.5,431.0 573.5,430.8 574.5,430.7 C575.5,430.6 576.5,430.2 577.5,429.7 C578.5,429.2 579.5,428.6 580.5,427.9 C581.5,427.3 582.5,426.6 583.5,426.1 C584.5,425.5 585.5,425.1 586.5,424.6 C587.5,424.1 588.5,423.5 589.5,422.9 C590.5,422.3 591.5,421.7 592.5,421.1 C593.5,420.4 594.5,419.9 595.5,419.1 C596.5,418.3 597.5,417.2 598.5,416.2 C599.5,415.2 600.5,414.2 601.5,413.1 C602.5,411.9 603.5,410.9 604.5,409.2 C605.5,407.5 606.5,405.5 607.5,403.0 C608.5,400.6 609.5,397.2 610.5,394.2 C611.5,391.3 612.5,388.5 613.5,385.4 C614.5,382.3 615.5,378.8 616.5,375.5 C617.5,372.1 618.5,370.0 619.5,365.3 C620.5,360.6 621.5,354.3 622.5,347.0 C623.5,339.8 624.5,328.5 625.5,322.0 C626.5,315.6 627.5,312.1 628.5,308.4 C629.5,304.6 630.5,301.9 631.5,299.7 C632.5,297.6 633.5,296.5 634.5,295.4 C635.5,294.2 636.5,293.7 637.5,292.9 C638.5,292.0 639.5,291.5 640.5,290.2 C641.5,289.0 642.5,287.2 643.5,285.5 C644.5,283.9 645.5,281.9 646.5,280.3 C647.5,278.6 648.5,277.1 649.5,275.7 C650.5,274.3 651.5,273.2 652.5,271.8 C653.5,270.3 654.5,268.2 655.5,267.0 C656.5,265.7 657.5,265.1 658.5,264.2 C659.5,263.3 661.0,261.9 661.5,261.4" fill="none" stroke="#0000ff" stroke-width="1" shape-rendering="crispEdges"/><path d="M10.5,155.9 C11.0,156.3 12.5,157.3 13.5,157.9 C14.5,158.6 15.5,159.2 16.5,159.9 C17.5,160.6 18.5,161.2 19.5,162.2 C20.5,163.2 21.5,164.5 22.5,165.9 C23.5,167.3 24.5,169.3 25.5,170.5 C26.5,171.8 27.5,173.0 28.5,173.6 C29.5,174.1 30.5,174.3 31.5,173.8 C32.5,173.3 33.5,171.7 34.5,170.5 C35.5,169.3 36.5,168.0 37.5,166.9 C38.5,165.7 39.5,164.8 40.5,163.7 C41.5,162.6 42.5,161.2 43.5,160.3 C44.5,159.4 45.5,158.9 46.5,158.1 C47.5,157.4 48.5,156.7 49.5,155.9 C50.5,155.1 51.5,154.2 52.5,153.4 C53.5,152.5 54.5,151.6 55.5,150.8 C56.5,150.0 57.5,149.6 58.5,148.7 C59.5,147.8 60.5,146.2 61.5,145.4 C62.5,144.7 63.5,144.5 64.5,144.1 C65.5,143.7 66.5,143.5 67.5,143.0 C68.5,142.6 69.5,141.8 70.5,141.3 C71.5,140.9 72.5,140.7 73.5,140.4 C74.5,140.2 75.5,140.0 76.5,139.9 C77.5,139.7 78.5,139.4 79.5,139.4 C80.5,139.4 81.5,139.5 82.5,140.1 C83.5,140.7 84.5,141.6 85.5,142.9 C86.5,144.3 87.5,146.5 88.5,148.3 C89.5,150.0 90.5,151.5 91.5,153.3 C92.5,155.2 93.5,157.2 94.5,159.3 C95.5,161.4 96.5,163.7 97.5,165.9 C98.5,168.0 99.5,170.2 100.5,172.1 C101.5,174.1 102.5,175.9 103.5,177.7 C104.5,179.5 105.5,181.2 106.5,183.0 C107.5,184.8 108.5,186.8 109.5,188.4 C110.5,190.0 111.5,191.2 112.5,192.6 C113.5,194.0 114.5,195.3 115.5,197.0 C116.5,198.7 117.5,201.0 118.5,203.0 C119.5,205.0 120.5,206.5 121.5,209.0 C122.5,211.6 123.5,215.3 124.5,218.3 C125.5,221.3 126.5,224.3 127.5,227.1 C128.5,229.8 129.5,232.4 130.5,234.8 C131.5,237.1 132.5,239.0 133.5,241.1 C134.5,243.3 135.5,245.5 136.5,247.6 C137.5,249.6 138.5,251.5 139.5,253.5 C140.5,255.4 141.5,257.2 142.5,259.0 C143.5,260.7 144.5,262.3 145.5,263.9 C146.5,265.6 147.5,267.3 148.5,268.8 C149.5,270.4 150.5,271.9 151.5,273.4 C152.5,274.9 153.5,276.5 154.5,277.9 C155.5,279.3 156.5,280.7 157.5,281.8 C158.5,283.0 159.5,284.1 160.5,284.8 C161.5,285.5 162.5,285.6 163.5,286.0 C164.5,286.3 165.5,286.6 166.5,286.8 C167.5,287.0 168.5,287.2 169.5,287.2 C170.5,287.3 171.5,287.3 172.5,287.3 C173.5,287.3 174.5,287.3 175.5,287.3 C176.5,287.4 177.5,287.4 178.5,287.5 C179.5,287.7 180.5,287.7 181.5,288.3 C182.5,288.8 183.5,289.8 184.5,290.7 C185.5,291.7 186.5,292.5 187.5,293.7 C188.5,294.9 189.5,297.2 190.5,297.8 C191.5,298.3 192.5,297.1 193.5,296.8 C194.5,296.6 195.5,296.3 196.5,296.3 C197.5,296.3 198.5,296.5 199.5,296.8 C200.5,297.1 201.5,297.4 202.5,298.1 C203.5,298.8 204.5,299.8 205.5,300.8 C206.5,301.9 207.5,302.8 208.5,304.3 C209.5,305.9 210.5,308.0 211.5,309.9 C212.5,311.9 213.5,314.2 214.5,316.3 C215.5,318.4 216.5,320.3 217.5,322.6 C218.5,324.9 219.5,327.4 220.5,330.0 C221.5,332.6 222.5,335.3 223.5,338.1 C224.5,340.9 225.5,344.1 226.5,346.9 C227.5,349.7 228.5,352.3 229.5,354.8 C230.5,357.2 231.5,359.3 232.5,361.7 C233.5,364.1 234.5,366.7 235.5,369.1 C236.5,371.4 237.5,373.4 238.5,375.6 C239.5,377.8 240.5,379.9 241.5,382.2 C242.5,384.6 243.5,387.5 244.5,389.5 C245.5,391.5 246.5,392.8 247.5,394.2 C248.5,395.7 249.5,396.7 250.5,398.3 C251.5,399.8 252.5,401.8 253.5,403.4 C254.5,405.0 255.5,406.1 256.5,407.9 C257.5,409.7 258.5,412.1 259.5,414.2 C260.5,416.4 261.5,418.8 262.5,420.8 C263.5,422.7 264.5,424.5 265.5,426.0 C266.5,427.5 267.5,429.0 268.5,429.8 C269.5,430.6 270.5,430.5 271.5,430.8 C272.5,431.2 273.5,431.8 274.5,431.8 C275.5,431.8 276.5,431.4 277.5,430.8 C278.5,430.2 279.5,429.0 280.5,428.3 C281.5,427.5 282.5,426.9 283.5,426.1 C284.5,425.4 285.5,424.8 286.5,424.0 C287.5,423.1 288.5,422.1 289.5,421.2 C290.5,420.3 291.5,419.7 292.5,418.7 C293.5,417.8 294.5,416.9 295.5,415.6 C296.5,414.3 297.5,412.6 298.5,411.1 C299.5,409.5 300.5,408.2 301.5,406.5 C302.5,404.9 303.5,403.1 304.5,401.2 C305.5,399.3 306.5,397.1 307.5,395.0 C308.5,392.9 309.5,390.6 310.5,388.5 C311.5,386.4 312.5,384.3 313.5,382.2 C314.5,380.2 315.5,378.1 316.5,376.2 C317.5,374.4 318.5,372.8 319.5,371.3 C320.5,369.8 321.5,368.7 322.5,367.4 C323.5,366.1 324.5,364.8 325.5,363.4 C326.5,362.1 327.5,360.6 328.5,359.2 C329.5,357.7 330.5,356.2 331.5,354.8 C332.5,353.4 333.5,352.2 334.5,351.0 C335.5,349.7 336.5,348.4 337.5,347.1 C338.5,345.8 339.5,344.4 340.5,343.0 C341.5,341.6 342.5,340.0 343.5,338.8 C344.5,337.6 345.5,336.5 346.5,335.9 C347.5,335.2 348.5,335.1 349.5,334.7 C350.5,334.3 351.5,332.9 352.5,333.5 C353.5,334.2 354.5,336.9 355.5,338.7 C356.5,340.4 357.5,342.8 358.5,344.0 C359.5,345.3 360.5,345.6 361.5,346.1 C362.5,346.6 363.5,346.8 364.5,346.9 C365.5,347.1 366.5,347.0 367.5,347.1 C368.5,347.3 369.5,347.4 370.5,348.0 C371.5,348.5 372.5,349.6 373.5,350.4 C374.5,351.2 375.5,352.5 376.5,352.7 C377.5,353.0 378.5,352.5 379.5,352.0 C380.5,351.6 381.5,350.9 382.5,350.0 C383.5,349.1 384.5,347.9 385.5,346.8 C386.5,345.7 387.5,344.2 388.5,343.3 C389.5,342.4 390.5,342.1 391.5,341.4 C392.5,340.8 393.5,340.3 394.5,339.3 C395.5,338.3 396.5,336.5 397.5,335.6 C398.5,334.6 399.5,334.2 400.5,333.7 C401.5,333.1 402.5,332.7 403.5,332.3 C404.5,331.8 405.5,331.2 406.5,330.8 C407.5,330.5 408.5,330.6 409.5,330.4 C410.5,330.1 411.5,330.2 412.5,329.1 C413.5,328.0 414.5,325.7 415.5,323.8 C416.5,321.8 417.5,319.5 418.5,317.4 C419.5,315.4 420.5,313.3 421.5,311.3 C422.5,309.3 423.5,307.1 424.5,305.3 C425.5,303.5 426.5,301.9 427.5,300.5 C428.5,299.1 429.5,298.0 430.5,296.9 C431.5,295.7 432.5,294.5 433.5,293.6 C434.5,292.7 435.5,292.1 436.5,291.5 C437.5,290.8 438.5,290.4 439.5,289.9 C440.5,289.4 441.5,288.9 442.5,288.4 C443.5,288.0 444.5,287.3 445.5,287.2 C446.5,287.0 447.5,287.1 448.5,287.4 C449.5,287.7 450.5,288.7 451.5,289.1 C452.5,289.5 453.5,289.3 454.5,289.7 C455.5,290.0 456.5,290.7 457.5,291.1 C458.5,291.6 459.5,292.0 460.5,292.4 C461.5,292.8 462.5,293.2 463.5,293.6 C464.5,293.9 465.5,294.4 466.5,294.7 C467.5,295.0 468.5,295.0 469.5,295.5 C470.5,296.0 471.5,296.7 472.5,297.9 C473.5,299.0 474.5,300.8 475.5,302.3 C476.5,303.8 477.5,305.4 478.5,306.7 C479.5,308.0 480.5,309.3 481.5,310.2 C482.5,311.1 483.5,311.4 484.5,312.0 C485.5,312.5 486.5,313.0 487.5,313.7 C488.5,314.5 489.5,315.5 490.5,316.3 C491.5,317.2 492.5,318.1 493.5,318.9 C494.5,319.8 495.5,320.5 496.5,321.6 C497.5,322.6 498.5,324.0 499.5,325.2 C500.5,326.5 501.5,327.8 502.5,329.1 C503.5,330.4 504.5,331.7 505.5,332.9 C506.5,334.2 507.5,335.3 508.5,336.8 C509.5,338.2 510.5,339.7 511.5,341.4 C512.5,343.1 513.5,345.4 514.5,347.1 C515.5,348.7 516.5,349.9 517.5,351.3 C518.5,352.8 519.5,354.3 520.5,355.8 C521.5,357.4 522.5,359.0 523.5,360.6 C524.5,362.2 525.5,363.9 526.5,365.3 C527.5,366.7 528.5,367.7 529.5,369.0 C530.5,370.2 531.5,371.5 532.5,372.8 C533.5,374.1 534.5,375.4 535.5,376.7 C536.5,378.0 537.5,379.3 538.5,380.6 C539.5,381.9 540.5,383.3 541.5,384.7 C542.5,386.1 543.5,387.5 544.5,388.8 C545.5,390.1 546.5,391.4 547.5,392.7 C548.5,393.9 549.5,395.0 550.5,396.2 C551.5,397.3 552.5,398.5 553.5,399.7 C554.5,400.9 555.5,402.3 556.5,403.6 C557.5,404.9 558.5,406.1 559.5,407.4 C560.5,408.7 561.5,410.2 562.5,411.6 C563.5,413.0 564.5,414.6 565.5,416.1 C566.5,417.5 567.5,419.0 568.5,420.3 C569.5,421.6 570.5,423.1 571.5,423.9 C572.5,424.7 573.5,424.9 574.5,425.2 C575.5,425.5 576.5,425.6 577.5,425.6 C578.5,425.6 579.5,425.4 580.5,425.3 C581.5,425.1 582.5,424.9 583.5,424.8 C584.5,424.7 585.5,424.7 586.5,424.6 C587.5,424.5 588.5,424.2 589.5,424.0 C590.5,423.7 591.5,423.4 592.5,423.1 C593.5,422.9 594.5,422.7 595.5,422.2 C596.5,421.7 597.5,420.9 598.5,420.1 C599.5,419.4 600.5,418.6 601.5,417.8 C602.5,416.9 603.5,416.3 604.5,415.0 C605.5,413.6 606.5,411.8 607.5,409.8 C608.5,407.7 609.5,405.1 610.5,402.8 C611.5,400.4 612.5,398.3 613.5,395.6 C614.5,393.0 615.5,389.9 616.5,387.0 C617.5,384.1 618.5,382.0 619.5,378.2 C620.5,374.3 621.5,369.5 622.5,363.7 C623.5,357.9 624.5,348.9 625.5,343.3 C626.5,337.7 627.5,334.1 628.5,330.4 C629.5,326.6 630.5,323.4 631.5,320.8 C632.5,318.2 633.5,316.6 634.5,314.8 C635.5,313.1 636.5,311.7 637.5,310.1 C638.5,308.6 639.5,307.4 640.5,305.4 C641.5,303.3 642.5,300.4 643.5,297.9 C644.5,295.3 645.5,292.4 646.5,289.9 C647.5,287.5 648.5,285.4 649.5,283.4 C650.5,281.3 651.5,279.8 652.5,277.7 C653.5,275.6 654.5,272.6 655.5,270.9 C656.5,269.1 657.5,268.4 658.5,267.1 C659.5,265.9 661.0,264.1 661.5,263.4" fill="none" stroke="#0000ff" stroke-width="1" shape-rendering="crispEdges"/><path d="M10.5,152.2 C11.0,152.6 12.5,153.6 13.5,154.3 C14.5,154.9 15.5,155.6 16.5,156.3 C17.5,157.0 18.5,157.4 19.5,158.4 C20.5,159.4 21.5,160.9 22.5,162.3 C23.5,163.7 24.5,165.5 25.5,166.8 C26.5,168.2 27.5,169.5 28.5,170.5 C29.5,171.4 30.5,172.3 31.5,172.5 C32.5,172.7 33.5,171.9 34.5,171.5 C35.5,171.2 36.5,170.8 37.5,170.4 C38.5,170.0 39.5,169.6 40.5,169.1 C41.5,168.5 42.5,167.6 43.5,167.0 C44.5,166.4 45.5,166.2 46.5,165.6 C47.5,165.0 48.5,164.3 49.5,163.6 C50.5,162.8 51.5,161.9 52.5,161.1 C53.5,160.3 54.5,159.4 55.5,158.7 C56.5,157.9 57.5,157.5 58.5,156.4 C59.5,155.3 60.5,153.3 61.5,152.0 C62.5,150.7 63.5,149.5 64.5,148.4 C65.5,147.3 66.5,146.5 67.5,145.5 C68.5,144.5 69.5,143.2 70.5,142.4 C71.5,141.6 72.5,141.0 73.5,140.5 C74.5,140.0 75.5,139.7 76.5,139.3 C77.5,138.9 78.5,138.4 79.5,138.1 C80.5,137.9 81.5,137.5 82.5,137.6 C83.5,137.7 84.5,138.2 85.5,138.9 C86.5,139.6 87.5,140.8 88.5,141.9 C89.5,143.0 90.5,144.0 91.5,145.4 C92.5,146.7 93.5,148.3 94.5,149.9 C95.5,151.5 96.5,153.3 97.5,155.1 C98.5,156.9 99.5,159.0 100.5,160.9 C101.5,162.8 102.5,164.5 103.5,166.3 C104.5,168.1 105.5,170.0 106.5,171.9 C107.5,173.9 108.5,176.1 109.5,178.0 C110.5,179.9 111.5,181.5 112.5,183.4 C113.5,185.2 114.5,187.0 115.5,189.0 C116.5,191.0 117.5,193.3 118.5,195.5 C119.5,197.7 120.5,199.5 121.5,202.0 C122.5,204.4 123.5,207.5 124.5,210.2 C125.5,212.8 126.5,215.5 127.5,218.1 C128.5,220.6 129.5,223.1 130.5,225.5 C131.5,227.8 132.5,229.9 133.5,232.2 C134.5,234.4 135.5,236.7 136.5,239.0 C137.5,241.2 138.5,243.4 139.5,245.5 C140.5,247.6 141.5,249.7 142.5,251.6 C143.5,253.5 144.5,255.2 145.5,257.0 C146.5,258.8 147.5,260.7 148.5,262.4 C149.5,264.1 150.5,265.7 151.5,267.3 C152.5,269.0 153.5,270.7 154.5,272.2 C155.5,273.7 156.5,275.0 157.5,276.3 C158.5,277.6 159.5,278.9 160.5,279.9 C161.5,280.9 162.5,281.6 163.5,282.4 C164.5,283.2 165.5,283.9 166.5,284.5 C167.5,285.2 168.5,285.9 169.5,286.5 C170.5,287.0 171.5,287.5 172.5,288.0 C173.5,288.4 174.5,288.7 175.5,289.0 C176.5,289.3 177.5,289.7 178.5,290.0 C179.5,290.2 180.5,290.1 181.5,290.5 C182.5,290.8 183.5,291.4 184.5,291.9 C185.5,292.4 186.5,292.9 187.5,293.6 C188.5,294.2 189.5,295.5 190.5,295.8 C191.5,296.1 192.5,295.4 193.5,295.2 C194.5,295.0 195.5,294.7 196.5,294.6 C197.5,294.5 198.5,294.4 199.5,294.5 C200.5,294.6 201.5,294.7 202.5,295.2 C203.5,295.6 204.5,296.4 205.5,297.0 C206.5,297.7 207.5,298.3 208.5,299.4 C209.5,300.4 210.5,301.9 211.5,303.4 C212.5,304.9 213.5,306.7 214.5,308.4 C215.5,310.1 216.5,311.7 217.5,313.6 C218.5,315.6 219.5,317.9 220.5,320.2 C221.5,322.4 222.5,324.7 223.5,327.1 C224.5,329.6 225.5,332.4 226.5,334.9 C227.5,337.4 228.5,339.8 229.5,342.2 C230.5,344.6 231.5,346.7 232.5,349.1 C233.5,351.5 234.5,354.2 235.5,356.6 C236.5,359.0 237.5,361.2 238.5,363.6 C239.5,366.0 240.5,368.4 241.5,371.0 C242.5,373.5 243.5,376.6 244.5,379.0 C245.5,381.5 246.5,383.6 247.5,385.7 C248.5,387.8 249.5,389.6 250.5,391.7 C251.5,393.8 252.5,396.2 253.5,398.2 C254.5,400.2 255.5,401.7 256.5,403.7 C257.5,405.6 258.5,408.0 259.5,410.1 C260.5,412.1 261.5,414.1 262.5,415.9 C263.5,417.7 264.5,419.4 265.5,421.0 C266.5,422.5 267.5,424.2 268.5,425.3 C269.5,426.3 270.5,426.6 271.5,427.3 C272.5,427.9 273.5,428.8 274.5,429.3 C275.5,429.7 276.5,430.1 277.5,430.1 C278.5,430.1 279.5,429.5 280.5,429.3 C281.5,429.1 282.5,429.0 283.5,428.8 C284.5,428.5 285.5,428.4 286.5,428.0 C287.5,427.5 288.5,426.8 289.5,426.2 C290.5,425.6 291.5,425.3 292.5,424.6 C293.5,423.9 294.5,423.2 295.5,422.1 C296.5,420.9 297.5,419.2 298.5,417.7 C299.5,416.3 300.5,414.9 301.5,413.4 C302.5,411.8 303.5,410.2 304.5,408.5 C305.5,406.7 306.5,404.8 307.5,402.9 C308.5,401.0 309.5,399.0 310.5,397.0 C311.5,395.0 312.5,392.9 313.5,390.9 C314.5,388.8 315.5,386.8 316.5,384.9 C317.5,383.0 318.5,381.2 319.5,379.6 C320.5,377.9 321.5,376.4 322.5,374.9 C323.5,373.3 324.5,371.8 325.5,370.2 C326.5,368.6 327.5,366.9 328.5,365.3 C329.5,363.7 330.5,362.0 331.5,360.5 C332.5,359.0 333.5,357.7 334.5,356.3 C335.5,354.9 336.5,353.6 337.5,352.1 C338.5,350.7 339.5,349.3 340.5,347.8 C341.5,346.4 342.5,344.7 343.5,343.5 C344.5,342.2 345.5,341.3 346.5,340.4 C347.5,339.6 348.5,339.0 349.5,338.4 C350.5,337.7 351.5,336.2 352.5,336.3 C353.5,336.4 354.5,338.0 355.5,338.9 C356.5,339.8 357.5,341.0 358.5,341.7 C359.5,342.3 360.5,342.5 361.5,342.8 C362.5,343.0 363.5,343.0 364.5,343.2 C365.5,343.3 366.5,343.4 367.5,343.7 C368.5,343.9 369.5,344.2 370.5,344.7 C371.5,345.2 372.5,345.9 373.5,346.5 C374.5,347.1 375.5,347.9 376.5,348.3 C377.5,348.8 378.5,349.0 379.5,349.2 C380.5,349.4 381.5,349.5 382.5,349.4 C383.5,349.4 384.5,349.2 385.5,348.8 C386.5,348.4 387.5,347.4 388.5,346.9 C389.5,346.4 390.5,346.2 391.5,345.8 C392.5,345.4 393.5,345.2 394.5,344.5 C395.5,343.9 396.5,342.7 397.5,341.9 C398.5,341.1 399.5,340.4 400.5,339.7 C401.5,339.0 402.5,338.4 403.5,337.8 C404.5,337.1 405.5,336.4 406.5,335.8 C407.5,335.2 408.5,334.9 409.5,334.2 C410.5,333.5 411.5,332.8 412.5,331.6 C413.5,330.4 414.5,328.5 415.5,326.9 C416.5,325.2 417.5,323.4 418.5,321.6 C419.5,319.9 420.5,318.2 421.5,316.4 C422.5,314.7 423.5,312.9 424.5,311.3 C425.5,309.7 426.5,308.2 427.5,306.8 C428.5,305.4 429.5,304.2 430.5,302.9 C431.5,301.7 432.5,300.5 433.5,299.4 C434.5,298.3 435.5,297.3 436.5,296.4 C437.5,295.4 438.5,294.6 439.5,293.7 C440.5,292.8 441.5,291.9 442.5,291.1 C443.5,290.2 444.5,289.1 445.5,288.5 C446.5,287.9 447.5,287.6 448.5,287.4 C449.5,287.2 450.5,287.5 451.5,287.4 C452.5,287.3 453.5,286.8 454.5,286.8 C455.5,286.8 456.5,287.2 457.5,287.5 C458.5,287.7 459.5,288.2 460.5,288.6 C461.5,288.9 462.5,289.3 463.5,289.7 C464.5,290.2 465.5,290.8 466.5,291.2 C467.5,291.7 468.5,291.9 469.5,292.6 C470.5,293.2 471.5,293.9 472.5,294.9 C473.5,295.9 474.5,297.4 475.5,298.7 C476.5,299.9 477.5,301.2 478.5,302.4 C479.5,303.6 480.5,304.7 481.5,305.6 C482.5,306.6 483.5,307.2 484.5,308.0 C485.5,308.8 486.5,309.5 487.5,310.4 C488.5,311.2 489.5,312.1 490.5,313.0 C491.5,313.8 492.5,314.7 493.5,315.5 C494.5,316.3 495.5,317.1 496.5,318.0 C497.5,318.9 498.5,320.0 499.5,321.1 C500.5,322.1 501.5,323.2 502.5,324.2 C503.5,325.3 504.5,326.3 505.5,327.4 C506.5,328.4 507.5,329.3 508.5,330.5 C509.5,331.7 510.5,333.0 511.5,334.4 C512.5,335.9 513.5,337.8 514.5,339.3 C515.5,340.8 516.5,341.9 517.5,343.4 C518.5,345.0 519.5,346.7 520.5,348.5 C521.5,350.3 522.5,352.2 523.5,354.1 C524.5,355.9 525.5,358.0 526.5,359.6 C527.5,361.3 528.5,362.5 529.5,363.9 C530.5,365.3 531.5,366.7 532.5,368.2 C533.5,369.6 534.5,371.1 535.5,372.5 C536.5,373.9 537.5,375.3 538.5,376.7 C539.5,378.1 540.5,379.5 541.5,380.9 C542.5,382.3 543.5,383.7 544.5,385.0 C545.5,386.4 546.5,387.8 547.5,389.1 C548.5,390.3 549.5,391.5 550.5,392.7 C551.5,393.9 552.5,395.0 553.5,396.2 C554.5,397.5 555.5,398.8 556.5,400.0 C557.5,401.2 558.5,402.4 559.5,403.7 C560.5,404.9 561.5,406.0 562.5,407.3 C563.5,408.5 564.5,409.8 565.5,411.0 C566.5,412.2 567.5,413.5 568.5,414.6 C569.5,415.8 570.5,417.0 571.5,417.9 C572.5,418.8 573.5,419.4 574.5,420.1 C575.5,420.7 576.5,421.3 577.5,421.7 C578.5,422.2 579.5,422.4 580.5,422.8 C581.5,423.1 582.5,423.3 583.5,423.6 C584.5,423.9 585.5,424.4 586.5,424.6 C587.5,424.8 588.5,424.9 589.5,424.9 C590.5,425.0 591.5,425.0 592.5,425.1 C593.5,425.1 594.5,425.4 595.5,425.2 C596.5,425.0 597.5,424.3 598.5,423.8 C599.5,423.3 600.5,422.8 601.5,422.2 C602.5,421.7 603.5,421.4 604.5,420.4 C605.5,419.4 606.5,417.7 607.5,416.1 C608.5,414.5 609.5,412.6 610.5,410.8 C611.5,409.0 612.5,407.4 613.5,405.2 C614.5,403.1 615.5,400.3 616.5,397.8 C617.5,395.3 618.5,393.3 619.5,390.3 C620.5,387.2 621.5,383.9 622.5,379.4 C623.5,374.9 624.5,368.0 625.5,363.3 C626.5,358.6 627.5,354.9 628.5,351.1 C629.5,347.3 630.5,343.6 631.5,340.6 C632.5,337.6 633.5,335.6 634.5,333.2 C635.5,330.8 636.5,328.7 637.5,326.4 C638.5,324.1 639.5,322.4 640.5,319.6 C641.5,316.8 642.5,312.9 643.5,309.5 C644.5,306.1 645.5,302.2 646.5,299.0 C647.5,295.9 648.5,293.2 649.5,290.6 C650.5,288.0 651.5,286.0 652.5,283.3 C653.5,280.6 654.5,276.8 655.5,274.5 C656.5,272.3 657.5,271.5 658.5,269.9 C659.5,268.4 661.0,266.1 661.5,265.3" fill="none" stroke="#0000ff" stroke-width="1" shape-rendering="crispEdges"/>
<path d="M10.0,172.0 C10.6,173.7 12.5,179.3 13.7,182.0 C14.9,184.7 15.5,186.9 17.4,188.3 C19.3,189.8 22.6,191.1 24.9,190.7 C27.2,190.3 29.1,190.1 31.0,186.0 C32.9,181.9 34.2,173.7 36.0,166.0 C37.8,158.3 39.7,147.0 42.0,140.0 C44.3,133.0 46.9,128.0 50.0,124.0 C53.1,120.0 57.7,116.7 60.8,115.9 C63.9,115.1 66.1,116.7 68.4,119.2 C70.8,121.7 72.7,126.6 74.9,131.1 C77.1,135.6 79.2,140.8 81.4,146.2 C83.6,151.6 85.7,157.4 87.8,163.5 C89.9,169.6 92.4,177.2 94.3,183.0 C96.2,188.8 97.3,192.7 99.0,198.0 C100.7,203.3 102.5,210.0 104.5,215.0 C106.5,220.0 108.4,224.8 110.9,228.1 C113.4,231.4 117.1,231.0 119.6,234.6 C122.1,238.2 123.9,244.3 126.1,249.7 C128.3,255.1 130.1,261.2 132.6,267.0 C135.1,272.8 138.3,280.0 141.2,284.3 C144.1,288.6 146.7,289.8 149.9,293.0 C153.2,296.2 158.2,301.8 160.7,303.8 C163.2,305.8 163.1,306.9 165.0,304.9 C166.9,302.9 169.5,296.5 172.0,292.0 C174.5,287.5 178.0,279.9 180.1,277.8 C182.2,275.7 182.9,277.1 184.8,279.2 C186.7,281.3 189.6,287.3 191.7,290.3 C193.8,293.3 195.0,294.8 197.3,297.3 C199.6,299.9 202.8,301.4 205.6,305.6 C208.4,309.8 211.9,316.6 214.0,322.3 C216.1,328.0 216.7,333.6 218.2,340.0 C219.7,346.4 221.2,353.2 223.1,361.0 C225.0,368.8 227.4,378.2 229.6,387.0 C231.8,395.8 233.9,406.6 236.1,414.0 C238.3,421.4 240.1,427.6 242.6,431.4 C245.1,435.2 248.3,436.8 251.2,436.8 C254.1,436.8 257.0,430.9 259.9,431.4 C262.8,431.9 265.6,437.3 268.5,440.0 C271.4,442.7 275.0,447.2 277.2,447.6 C279.4,448.0 279.7,449.0 281.5,442.2 C283.3,435.4 285.8,415.0 288.0,407.0 C290.2,399.0 292.0,398.7 294.5,394.0 C297.0,389.3 300.3,385.7 303.1,379.0 C305.9,372.3 309.0,360.3 311.5,354.0 C314.0,347.7 315.5,343.7 318.0,341.0 C320.5,338.3 323.4,340.0 326.6,338.0 C329.8,336.0 334.1,332.2 337.4,329.0 C340.6,325.8 343.6,320.2 346.1,319.0 C348.6,317.8 350.5,319.2 352.6,321.9 C354.8,324.5 356.9,329.1 359.0,334.9 C361.1,340.7 363.3,350.7 365.5,356.5 C367.7,362.3 369.8,368.4 372.0,369.5 C374.2,370.6 376.0,368.9 378.5,363.0 C381.0,357.1 384.7,341.2 387.2,334.0 C389.7,326.8 391.1,325.6 393.6,320.0 C396.1,314.4 400.1,303.2 402.3,300.3 C404.5,297.4 405.1,299.9 407.0,302.6 C408.9,305.3 412.2,314.3 414.0,316.5 C415.8,318.7 416.7,319.1 418.0,316.0 C419.3,312.9 420.5,304.3 422.0,298.0 C423.5,291.7 425.3,283.3 427.0,278.0 C428.7,272.7 429.9,268.7 432.0,266.0 C434.1,263.3 437.0,261.5 439.6,262.0 C442.2,262.5 445.0,264.9 447.4,268.9 C449.8,272.9 451.7,280.4 453.9,286.2 C456.1,292.0 458.2,298.8 460.4,303.5 C462.6,308.2 464.4,312.1 466.9,314.3 C469.4,316.5 472.6,315.8 475.5,316.5 C478.4,317.2 481.3,317.9 484.2,318.6 C487.1,319.3 490.6,319.6 492.8,320.8 C495.0,322.0 495.2,322.8 497.1,325.8 C499.1,328.8 502.3,333.5 504.5,338.8 C506.7,344.1 508.2,350.9 510.1,357.4 C512.0,363.9 513.9,373.2 515.7,377.8 C517.6,382.4 518.1,383.0 521.2,385.2 C524.3,387.4 531.1,388.8 534.2,390.8 C537.3,392.8 537.3,394.5 539.6,397.0 C541.9,399.5 545.3,402.0 548.2,406.0 C551.1,410.0 554.0,416.2 556.9,420.8 C559.8,425.4 562.6,429.8 565.5,433.8 C568.4,437.8 571.3,443.9 574.2,444.6 C577.1,445.3 580.3,441.4 582.8,438.1 C585.3,434.9 587.1,429.4 589.3,425.1 C591.5,420.8 593.3,416.5 595.8,412.2 C598.3,407.9 601.6,404.2 604.5,399.2 C607.4,394.1 610.2,388.0 613.1,381.9 C616.0,375.8 619.5,375.4 621.8,362.4 C624.1,349.4 625.5,315.8 626.8,303.9 C628.0,291.9 628.0,299.6 629.3,290.7 C630.5,281.8 632.6,261.1 634.3,250.4 C636.0,239.7 637.4,229.7 639.3,226.3 C641.1,223.0 643.4,228.0 645.4,230.3 C647.4,232.7 649.4,237.1 651.4,240.4 C653.4,243.8 655.5,248.1 657.4,250.4 C659.2,252.8 661.6,253.8 662.5,254.5" fill="none" stroke="#cc0000" stroke-width="3"/>
<path d="M10.0,148.0 C12.0,149.3 15.6,150.0 19.8,154.6 C24.0,159.2 27.2,166.9 31.1,171.0 C35.0,175.1 36.0,174.5 39.3,175.0 C42.6,175.5 43.5,175.4 47.4,173.3 C51.3,171.2 55.2,168.8 58.8,164.4 C62.4,160.0 62.7,156.0 65.3,151.4 C67.9,146.8 68.2,145.0 71.8,141.6 C75.4,138.2 79.9,135.5 83.5,134.3 C87.1,133.1 87.4,133.9 90.0,135.4 C92.6,136.9 93.5,137.6 96.5,141.9 C99.5,146.2 101.6,150.1 105.1,157.0 C108.6,163.9 110.8,169.7 113.8,176.5 C116.8,183.3 117.6,185.3 120.0,191.0 C122.4,196.7 123.1,198.1 126.0,205.0 C128.9,211.9 131.6,218.1 134.7,225.5 C137.8,232.9 138.7,235.8 141.6,242.0 C144.5,248.2 146.3,251.5 149.0,256.5 C151.7,261.5 152.2,262.7 155.0,267.0 C157.8,271.3 159.5,273.6 162.8,277.8 C166.1,282.0 168.5,285.1 171.5,288.0 C174.5,290.9 174.0,291.3 178.0,292.5 C182.0,293.7 187.0,294.0 191.7,293.8 C196.4,293.6 197.9,291.6 201.5,291.7 C205.1,291.8 206.7,292.3 209.8,294.5 C212.9,296.7 214.1,298.8 216.8,302.8 C219.5,306.8 220.1,308.4 223.1,314.6 C226.1,320.8 228.3,325.8 231.8,334.0 C235.3,342.2 237.4,347.5 240.4,355.7 C243.4,363.9 244.3,367.8 246.9,375.1 C249.5,382.4 250.8,386.1 253.4,392.4 C256.0,398.7 256.9,400.9 259.9,406.5 C262.9,412.1 265.0,416.0 268.5,420.5 C272.0,425.0 273.7,426.8 277.2,429.2 C280.7,431.6 282.3,432.2 285.8,432.4 C289.3,432.6 291.0,433.1 294.5,430.3 C298.0,427.5 300.1,422.8 303.1,418.4 C306.1,414.0 306.3,413.9 309.3,408.4 C312.3,402.9 313.7,399.3 318.0,391.1 C322.3,382.9 325.8,376.0 331.0,367.3 C336.2,358.6 339.6,353.4 343.9,347.8 C348.2,342.2 348.3,340.9 352.6,339.2 C356.9,337.5 360.7,338.3 365.5,339.2 C370.3,340.1 372.5,341.1 376.4,343.5 C380.3,345.9 381.1,349.7 385.0,351.0 C388.9,352.3 391.0,352.4 395.8,350.0 C400.6,347.6 404.2,344.0 408.8,339.2 C413.4,334.4 414.4,331.7 418.7,325.8 C423.0,319.9 424.7,317.0 430.3,309.6 C435.9,302.2 441.4,294.0 446.5,288.7 C451.6,283.4 452.6,283.7 455.8,283.0 C459.0,282.3 459.5,283.6 462.6,285.1 C465.7,286.6 467.7,287.7 471.2,290.5 C474.7,293.3 476.4,295.7 479.9,299.2 C483.4,302.7 484.6,304.3 488.5,307.8 C492.4,311.3 495.0,313.0 499.3,316.5 C503.6,320.0 506.3,321.2 510.1,325.1 C513.9,329.0 515.1,330.5 518.4,336.2 C521.7,341.9 522.8,346.8 526.6,353.8 C530.4,360.8 533.1,364.6 537.4,371.1 C541.7,377.6 543.9,380.6 548.2,386.2 C552.5,391.8 554.7,394.4 559.0,399.2 C563.3,404.0 566.0,406.1 569.9,410.0 C573.8,413.9 575.0,415.6 578.5,418.6 C582.0,421.6 583.7,423.1 587.2,425.1 C590.7,427.1 592.3,428.2 595.8,428.4 C599.3,428.6 601.1,428.6 604.5,426.2 C607.9,423.8 609.5,422.1 613.0,416.5 C616.5,410.9 618.3,408.9 622.0,398.0 C625.7,387.1 627.7,374.8 631.4,362.0 C635.1,349.2 637.5,345.7 640.7,334.1 C643.9,322.5 645.3,312.7 647.6,303.9 C649.9,295.1 650.7,295.1 652.3,290.0 C653.9,284.9 653.4,283.5 655.4,278.6 C657.4,273.7 661.1,268.1 662.5,265.5" fill="none" stroke="#000" stroke-width="3"/>
<path d="M10.0,185.0 C12.2,186.6 17.6,192.3 21.1,193.2 C24.6,194.1 25.1,192.0 27.3,189.5 C29.5,187.0 30.6,184.3 32.3,180.8 C34.0,177.3 34.5,175.9 36.0,172.2 C37.5,168.5 38.0,166.8 39.7,162.3 C41.4,157.8 43.0,154.4 44.7,149.9 C46.4,145.4 46.7,144.2 48.4,140.0 C50.1,135.8 50.9,133.5 53.2,128.9 C55.5,124.3 57.5,118.7 59.7,117.0 C61.9,115.3 61.4,115.8 64.0,120.3 C66.6,124.8 69.7,134.6 72.7,139.7 C75.7,144.8 76.8,142.5 79.2,146.0 C81.6,149.5 82.9,151.8 84.6,157.0 C86.3,162.2 86.3,165.7 87.8,172.2 C89.3,178.7 90.5,182.6 92.2,189.5 C93.9,196.4 94.5,199.9 96.5,206.8 C98.5,213.7 99.8,218.7 102.3,223.8 C104.8,228.9 106.2,231.0 108.8,232.4 C111.4,233.8 112.7,229.5 115.3,231.0 C117.9,232.5 119.6,234.1 121.8,240.0 C124.0,245.9 124.4,253.8 126.1,260.5 C127.8,267.2 128.2,268.7 130.4,273.5 C132.6,278.3 133.4,280.0 136.9,284.3 C140.4,288.6 143.2,290.6 147.7,295.1 C152.2,299.6 156.1,304.8 159.6,307.0 C163.1,309.2 162.6,307.1 165.0,306.0 C167.4,304.9 168.9,304.6 171.5,301.6 C174.1,298.6 175.8,294.3 178.0,290.8 C180.2,287.3 180.6,284.5 182.3,284.3 C184.0,284.1 184.9,286.9 186.6,290.0 C188.3,293.1 189.4,297.6 191.0,300.0 C192.6,302.4 193.0,301.0 194.5,302.0 C196.0,303.0 196.8,302.9 198.7,305.0 C200.6,307.1 202.1,309.0 204.0,312.6 C205.9,316.2 205.9,315.9 208.0,323.2 C210.1,330.5 211.9,339.2 214.5,349.2 C217.1,359.2 218.4,362.6 221.0,373.0 C223.6,383.4 224.4,391.1 227.4,401.0 C230.4,410.9 232.6,416.2 236.1,422.7 C239.6,429.2 242.1,430.7 244.7,433.5 C247.3,436.3 246.4,436.8 249.0,436.8 C251.6,436.8 254.7,432.1 257.7,433.5 C260.7,434.9 262.0,441.3 264.2,444.0 C266.4,446.7 265.9,447.0 268.5,447.0 C271.1,447.0 272.9,452.2 277.2,444.0 C281.5,435.8 283.4,422.8 290.0,406.0 C296.6,389.2 302.0,373.6 310.0,360.0 C318.0,346.4 322.4,345.2 330.0,338.0 C337.6,330.8 343.0,325.6 348.2,324.0 C353.4,322.4 352.6,324.4 356.0,330.0 C359.4,335.6 360.9,343.7 365.0,352.0 C369.1,360.3 372.4,369.8 376.4,371.6 C380.4,373.4 381.6,371.3 385.0,360.8 C388.4,350.3 390.2,329.7 393.2,318.9 C396.2,308.1 397.2,308.9 400.0,307.0 C402.8,305.1 404.2,307.8 407.0,309.6 C409.8,311.4 411.4,317.9 414.0,316.0 C416.6,314.1 417.7,305.9 420.0,300.0 C422.3,294.1 423.4,292.4 425.7,286.4 C428.0,280.4 429.6,274.2 431.5,270.0 C433.4,265.8 432.5,264.1 435.0,265.5 C437.5,266.9 440.8,270.7 444.2,277.0 C447.6,283.3 449.0,290.8 451.8,297.0 C454.6,303.2 455.6,305.2 458.2,307.8 C460.8,310.4 462.1,310.2 464.7,310.0 C467.3,309.8 468.1,303.1 471.2,307.0 C474.3,310.9 477.1,325.4 480.4,329.5 C483.7,333.6 484.5,326.2 487.8,327.7 C491.1,329.2 494.1,332.5 497.1,337.0 C500.1,341.5 500.1,344.1 502.7,350.0 C505.3,355.9 507.5,359.9 510.1,366.6 C512.7,373.3 513.5,379.2 515.7,383.3 C517.9,387.4 518.2,385.5 521.2,387.0 C524.2,388.5 527.2,389.0 530.5,390.8 C533.8,392.6 534.9,393.0 537.9,396.0 C540.9,399.0 542.4,402.3 545.4,405.7 C548.4,409.1 549.8,409.4 552.8,413.1 C555.8,416.8 557.3,418.8 560.3,424.2 C563.3,429.6 565.4,435.4 567.7,440.0 C570.0,444.6 570.3,446.1 572.0,447.0 C573.7,447.9 574.2,446.4 576.4,444.6 C578.6,442.8 580.2,442.0 582.8,438.1 C585.4,434.2 586.7,430.3 589.3,425.1 C591.9,419.9 592.8,417.4 595.8,412.2 C598.8,407.0 601.0,405.3 604.5,399.2 C608.0,393.1 609.6,389.3 613.1,381.9 C616.6,374.5 619.1,378.0 621.8,362.4 C624.5,346.8 625.3,318.2 626.8,303.9 C628.3,289.6 627.8,301.4 629.3,290.7 C630.8,280.0 632.3,263.3 634.3,250.4 C636.3,237.5 637.2,230.0 639.3,226.3 C641.4,222.6 642.7,229.1 645.0,232.0 C647.3,234.9 648.6,237.4 651.0,241.0 C653.4,244.6 654.7,247.3 657.0,250.0 C659.3,252.7 661.4,253.6 662.5,254.5" fill="none" stroke="#000" stroke-width="3"/>
<path d="M639.3,226.3 C640.3,227.0 643.4,228.0 645.4,230.3 C647.4,232.7 649.4,237.1 651.4,240.4 C653.4,243.8 655.5,248.1 657.4,250.4 C659.2,252.8 661.6,253.8 662.5,254.5" fill="none" stroke="#cc0000" stroke-width="3"/>
<path d="M10.0,171.0 C11.2,171.8 15.3,174.3 17.4,175.9 C19.5,177.5 21.1,179.1 22.4,180.8 C23.7,182.5 23.9,185.1 25.0,186.0 C26.1,186.9 27.9,187.8 29.0,186.5 C30.1,185.2 30.7,182.0 31.7,178.4 C32.7,174.8 33.7,170.0 34.8,164.8 C35.9,159.6 36.9,153.4 38.5,147.4 C40.1,141.4 41.4,134.2 44.6,128.9 C47.8,123.7 54.7,117.7 57.6,115.9 C60.5,114.1 60.5,115.6 61.9,118.1 C63.3,120.6 64.4,127.5 66.2,131.1 C68.0,134.7 70.5,137.5 72.7,139.7 C74.9,141.9 77.2,141.6 79.2,144.1 C81.2,146.6 83.2,150.2 84.6,154.9 C86.0,159.6 86.5,166.4 87.8,172.2 C89.1,178.0 90.8,183.7 92.2,189.5 C93.7,195.3 95.5,202.9 96.5,206.8 C97.5,210.7 97.0,210.2 98.0,213.0 C99.0,215.8 100.5,220.6 102.3,223.8 C104.1,227.0 106.6,231.3 108.8,232.4 C111.0,233.5 113.1,229.2 115.3,230.3 C117.5,231.4 120.0,233.9 121.8,238.9 C123.6,243.9 124.7,254.7 126.1,260.5 C127.5,266.3 128.6,269.5 130.4,273.5 C132.2,277.5 134.0,280.7 136.9,284.3 C139.8,287.9 143.9,291.3 147.7,295.1 C151.5,298.9 156.3,307.0 159.6,307.0 C162.8,307.0 164.9,299.2 167.2,295.1 C169.5,291.0 171.4,285.4 173.6,282.2 C175.8,279.0 177.9,274.3 180.1,275.7 C182.3,277.1 184.8,285.4 186.6,290.8 C188.4,296.2 189.7,306.1 191.0,308.0 C192.3,309.9 193.2,302.5 194.5,302.0 C195.8,301.5 197.1,303.2 198.7,305.0 C200.3,306.8 202.4,309.6 204.0,312.6 C205.6,315.6 206.2,317.1 208.0,323.2 C209.8,329.3 212.3,340.9 214.5,349.2 C216.7,357.5 218.8,364.4 221.0,373.0 C223.2,381.6 226.0,395.2 227.4,401.0 C228.8,406.8 228.2,404.0 229.6,407.6 C231.0,411.2 233.6,418.4 236.1,422.7 C238.6,427.0 242.2,433.1 244.7,433.5 C247.2,433.9 249.0,426.1 251.2,424.9 C253.4,423.6 255.5,422.4 257.7,426.0 C259.9,429.6 262.4,442.7 264.2,446.5 C266.0,450.3 266.7,449.3 268.5,448.6 C270.3,447.9 272.8,446.9 275.0,442.2 C277.2,437.5 279.3,427.0 281.5,420.5 C283.7,414.0 285.8,408.2 288.0,403.2 C290.2,398.2 292.0,395.0 294.5,390.3 C297.0,385.6 300.3,381.8 303.1,375.1 C305.9,368.4 309.0,356.4 311.5,350.0 C314.0,343.6 315.5,339.5 318.0,337.0 C320.5,334.5 323.4,336.7 326.6,334.9 C329.8,333.1 334.1,329.3 337.4,326.2 C340.6,323.1 343.6,317.2 346.1,316.5 C348.6,315.8 350.5,315.2 352.6,321.9 C354.8,328.6 357.2,349.6 359.0,356.5 C360.8,363.4 361.6,362.3 363.4,363.0 C365.2,363.7 367.7,359.4 369.9,360.8 C372.1,362.2 374.6,371.6 376.4,371.6 C378.2,371.6 378.9,367.7 380.7,360.8 C382.5,353.9 385.0,337.4 387.2,330.5 C389.4,323.6 391.8,323.5 393.6,319.7 C395.4,315.9 395.8,309.4 398.0,307.8 C400.2,306.2 404.1,308.0 406.6,310.0 C409.1,312.0 410.9,322.1 413.1,319.7 C415.3,317.3 417.6,302.8 419.6,295.9 C421.6,289.0 423.6,282.4 425.0,278.6 C426.4,274.8 426.4,274.8 428.0,273.2 C429.6,271.6 432.3,268.5 434.5,268.9 C436.7,269.3 438.9,272.9 441.0,275.4 C443.1,277.9 445.6,280.4 447.4,284.0 C449.2,287.6 450.0,293.0 451.8,297.0 C453.6,301.0 456.1,305.6 458.2,307.8 C460.3,310.0 462.5,310.1 464.7,310.0 C466.9,309.9 468.6,303.8 471.2,307.0 C473.8,310.2 477.6,326.1 480.4,329.5 C483.2,332.9 485.0,326.4 487.8,327.7 C490.6,328.9 494.6,333.3 497.1,337.0 C499.6,340.7 500.5,345.1 502.7,350.0 C504.9,354.9 507.9,361.1 510.1,366.6 C512.3,372.2 513.9,379.9 515.7,383.3 C517.6,386.7 518.7,385.8 521.2,387.0 C523.7,388.2 527.7,389.3 530.5,390.8 C533.3,392.3 535.4,393.5 537.9,396.0 C540.4,398.5 542.9,402.8 545.4,405.7 C547.9,408.6 550.3,410.0 552.8,413.1 C555.3,416.2 557.8,419.2 560.3,424.2 C562.8,429.1 565.7,438.5 567.7,442.8 C569.7,447.1 570.8,450.2 572.3,450.2 C573.8,450.2 575.0,446.5 577.0,442.8 C579.0,439.1 581.6,432.9 584.4,428.0 C587.2,423.1 590.9,417.8 593.7,413.1 C596.5,408.5 598.9,404.4 601.1,400.1 C603.3,395.8 604.9,393.6 606.7,387.1 C608.6,380.6 610.8,367.7 612.2,361.1 C613.6,354.5 614.1,353.0 615.3,347.3 C616.5,341.6 618.3,336.6 619.6,327.0 C620.9,317.4 622.3,301.1 623.3,290.0 C624.2,278.9 624.3,268.9 625.3,260.5 C626.3,252.1 628.0,243.4 629.3,239.4 C630.6,235.4 631.6,235.6 633.3,236.4 C635.0,237.2 637.3,241.9 639.3,244.4 C641.3,246.9 642.7,249.6 645.4,251.4 C648.1,253.2 652.5,254.8 655.4,255.5 C658.2,256.2 661.3,255.5 662.5,255.5" fill="none" stroke="#0000ff" stroke-width="3"/>
<line x1="10" y1="73" x2="681" y2="345.4" stroke="#0000ee" stroke-width="2"/>
<line x1="25" y1="175" x2="141" y2="175" stroke="#0000ff" stroke-width="2" stroke-dasharray="2,3"/>
<line x1="143" y1="233" x2="300" y2="233" stroke="#0000ff" stroke-width="2" stroke-dasharray="2,3"/>
<line x1="305" y1="375" x2="460" y2="375" stroke="#0000ff" stroke-width="2" stroke-dasharray="2,3"/>
<line x1="462" y1="320" x2="611" y2="320" stroke="#0000ff" stroke-width="2" stroke-dasharray="2,3"/>
<line x1="632" y1="358" x2="662" y2="358" stroke="#0000ff" stroke-width="2" stroke-dasharray="2,3"/>
<line x1="11" y1="251" x2="680" y2="251" stroke="#000" stroke-width="2" stroke-dasharray="3.5,2.2"/>
<text x="14" y="248.5" font-size="10" fill="#1e5a12" textLength="30.5" lengthAdjust="spacingAndGlyphs">1,3591</text>
<circle cx="436" cy="254.5" r="12.5" fill="none" stroke="#000" stroke-width="3"/>
<line x1="661" y1="73.5" x2="680" y2="73.5" stroke="#ff0000" stroke-width="2"/>
<line x1="661" y1="125.5" x2="680" y2="125.5" stroke="#ff0000" stroke-width="2" stroke-dasharray="4,2.5"/>
<line x1="663" y1="189.5" x2="680" y2="189.5" stroke="#ff0000" stroke-width="1" stroke-dasharray="4,3"/>
<line x1="663" y1="243" x2="680" y2="243" stroke="#000" stroke-width="2" stroke-dasharray="4,2.5"/>
<line x1="664" y1="305.5" x2="680" y2="305.5" stroke="#0a7a0a" stroke-width="1" stroke-dasharray="4,3"/>
<line x1="664" y1="359" x2="680" y2="359" stroke="#0a7a0a" stroke-width="2" stroke-dasharray="4,2.5"/>
<line x1="661" y1="421" x2="680" y2="421" stroke="#0a7a0a" stroke-width="2"/>
<text x="12.5" y="497" font-size="10.5" fill="#1e5a12"><tspan textLength="92.5" lengthAdjust="spacingAndGlyphs">© ProRealTime.com</tspan></text>
<text x="112" y="497" font-size="10.5" font-style="italic" fill="#1e5a12" textLength="113" lengthAdjust="spacingAndGlyphs">Données en temps réel</text>
</g>
<rect x="10.5" y="72.5" width="670" height="427" fill="none" stroke="#000"/>
<line x1="680" y1="104.5" x2="685" y2="104.5" stroke="#000"/><text x="686.5" y="108.1" font-size="11" font-weight="bold" fill="#000">1,38</text><line x1="680" y1="175.5" x2="685" y2="175.5" stroke="#000"/><text x="686.5" y="179.1" font-size="11" font-weight="bold" fill="#000">1,37</text><line x1="680" y1="245.5" x2="685" y2="245.5" stroke="#000"/><text x="686.5" y="249.6" font-size="11" font-weight="bold" fill="#000">1,36</text><line x1="680" y1="316.5" x2="685" y2="316.5" stroke="#000"/><text x="686.5" y="320.1" font-size="11" font-weight="bold" fill="#000">1,35</text><line x1="680" y1="386.5" x2="685" y2="386.5" stroke="#000"/><text x="686.5" y="390.4" font-size="11" font-weight="bold" fill="#000">1,34</text><line x1="680" y1="456.5" x2="685" y2="456.5" stroke="#000"/><text x="686.5" y="460.1" font-size="11" font-weight="bold" fill="#000">1,33</text><rect x="685.5" y="72.5" width="35.5" height="15" fill="#fff" stroke="#000"/><text x="687" y="84.1" font-size="11" font-weight="bold" fill="#ff0000">1,3845</text><rect x="685.5" y="118.5" width="35.5" height="15" fill="#fff" stroke="#000"/><text x="687" y="130.1" font-size="11" font-weight="bold" fill="#ff0000">1,3768</text><rect x="685.5" y="182.5" width="28.5" height="14" fill="#fff" stroke="#000"/><text x="687" y="193.6" font-size="11" font-weight="bold" fill="#ff0000">1,368</text><rect x="685.5" y="236.5" width="34.5" height="12.5" fill="#fff" stroke="#000"/><text x="687" y="246.8" font-size="11" font-weight="bold" fill="#000">1,3603</text><rect x="685.5" y="250.0" width="41.5" height="13.5" fill="#4cc44c" stroke="#000"/><text x="687.2" y="261.1" font-size="12" fill="#000" stroke="#000" stroke-width="0.35" textLength="38" lengthAdjust="spacingAndGlyphs">45m33s</text><rect x="685.5" y="297.5" width="35.0" height="14.5" fill="#fff" stroke="#000"/><text x="687" y="308.9" font-size="11" font-weight="bold" fill="#0a7a0a">1,3515</text><rect x="685.5" y="351.5" width="35.5" height="14" fill="#fff" stroke="#000"/><text x="687" y="362.6" font-size="11" font-weight="bold" fill="#2020ff">1,3439</text><rect x="685.5" y="414.5" width="28.5" height="13" fill="#fff" stroke="#000"/><text x="687" y="425.1" font-size="11" font-weight="bold" fill="#0a7a0a">1,335</text>
<g clip-path="url(#ci)">
<line x1="11" y1="517.5" x2="661" y2="517.5" stroke="#109010" stroke-width="1"/>
<line x1="11" y1="543.5" x2="661" y2="543.5" stroke="#000" stroke-width="1.3" stroke-dasharray="3.5,2.5"/>
<line x1="11" y1="570.5" x2="661" y2="570.5" stroke="#d01010" stroke-width="1"/>
<path d="M10.5,555.4 L14.9,558.7 L19.3,580.6 L25.2,580.6 L30.4,574.7 L34.8,554.0 L38.6,547.6 L46.3,530.9 L51.5,519.3 L56.1,505.7 L60.5,505.7 L65.7,511.6 L70.8,514.2 L77.2,528.3 L82.4,539.9 L86.3,560.5 L91.4,566.9 L96.5,580.6 L164.8,580.6 L169.9,564.4 L175.1,555.4 L180.0,548.9 L185.1,541.7 L190.3,541.7 L196.0,536.0 L200.6,546.3 L205.7,576.7 L213.5,576.7 L221.2,580.6 L254.7,580.6 L257.2,579.3 L262.4,580.6 L268.8,578.5 L272.7,580.6 L277.8,566.9 L283.0,548.9 L288.1,541.2 L293.3,528.3 L298.4,510.3 L304.9,505.1 L351.2,505.1 L355.1,528.3 L362.8,545.0 L370.0,561.8 L376.4,581.1 L381.6,566.9 L386.7,550.2 L397.0,530.9 L402.2,506.4 L408.1,505.7 L412.5,511.6 L417.6,506.4 L422.8,514.2 L427.9,505.7 L433.1,509.8 L439.5,505.1 L444.7,509.0 L447.2,520.6 L455.0,541.2 L460.1,548.9 L469.1,580.6 L496.2,580.6 L501.3,575.2 L505.9,580.6 L511.1,576.0 L516.2,580.6 L578.4,580.6 L582.8,565.7 L594.3,546.3 L604.1,509.0 L609.8,505.7 L645.8,505.7 L651.0,507.7 L656.1,508.2 L661.3,510.8" fill="none" stroke="#000" stroke-width="2.5" stroke-linejoin="round"/>
</g>
<line x1="680" y1="507.5" x2="685" y2="507.5" stroke="#000"/>
<text x="687" y="513" font-size="11" font-weight="bold" fill="#000">1</text>
<line x1="680" y1="543.5" x2="685" y2="543.5" stroke="#000"/>
<text x="687" y="548.2" font-size="11" font-weight="bold" fill="#000">0,5</text>
<line x1="680" y1="581.5" x2="685" y2="581.5" stroke="#000"/>
<text x="687" y="582.6" font-size="11" font-weight="bold" fill="#000">0</text>
<line x1="20.5" y1="585" x2="20.5" y2="590" stroke="#000"/><text x="20.6" y="601" font-size="11" font-weight="bold" text-anchor="middle" fill="#000">16</text><line x1="51.5" y1="585" x2="51.5" y2="590" stroke="#000"/><text x="51.5" y="601" font-size="11" font-weight="bold" text-anchor="middle" fill="#000">17</text><line x1="82.5" y1="585" x2="82.5" y2="590" stroke="#000"/><text x="82.4" y="601" font-size="11" font-weight="bold" text-anchor="middle" fill="#000">18</text><line x1="113.5" y1="585" x2="113.5" y2="590" stroke="#000"/><text x="113.3" y="601" font-size="11" font-weight="bold" text-anchor="middle" fill="#000">19</text><line x1="144.5" y1="585" x2="144.5" y2="590" stroke="#000"/><text x="144.2" y="601" font-size="11" font-weight="bold" text-anchor="middle" fill="#000">21</text><line x1="180.5" y1="585" x2="180.5" y2="590" stroke="#000"/><text x="180.2" y="601" font-size="11" font-weight="bold" text-anchor="middle" fill="#000">23</text><line x1="210.5" y1="585" x2="210.5" y2="590" stroke="#000"/><text x="210.9" y="601" font-size="11" font-weight="bold" text-anchor="middle" fill="#000">24</text><line x1="242.5" y1="585" x2="242.5" y2="590" stroke="#000"/><text x="242.3" y="601" font-size="11" font-weight="bold" text-anchor="middle" fill="#000">25</text><line x1="273.5" y1="585" x2="273.5" y2="590" stroke="#000"/><text x="273.2" y="601" font-size="11" font-weight="bold" text-anchor="middle" fill="#000">26</text><line x1="304.5" y1="585" x2="304.5" y2="590" stroke="#000"/><text x="304.4" y="601" font-size="11" font-weight="bold" text-anchor="middle" fill="#000">28</text><line x1="340.5" y1="585" x2="340.5" y2="590" stroke="#000"/><text x="340.1" y="601" font-size="11" font-weight="bold" text-anchor="middle" fill="#000">30</text><line x1="371.5" y1="585" x2="371.5" y2="590" stroke="#000"/><text x="371.3" y="601" font-size="11" font-weight="bold" text-anchor="middle" fill="#000">31</text><line x1="402.5" y1="585" x2="402.5" y2="590" stroke="#000"/><text x="402.2" y="601" font-size="11" font-weight="bold" text-anchor="middle" fill="#000">Avr</text><line x1="433.5" y1="585" x2="433.5" y2="590" stroke="#000"/><text x="433.0" y="601" font-size="11" font-weight="bold" text-anchor="middle" fill="#000">02</text><line x1="464.5" y1="585" x2="464.5" y2="590" stroke="#000"/><text x="464.0" y="601" font-size="11" font-weight="bold" text-anchor="middle" fill="#000">04</text><line x1="501.5" y1="585" x2="501.5" y2="590" stroke="#000"/><text x="501.3" y="601" font-size="11" font-weight="bold" text-anchor="middle" fill="#000">06</text><line x1="532.5" y1="585" x2="532.5" y2="590" stroke="#000"/><text x="532.2" y="601" font-size="11" font-weight="bold" text-anchor="middle" fill="#000">07</text><line x1="563.5" y1="585" x2="563.5" y2="590" stroke="#000"/><text x="563.4" y="601" font-size="11" font-weight="bold" text-anchor="middle" fill="#000">08</text><line x1="594.5" y1="585" x2="594.5" y2="590" stroke="#000"/><text x="594.3" y="601" font-size="11" font-weight="bold" text-anchor="middle" fill="#000">09</text><line x1="625.5" y1="585" x2="625.5" y2="590" stroke="#000"/><text x="625.2" y="601" font-size="11" font-weight="bold" text-anchor="middle" fill="#000">11</text><line x1="661.5" y1="585" x2="661.5" y2="590" stroke="#000"/><text x="661.3" y="601" font-size="11" font-weight="bold" text-anchor="middle" fill="#000">13</text>
<path d="M8.5,609 L12,605.5 H724.5 L728.5,609.5 V633 L724.5,637 H12 L8.5,633.5 Z" fill="#f0f0f0" stroke="#c8c8c8"/>
<path d="M12,637 H724.5 L728.5,633" fill="none" stroke="#b0b0b0"/>
<rect x="17" y="616.5" width="16" height="10.5" fill="#fff" stroke="#000" stroke-width="1.4"/>
<path d="M18.5,627.8 H34 V617.5" fill="none" stroke="#000" stroke-width="1.4"/>
<path d="M17.5,617 L25,622.5 L32.5,617 M17.5,626.5 L22.5,622 M32.5,626.5 L27.5,622" fill="none" stroke="#000" stroke-width="1"/>
<path d="M48,613.5 H59 L57.5,619 H46.5 Z" fill="#fff" stroke="#000" stroke-width="1.3"/>
<path d="M49,615.5 H56" stroke="#000" stroke-width="1"/>
<rect x="43.5" y="618.5" width="17.5" height="8.5" rx="2.5" fill="#fff" stroke="#000" stroke-width="1.4"/>
<path d="M44,621 H61 M44,623.5 H61 M45,626 H60" stroke="#000" stroke-width="1.2"/>
<path d="M61.5,620.5 V626" stroke="#000" stroke-width="1.2" stroke-dasharray="1,1"/>
<rect x="68.5" y="608.5" width="25" height="25" fill="#f0f0f0" stroke="#333"/>
<path d="M78,612.5 H83.5 Q86,612.5 86,615.5 V617.5 Q86,619.5 84,621 Q86,622.5 86,624.5 V627 Q86,630 83.5,630 H78 Q75.5,630 75.5,627 V624.5 Q75.5,622.5 77.5,621 Q75.5,619.5 75.5,617.5 V615.5 Q75.5,612.5 78,612.5 Z" fill="#fff" stroke="#000" stroke-width="1.8"/>
<rect x="79.3" y="614.5" width="3" height="13" rx="1" fill="#fff" stroke="#000" stroke-width="1.2"/>
<rect x="103.5" y="614.5" width="12" height="14" fill="#fff" stroke="#000" stroke-width="1.4"/>
<path d="M105,617 H110 L107,619.5 H114 M105,622 H108 L111,619.5 M106,624.5 H114 L111,627 H105" fill="none" stroke="#000" stroke-width="1.1"/>
<path d="M111,615.5 H115 L113,618 Z" fill="#e05050"/><path d="M104.5,627.5 H109 L106.8,624.8 Z" fill="#30b050"/>
<rect x="129.0" y="613.5" width="8" height="2.4" fill="#40c040" stroke="#505050" stroke-width="0.5"/>
<rect x="138.5" y="613.5" width="5" height="2.4" fill="#f08080" stroke="#606060" stroke-width="0.5"/>
<rect x="131.0" y="616.5" width="6" height="2.4" fill="#40c040" stroke="#505050" stroke-width="0.5"/>
<rect x="138.5" y="616.5" width="7" height="2.4" fill="#f08080" stroke="#606060" stroke-width="0.5"/>
<rect x="129.0" y="619.5" width="8" height="2.4" fill="#40c040" stroke="#505050" stroke-width="0.5"/>
<rect x="138.5" y="619.5" width="5" height="2.4" fill="#f08080" stroke="#606060" stroke-width="0.5"/>
<rect x="132.0" y="622.5" width="5" height="2.4" fill="#40c040" stroke="#505050" stroke-width="0.5"/>
<rect x="138.5" y="622.5" width="7" height="2.4" fill="#f08080" stroke="#606060" stroke-width="0.5"/>
<rect x="129.0" y="625.5" width="8" height="2.4" fill="#40c040" stroke="#505050" stroke-width="0.5"/>
<rect x="138.5" y="625.5" width="3" height="2.4" fill="#f08080" stroke="#606060" stroke-width="0.5"/>
<rect x="153.5" y="612.5" width="459" height="17" rx="3" fill="#f4f4f4" stroke="#cfcfcf"/>
<path d="M155,613 H165.5 L167.5,615 V626.5 L165.5,628.5 H155 L153,626.5 V615 Z" fill="#f8f8f8" stroke="#a8a8a8"/><path d="M163,617 L158.5,621 L163,625 Z" fill="#000"/>
<path d="M599.5,613 H610 L612,615 V626.5 L610,628.5 H599.5 L597.5,626.5 V615 Z" fill="#f8f8f8" stroke="#a8a8a8"/><path d="M603,617 L607.5,621 L603,625 Z" fill="#000"/>
<rect x="377.5" y="613.5" width="139" height="15" rx="5" fill="#f0f0f0" stroke="#c8c8c8"/>
<path d="M445,618.5 H450 M445,620.5 H450 M445,622.5 H450" stroke="#aaa"/>
<rect x="620" y="616" width="5" height="11" fill="#e06060" stroke="#555" stroke-width="0.6"/><rect x="629" y="612" width="5" height="14" fill="#3a3" stroke="#555" stroke-width="0.6"/><path d="M621,629 L632,616 M630,613 Q635,613 634,618" stroke="#333" stroke-width="2.5" fill="none"/><path d="M621,629 L632,616" stroke="#fff" stroke-width="1" fill="none"/>
<rect x="643.5" y="608.5" width="25" height="25" fill="#e8e8e8" stroke="#555"/>
<circle cx="653" cy="618" r="5.5" fill="#bbb" stroke="#333" stroke-width="1.5"/><path d="M657,622 L661,627" stroke="#000" stroke-width="2.5"/><path d="M664,611 V620 M662,613 L664,611 L666,613 M662,618 L664,620 L666,618" stroke="#22f" fill="none" stroke-width="1.2"/><path d="M646,629 H654 M648,627 L646,629 L648,631 M652,627 L654,629 L652,631" stroke="#22f" fill="none" stroke-width="1.2"/>
<circle cx="682" cy="618" r="5.5" fill="#fff" stroke="#222" stroke-width="1.3"/><path d="M679,618 H685" stroke="#22f" stroke-width="1.5"/><path d="M686,622 L691,627" stroke="#000" stroke-width="2.5"/>
<circle cx="709" cy="618" r="5.5" fill="#fff" stroke="#222" stroke-width="1.3"/><path d="M706,618 H712 M709,615 V621" stroke="#22f" stroke-width="1.5"/><path d="M713,622 L718,627" stroke="#000" stroke-width="2.5"/>
</svg>
</body></html>
